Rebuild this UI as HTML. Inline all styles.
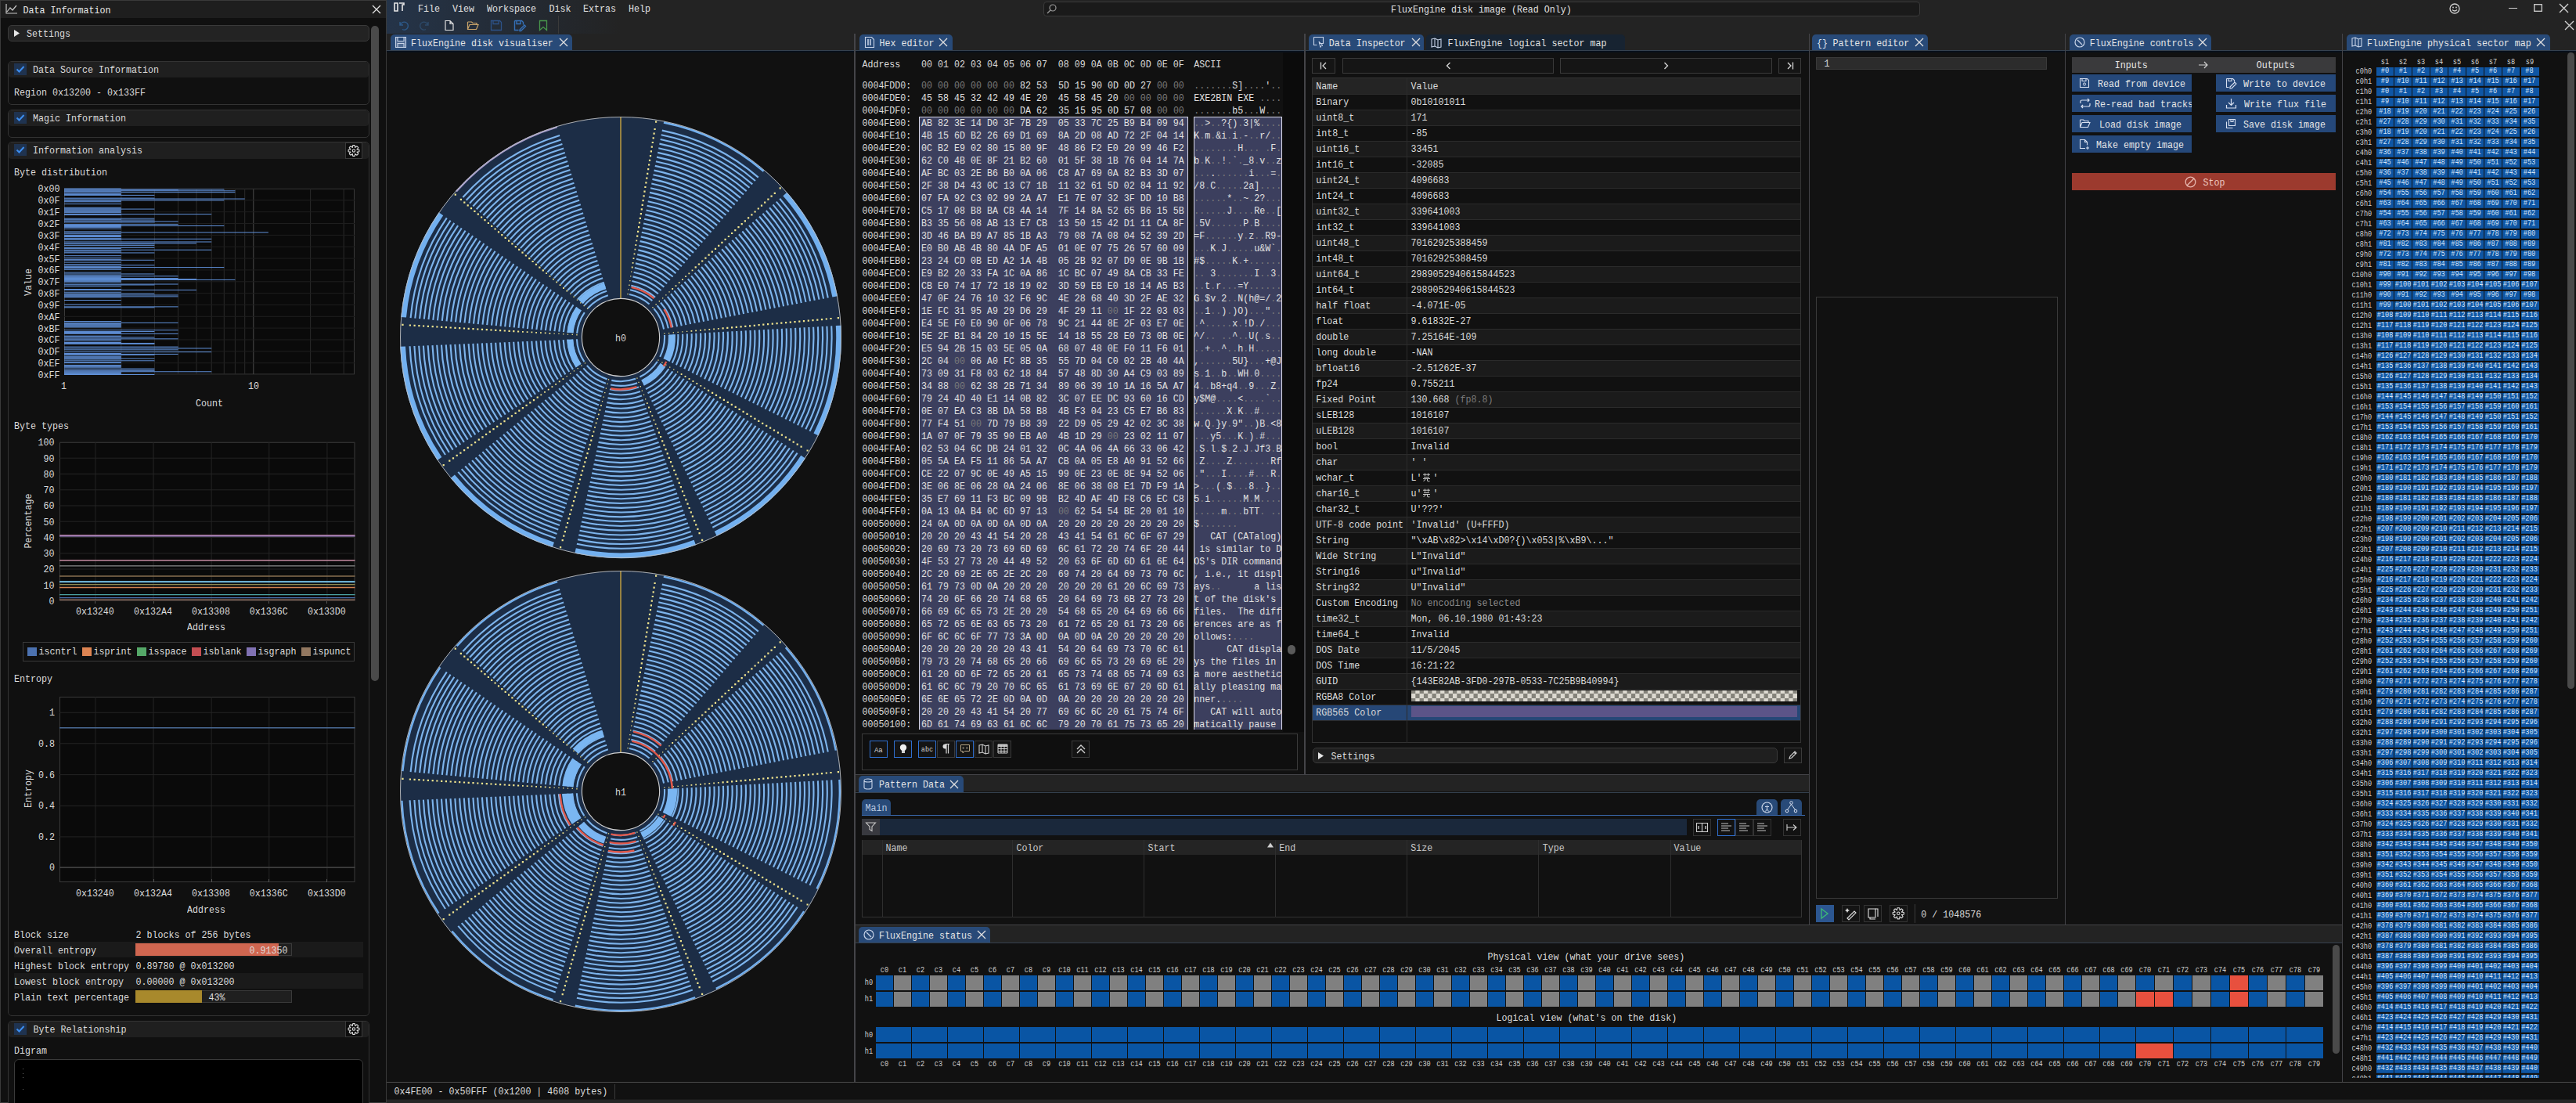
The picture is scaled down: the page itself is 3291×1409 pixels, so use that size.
<!DOCTYPE html><html><head><meta charset="utf-8"><style>
html,body{margin:0;padding:0;}
body{width:3291px;height:1409px;position:relative;overflow:hidden;background:#111111;font-family:"Liberation Mono", monospace;}
.t{position:absolute;white-space:pre;font-family:"Liberation Mono", monospace;font-size:11.67px;line-height:15px;color:#dcdcdc;transform:scaleY(1.08);transform-origin:0 10.6px;}
i{font-style:normal;color:#7a7a7a;}
.pm{position:absolute;white-space:pre;font-family:"Liberation Mono", monospace;font-size:8.6px;line-height:11px;color:#d4e4f8;transform:scaleY(1.22);transform-origin:0 50%;}
.pm b{font-weight:normal;display:inline-block;text-align:center;width:23px;}
.r{position:absolute;box-sizing:border-box;}
svg{position:absolute;overflow:visible;}
</style></head><body>
<div class="r" style="left:494.0px;top:0.0px;width:2797.0px;height:43.0px;background:#232323;"></div>
<div class="r" style="left:494.0px;top:0.0px;width:300.0px;height:43.0px;background:linear-gradient(90deg,rgba(38,66,104,0.55),rgba(35,35,35,0));"></div>
<div class="r" style="left:494.0px;top:43.0px;width:2797.0px;height:21.0px;background:#232323;"></div>
<div class="r" style="left:494.0px;top:64.0px;width:2797.0px;height:1.0px;background:#35414f;"></div>
<div class="r" style="left:494.0px;top:65.0px;width:2797.0px;height:2.0px;background:#08101b;"></div>
<svg style="left:503px;top:3px;" width="14" height="12" viewBox="0 0 14 12"><path d="M1 1h4v10h-4z" stroke="#e8e8e8" stroke-width="1.6" fill="none"/><path d="M7 1h6v2h-2v8" stroke="#e8e8e8" stroke-width="1.6" fill="none"/></svg>
<div class="t" style="left:534.0px;top:5.1px;color:#e0e0e0;">File</div>
<div class="t" style="left:578.0px;top:5.1px;color:#e0e0e0;">View</div>
<div class="t" style="left:622.0px;top:5.1px;color:#e0e0e0;">Workspace</div>
<div class="t" style="left:701.5px;top:5.1px;color:#e0e0e0;">Disk</div>
<div class="t" style="left:745.0px;top:5.1px;color:#e0e0e0;">Extras</div>
<div class="t" style="left:803.0px;top:5.1px;color:#e0e0e0;">Help</div>
<svg style="left:508px;top:26px;" width="15" height="14" viewBox="0 0 15 14"><path d="M3 2v4h4M3.5 6A5 5 0 1 1 6 11.5" stroke="#2d5a8a" stroke-width="1.4" fill="none"/></svg>
<svg style="left:538px;top:26px;" width="15" height="14" viewBox="0 0 15 14"><path d="M9 2v4h-4M8.5 6A5 5 0 1 0 6 11.5" stroke="#2d4a6a" stroke-width="1.4" fill="none"/></svg>
<svg style="left:568px;top:26px;" width="15" height="14" viewBox="0 0 15 14"><path d="M1 0.5h6l4 4v8h-10z M7 0.5v4h4" stroke="#e0e0e0" stroke-width="1.2" fill="none"/></svg>
<svg style="left:597px;top:26px;" width="15" height="14" viewBox="0 0 15 14"><path d="M0.5 2h5l1.5 1.5h5v2M0.5 2v9.5h11l2.5-6h-11l-2.5 6" stroke="#c9a46a" stroke-width="1.2" fill="none"/></svg>
<svg style="left:627px;top:26px;" width="15" height="14" viewBox="0 0 15 14"><path d="M0.5 0.5h11l2 2v10h-13z M3 0.5v4h7v-4" stroke="#2d5288" stroke-width="1.3" fill="none"/></svg>
<svg style="left:657px;top:26px;" width="15" height="14" viewBox="0 0 15 14"><path d="M0.5 0.5h9l2 2v3M0.5 0.5v12h5 M3 0.5v4h5v-4M7 12l6-6 1.5 1.5-6 6h-1.5z" stroke="#3470b8" stroke-width="1.4" fill="none"/></svg>
<svg style="left:689px;top:26px;" width="15" height="14" viewBox="0 0 15 14"><path d="M0.5 0.5h9v12l-4.5-4-4.5 4z" stroke="#48984c" stroke-width="1.3" fill="none"/></svg>
<div class="r" style="left:713.0px;top:20.0px;width:1.0px;height:23.0px;background:#3a3a3a;"></div>
<div class="r" style="left:1333.0px;top:2.0px;width:1120.0px;height:19.0px;background:#1a1a1a;border:1px solid #3a3a3a;border-radius:4px;"></div>
<svg style="left:1337px;top:5px;" width="13" height="13" viewBox="0 0 13 13"><circle cx="8" cy="5" r="4" stroke="#9a9a9a" stroke-width="1.2" fill="none"/><path d="M5 8L1 12" stroke="#9a9a9a" stroke-width="1.2"/></svg>
<div class="t" style="left:1777.0px;top:6.1px;color:#e0e0e0;">FluxEngine disk image (Read Only)</div>
<svg style="left:3129px;top:4px;" width="14" height="14" viewBox="0 0 14 14"><circle cx="7" cy="7" r="6" stroke="#d0d0d0" stroke-width="1.3" fill="none"/><circle cx="5" cy="5.5" r="0.9" fill="#d0d0d0"/><circle cx="9" cy="5.5" r="0.9" fill="#d0d0d0"/><path d="M4 8.5q3 3 6 0" stroke="#d0d0d0" stroke-width="1.2" fill="none"/></svg>
<div class="r" style="left:3204.5px;top:9.5px;width:11.0px;height:1.3px;background:#d0d0d0;"></div>
<svg style="left:3237px;top:5px;" width="11" height="10" viewBox="0 0 11 10"><rect x="0.7" y="0.7" width="9.6" height="8.6" stroke="#d0d0d0" stroke-width="1.3" fill="none"/></svg>
<svg style="left:3269.5px;top:4.5px;" width="11.0" height="11.0" viewBox="0 0 11.0 11.0"><path d="M0 0L11.0 11.0M11.0 0L0 11.0" stroke="#d0d0d0" stroke-width="1.4" fill="none"/></svg>
<svg style="left:3276.5px;top:26.5px;" width="11.0" height="11.0" viewBox="0 0 11.0 11.0"><path d="M0 0L11.0 11.0M11.0 0L0 11.0" stroke="#d0d0d0" stroke-width="1.4" fill="none"/></svg>
<div class="r" style="left:494.0px;top:1382.0px;width:2797.0px;height:1.0px;background:#3a3a3a;"></div>
<div class="r" style="left:494.0px;top:1383.0px;width:2797.0px;height:26.0px;background:#111111;"></div>
<div class="t" style="left:503.5px;top:1388.4px;">0x4FE00 - 0x50FFF (0x1200 | 4608 bytes)</div>
<div class="r" style="left:785.0px;top:1385.0px;width:1.0px;height:20.0px;background:#3a3a3a;"></div>
<div class="r" style="left:1667.5px;top:67.0px;width:643.5px;height:922.0px;background:#111111;"></div>
<div class="r" style="left:1671.7px;top:44.0px;width:147.6px;height:20.0px;background:#284a78;border-radius:5px 5px 0 0;"></div>
<div class="t" style="left:1697.7px;top:48.6px;color:#e6e6e6;">Data Inspector</div>
<svg style="left:1677.7px;top:47px;" width="14" height="14" viewBox="0 0 14 14"><path d="M0.5 0.5h12v8h-5M0.5 0.5v10h4" stroke="#c8d4e8" stroke-width="1.1" fill="none"/><path d="M7 6l5 5-2 0.5-1 2z" stroke="#c8d4e8" stroke-width="1" fill="none"/></svg>
<svg style="left:1803.5px;top:49px;" width="10" height="10" viewBox="0 0 10 10"><path d="M0 0L10 10M10 0L0 10" stroke="#e0e0e0" stroke-width="1.3" fill="none"/></svg>
<div class="r" style="left:1821.6px;top:44.0px;width:254.0px;height:20.0px;background:#172331;border-radius:5px 5px 0 0;"></div>
<svg style="left:1828px;top:48px;" width="14" height="13" viewBox="0 0 14 13"><path d="M1 2l4-1 4 2 4-1v10l-4 1-4-2-4 1z M5 1v10M9 3v10" stroke="#c8d4e8" stroke-width="1.1" fill="none"/></svg>
<div class="t" style="left:1849.6px;top:48.6px;color:#e0e0e0;">FluxEngine logical sector map</div>
<div class="r" style="left:1676.3px;top:73.7px;width:29.4px;height:20.6px;background:#151515;border:1px solid #3a3a3a;"></div>
<svg style="left:1686.0px;top:79px;" width="10" height="10" viewBox="0 0 10 10"><path d="M1.5 0.5v9M8 1L4 5l4 4" stroke="#d8d8d8" stroke-width="1.3" fill="none"/></svg>
<div class="r" style="left:1714.5px;top:73.7px;width:270.1px;height:20.6px;background:#151515;border:1px solid #3a3a3a;"></div>
<svg style="left:1846.55px;top:79px;" width="7" height="10" viewBox="0 0 7 10"><path d="M5.5 1L1.5 5l4 4" stroke="#d8d8d8" stroke-width="1.3" fill="none"/></svg>
<div class="r" style="left:1992.8px;top:73.7px;width:270.8px;height:20.6px;background:#151515;border:1px solid #3a3a3a;"></div>
<svg style="left:2125.2px;top:79px;" width="7" height="10" viewBox="0 0 7 10"><path d="M1.5 1l4 4-4 4" stroke="#d8d8d8" stroke-width="1.3" fill="none"/></svg>
<div class="r" style="left:2272.4px;top:73.7px;width:28.6px;height:20.6px;background:#151515;border:1px solid #3a3a3a;"></div>
<svg style="left:2281.7px;top:79px;" width="10" height="10" viewBox="0 0 10 10"><path d="M8.5 0.5v9M2 1l4 4-4 4" stroke="#d8d8d8" stroke-width="1.3" fill="none"/></svg>
<div class="r" style="left:1676.3px;top:99.0px;width:624.7px;height:850.2px;background:#111111;border:1px solid #333333;"></div>
<div class="r" style="left:1677.3px;top:99.5px;width:622.7px;height:20.2px;background:#242424;"></div>
<div class="t" style="left:1681.2px;top:103.6px;">Name</div>
<div class="t" style="left:1802.6px;top:103.6px;">Value</div>
<div class="r" style="left:1677.3px;top:119.7px;width:622.7px;height:1.0px;background:#2b2b2b;"></div>
<div class="t" style="left:1681.2px;top:123.8px;">Binary</div>
<div class="t" style="left:1802.6px;top:123.8px;">0b10101011</div>
<div class="r" style="left:1677.3px;top:139.7px;width:622.7px;height:20.0px;background:#1b1b1b;"></div>
<div class="r" style="left:1677.3px;top:139.7px;width:622.7px;height:1.0px;background:#2b2b2b;"></div>
<div class="t" style="left:1681.2px;top:143.8px;">uint8_t</div>
<div class="t" style="left:1802.6px;top:143.8px;">171</div>
<div class="r" style="left:1677.3px;top:159.7px;width:622.7px;height:1.0px;background:#2b2b2b;"></div>
<div class="t" style="left:1681.2px;top:163.8px;">int8_t</div>
<div class="t" style="left:1802.6px;top:163.8px;">-85</div>
<div class="r" style="left:1677.3px;top:179.7px;width:622.7px;height:20.0px;background:#1b1b1b;"></div>
<div class="r" style="left:1677.3px;top:179.7px;width:622.7px;height:1.0px;background:#2b2b2b;"></div>
<div class="t" style="left:1681.2px;top:183.8px;">uint16_t</div>
<div class="t" style="left:1802.6px;top:183.8px;">33451</div>
<div class="r" style="left:1677.3px;top:199.7px;width:622.7px;height:1.0px;background:#2b2b2b;"></div>
<div class="t" style="left:1681.2px;top:203.8px;">int16_t</div>
<div class="t" style="left:1802.6px;top:203.8px;">-32085</div>
<div class="r" style="left:1677.3px;top:219.7px;width:622.7px;height:20.0px;background:#1b1b1b;"></div>
<div class="r" style="left:1677.3px;top:219.7px;width:622.7px;height:1.0px;background:#2b2b2b;"></div>
<div class="t" style="left:1681.2px;top:223.8px;">uint24_t</div>
<div class="t" style="left:1802.6px;top:223.8px;">4096683</div>
<div class="r" style="left:1677.3px;top:239.7px;width:622.7px;height:1.0px;background:#2b2b2b;"></div>
<div class="t" style="left:1681.2px;top:243.8px;">int24_t</div>
<div class="t" style="left:1802.6px;top:243.8px;">4096683</div>
<div class="r" style="left:1677.3px;top:259.7px;width:622.7px;height:20.0px;background:#1b1b1b;"></div>
<div class="r" style="left:1677.3px;top:259.7px;width:622.7px;height:1.0px;background:#2b2b2b;"></div>
<div class="t" style="left:1681.2px;top:263.8px;">uint32_t</div>
<div class="t" style="left:1802.6px;top:263.8px;">339641003</div>
<div class="r" style="left:1677.3px;top:279.7px;width:622.7px;height:1.0px;background:#2b2b2b;"></div>
<div class="t" style="left:1681.2px;top:283.8px;">int32_t</div>
<div class="t" style="left:1802.6px;top:283.8px;">339641003</div>
<div class="r" style="left:1677.3px;top:299.7px;width:622.7px;height:20.0px;background:#1b1b1b;"></div>
<div class="r" style="left:1677.3px;top:299.7px;width:622.7px;height:1.0px;background:#2b2b2b;"></div>
<div class="t" style="left:1681.2px;top:303.8px;">uint48_t</div>
<div class="t" style="left:1802.6px;top:303.8px;">70162925388459</div>
<div class="r" style="left:1677.3px;top:319.7px;width:622.7px;height:1.0px;background:#2b2b2b;"></div>
<div class="t" style="left:1681.2px;top:323.8px;">int48_t</div>
<div class="t" style="left:1802.6px;top:323.8px;">70162925388459</div>
<div class="r" style="left:1677.3px;top:339.7px;width:622.7px;height:20.0px;background:#1b1b1b;"></div>
<div class="r" style="left:1677.3px;top:339.7px;width:622.7px;height:1.0px;background:#2b2b2b;"></div>
<div class="t" style="left:1681.2px;top:343.8px;">uint64_t</div>
<div class="t" style="left:1802.6px;top:343.8px;">2989052940615844523</div>
<div class="r" style="left:1677.3px;top:359.7px;width:622.7px;height:1.0px;background:#2b2b2b;"></div>
<div class="t" style="left:1681.2px;top:363.8px;">int64_t</div>
<div class="t" style="left:1802.6px;top:363.8px;">2989052940615844523</div>
<div class="r" style="left:1677.3px;top:379.7px;width:622.7px;height:20.0px;background:#1b1b1b;"></div>
<div class="r" style="left:1677.3px;top:379.7px;width:622.7px;height:1.0px;background:#2b2b2b;"></div>
<div class="t" style="left:1681.2px;top:383.8px;">half float</div>
<div class="t" style="left:1802.6px;top:383.8px;">-4.071E-05</div>
<div class="r" style="left:1677.3px;top:399.7px;width:622.7px;height:1.0px;background:#2b2b2b;"></div>
<div class="t" style="left:1681.2px;top:403.8px;">float</div>
<div class="t" style="left:1802.6px;top:403.8px;">9.61832E-27</div>
<div class="r" style="left:1677.3px;top:419.7px;width:622.7px;height:20.0px;background:#1b1b1b;"></div>
<div class="r" style="left:1677.3px;top:419.7px;width:622.7px;height:1.0px;background:#2b2b2b;"></div>
<div class="t" style="left:1681.2px;top:423.8px;">double</div>
<div class="t" style="left:1802.6px;top:423.8px;">7.25164E-109</div>
<div class="r" style="left:1677.3px;top:439.7px;width:622.7px;height:1.0px;background:#2b2b2b;"></div>
<div class="t" style="left:1681.2px;top:443.8px;">long double</div>
<div class="t" style="left:1802.6px;top:443.8px;">-NAN</div>
<div class="r" style="left:1677.3px;top:459.7px;width:622.7px;height:20.0px;background:#1b1b1b;"></div>
<div class="r" style="left:1677.3px;top:459.7px;width:622.7px;height:1.0px;background:#2b2b2b;"></div>
<div class="t" style="left:1681.2px;top:463.8px;">bfloat16</div>
<div class="t" style="left:1802.6px;top:463.8px;">-2.51262E-37</div>
<div class="r" style="left:1677.3px;top:479.7px;width:622.7px;height:1.0px;background:#2b2b2b;"></div>
<div class="t" style="left:1681.2px;top:483.8px;">fp24</div>
<div class="t" style="left:1802.6px;top:483.8px;">0.755211</div>
<div class="r" style="left:1677.3px;top:499.7px;width:622.7px;height:20.0px;background:#1b1b1b;"></div>
<div class="r" style="left:1677.3px;top:499.7px;width:622.7px;height:1.0px;background:#2b2b2b;"></div>
<div class="t" style="left:1681.2px;top:503.8px;">Fixed Point</div>
<div class="t" style="left:1802.6px;top:503.8px;">130.668</div>
<div class="t" style="left:1858.6px;top:503.8px;color:#7a7a7a;">(fp8.8)</div>
<div class="r" style="left:1677.3px;top:519.7px;width:622.7px;height:1.0px;background:#2b2b2b;"></div>
<div class="t" style="left:1681.2px;top:523.8px;">sLEB128</div>
<div class="t" style="left:1802.6px;top:523.8px;">1016107</div>
<div class="r" style="left:1677.3px;top:539.7px;width:622.7px;height:20.0px;background:#1b1b1b;"></div>
<div class="r" style="left:1677.3px;top:539.7px;width:622.7px;height:1.0px;background:#2b2b2b;"></div>
<div class="t" style="left:1681.2px;top:543.8px;">uLEB128</div>
<div class="t" style="left:1802.6px;top:543.8px;">1016107</div>
<div class="r" style="left:1677.3px;top:559.7px;width:622.7px;height:1.0px;background:#2b2b2b;"></div>
<div class="t" style="left:1681.2px;top:563.8px;">bool</div>
<div class="t" style="left:1802.6px;top:563.8px;">Invalid</div>
<div class="r" style="left:1677.3px;top:579.7px;width:622.7px;height:20.0px;background:#1b1b1b;"></div>
<div class="r" style="left:1677.3px;top:579.7px;width:622.7px;height:1.0px;background:#2b2b2b;"></div>
<div class="t" style="left:1681.2px;top:583.8px;">char</div>
<div class="t" style="left:1802.6px;top:583.8px;">' '</div>
<div class="r" style="left:1677.3px;top:599.7px;width:622.7px;height:1.0px;background:#2b2b2b;"></div>
<div class="t" style="left:1681.2px;top:603.8px;">wchar_t</div>
<div class="t" style="left:1802.6px;top:603.8px;">L'  '</div>
<svg style="left:1816.6px;top:604.2px;" width="11" height="11" viewBox="0 0 11 11"><path d="M1 2.2h9M3.5 0.5v3.5M7.5 0.5v3.5M2 5.5h7M1 7.5h9M4 7.5q0 2.5-2.5 3M6.5 7.5v2.5q0 0.8 1 0.8h2" stroke="#d8d8d8" stroke-width="0.9" fill="none"/></svg>
<div class="r" style="left:1677.3px;top:619.7px;width:622.7px;height:20.0px;background:#1b1b1b;"></div>
<div class="r" style="left:1677.3px;top:619.7px;width:622.7px;height:1.0px;background:#2b2b2b;"></div>
<div class="t" style="left:1681.2px;top:623.8px;">char16_t</div>
<div class="t" style="left:1802.6px;top:623.8px;">u'  '</div>
<svg style="left:1816.6px;top:624.2px;" width="11" height="11" viewBox="0 0 11 11"><path d="M1 2.2h9M3.5 0.5v3.5M7.5 0.5v3.5M2 5.5h7M1 7.5h9M4 7.5q0 2.5-2.5 3M6.5 7.5v2.5q0 0.8 1 0.8h2" stroke="#d8d8d8" stroke-width="0.9" fill="none"/></svg>
<div class="r" style="left:1677.3px;top:639.7px;width:622.7px;height:1.0px;background:#2b2b2b;"></div>
<div class="t" style="left:1681.2px;top:643.8px;">char32_t</div>
<div class="t" style="left:1802.6px;top:643.8px;">U'???'</div>
<div class="r" style="left:1677.3px;top:659.7px;width:622.7px;height:20.0px;background:#1b1b1b;"></div>
<div class="r" style="left:1677.3px;top:659.7px;width:622.7px;height:1.0px;background:#2b2b2b;"></div>
<div class="t" style="left:1681.2px;top:663.8px;">UTF-8 code point</div>
<div class="t" style="left:1802.6px;top:663.8px;">'Invalid' (U+FFFD)</div>
<div class="r" style="left:1677.3px;top:679.7px;width:622.7px;height:1.0px;background:#2b2b2b;"></div>
<div class="t" style="left:1681.2px;top:683.8px;">String</div>
<div class="t" style="left:1802.6px;top:683.8px;">"\xAB\x82&gt;\x14\xD0?{)\x053|%\xB9\..."</div>
<div class="r" style="left:1677.3px;top:699.7px;width:622.7px;height:20.0px;background:#1b1b1b;"></div>
<div class="r" style="left:1677.3px;top:699.7px;width:622.7px;height:1.0px;background:#2b2b2b;"></div>
<div class="t" style="left:1681.2px;top:703.8px;">Wide String</div>
<div class="t" style="left:1802.6px;top:703.8px;">L"Invalid"</div>
<div class="r" style="left:1677.3px;top:719.7px;width:622.7px;height:1.0px;background:#2b2b2b;"></div>
<div class="t" style="left:1681.2px;top:723.8px;">String16</div>
<div class="t" style="left:1802.6px;top:723.8px;">u"Invalid"</div>
<div class="r" style="left:1677.3px;top:739.7px;width:622.7px;height:20.0px;background:#1b1b1b;"></div>
<div class="r" style="left:1677.3px;top:739.7px;width:622.7px;height:1.0px;background:#2b2b2b;"></div>
<div class="t" style="left:1681.2px;top:743.8px;">String32</div>
<div class="t" style="left:1802.6px;top:743.8px;">U"Invalid"</div>
<div class="r" style="left:1677.3px;top:759.7px;width:622.7px;height:1.0px;background:#2b2b2b;"></div>
<div class="t" style="left:1681.2px;top:763.8px;">Custom Encoding</div>
<div class="t" style="left:1802.6px;top:763.8px;color:#8a8a8a;">No encoding selected</div>
<div class="r" style="left:1677.3px;top:779.7px;width:622.7px;height:20.0px;background:#1b1b1b;"></div>
<div class="r" style="left:1677.3px;top:779.7px;width:622.7px;height:1.0px;background:#2b2b2b;"></div>
<div class="t" style="left:1681.2px;top:783.8px;">time32_t</div>
<div class="t" style="left:1802.6px;top:783.8px;">Mon, 06.10.1980 01:43:23</div>
<div class="r" style="left:1677.3px;top:799.7px;width:622.7px;height:1.0px;background:#2b2b2b;"></div>
<div class="t" style="left:1681.2px;top:803.8px;">time64_t</div>
<div class="t" style="left:1802.6px;top:803.8px;">Invalid</div>
<div class="r" style="left:1677.3px;top:819.7px;width:622.7px;height:20.0px;background:#1b1b1b;"></div>
<div class="r" style="left:1677.3px;top:819.7px;width:622.7px;height:1.0px;background:#2b2b2b;"></div>
<div class="t" style="left:1681.2px;top:823.8px;">DOS Date</div>
<div class="t" style="left:1802.6px;top:823.8px;">11/5/2045</div>
<div class="r" style="left:1677.3px;top:839.7px;width:622.7px;height:1.0px;background:#2b2b2b;"></div>
<div class="t" style="left:1681.2px;top:843.8px;">DOS Time</div>
<div class="t" style="left:1802.6px;top:843.8px;">16:21:22</div>
<div class="r" style="left:1677.3px;top:859.7px;width:622.7px;height:20.0px;background:#1b1b1b;"></div>
<div class="r" style="left:1677.3px;top:859.7px;width:622.7px;height:1.0px;background:#2b2b2b;"></div>
<div class="t" style="left:1681.2px;top:863.8px;">GUID</div>
<div class="t" style="left:1802.6px;top:863.8px;">{143E82AB-3FD0-297B-0533-7C25B9B40994}</div>
<div class="r" style="left:1677.3px;top:879.7px;width:622.7px;height:1.0px;background:#2b2b2b;"></div>
<div class="t" style="left:1681.2px;top:883.8px;">RGBA8 Color</div>
<svg style="left:1802.6px;top:881.7px;overflow:hidden;" width="493" height="14" viewBox="0 0 493 14"><rect width="493" height="14" fill="#84827a"/><rect x="0.00" y="4" width="5.31" height="6" fill="#dcd9d0"/><rect x="5.30" y="-2" width="5.31" height="6" fill="#dcd9d0"/><rect x="5.30" y="10" width="5.31" height="6" fill="#dcd9d0"/><rect x="10.60" y="4" width="5.31" height="6" fill="#dcd9d0"/><rect x="15.90" y="-2" width="5.31" height="6" fill="#dcd9d0"/><rect x="15.90" y="10" width="5.31" height="6" fill="#dcd9d0"/><rect x="21.20" y="4" width="5.31" height="6" fill="#dcd9d0"/><rect x="26.50" y="-2" width="5.31" height="6" fill="#dcd9d0"/><rect x="26.50" y="10" width="5.31" height="6" fill="#dcd9d0"/><rect x="31.80" y="4" width="5.31" height="6" fill="#dcd9d0"/><rect x="37.10" y="-2" width="5.31" height="6" fill="#dcd9d0"/><rect x="37.10" y="10" width="5.31" height="6" fill="#dcd9d0"/><rect x="42.40" y="4" width="5.31" height="6" fill="#dcd9d0"/><rect x="47.70" y="-2" width="5.31" height="6" fill="#dcd9d0"/><rect x="47.70" y="10" width="5.31" height="6" fill="#dcd9d0"/><rect x="53.00" y="4" width="5.31" height="6" fill="#dcd9d0"/><rect x="58.30" y="-2" width="5.31" height="6" fill="#dcd9d0"/><rect x="58.30" y="10" width="5.31" height="6" fill="#dcd9d0"/><rect x="63.60" y="4" width="5.31" height="6" fill="#dcd9d0"/><rect x="68.90" y="-2" width="5.31" height="6" fill="#dcd9d0"/><rect x="68.90" y="10" width="5.31" height="6" fill="#dcd9d0"/><rect x="74.20" y="4" width="5.31" height="6" fill="#dcd9d0"/><rect x="79.50" y="-2" width="5.31" height="6" fill="#dcd9d0"/><rect x="79.50" y="10" width="5.31" height="6" fill="#dcd9d0"/><rect x="84.80" y="4" width="5.31" height="6" fill="#dcd9d0"/><rect x="90.10" y="-2" width="5.31" height="6" fill="#dcd9d0"/><rect x="90.10" y="10" width="5.31" height="6" fill="#dcd9d0"/><rect x="95.40" y="4" width="5.31" height="6" fill="#dcd9d0"/><rect x="100.70" y="-2" width="5.31" height="6" fill="#dcd9d0"/><rect x="100.70" y="10" width="5.31" height="6" fill="#dcd9d0"/><rect x="106.00" y="4" width="5.31" height="6" fill="#dcd9d0"/><rect x="111.30" y="-2" width="5.31" height="6" fill="#dcd9d0"/><rect x="111.30" y="10" width="5.31" height="6" fill="#dcd9d0"/><rect x="116.60" y="4" width="5.31" height="6" fill="#dcd9d0"/><rect x="121.90" y="-2" width="5.31" height="6" fill="#dcd9d0"/><rect x="121.90" y="10" width="5.31" height="6" fill="#dcd9d0"/><rect x="127.20" y="4" width="5.31" height="6" fill="#dcd9d0"/><rect x="132.50" y="-2" width="5.31" height="6" fill="#dcd9d0"/><rect x="132.50" y="10" width="5.31" height="6" fill="#dcd9d0"/><rect x="137.80" y="4" width="5.31" height="6" fill="#dcd9d0"/><rect x="143.10" y="-2" width="5.31" height="6" fill="#dcd9d0"/><rect x="143.10" y="10" width="5.31" height="6" fill="#dcd9d0"/><rect x="148.40" y="4" width="5.31" height="6" fill="#dcd9d0"/><rect x="153.70" y="-2" width="5.31" height="6" fill="#dcd9d0"/><rect x="153.70" y="10" width="5.31" height="6" fill="#dcd9d0"/><rect x="159.00" y="4" width="5.31" height="6" fill="#dcd9d0"/><rect x="164.30" y="-2" width="5.31" height="6" fill="#dcd9d0"/><rect x="164.30" y="10" width="5.31" height="6" fill="#dcd9d0"/><rect x="169.60" y="4" width="5.31" height="6" fill="#dcd9d0"/><rect x="174.90" y="-2" width="5.31" height="6" fill="#dcd9d0"/><rect x="174.90" y="10" width="5.31" height="6" fill="#dcd9d0"/><rect x="180.20" y="4" width="5.31" height="6" fill="#dcd9d0"/><rect x="185.50" y="-2" width="5.31" height="6" fill="#dcd9d0"/><rect x="185.50" y="10" width="5.31" height="6" fill="#dcd9d0"/><rect x="190.80" y="4" width="5.31" height="6" fill="#dcd9d0"/><rect x="196.10" y="-2" width="5.31" height="6" fill="#dcd9d0"/><rect x="196.10" y="10" width="5.31" height="6" fill="#dcd9d0"/><rect x="201.40" y="4" width="5.31" height="6" fill="#dcd9d0"/><rect x="206.70" y="-2" width="5.31" height="6" fill="#dcd9d0"/><rect x="206.70" y="10" width="5.31" height="6" fill="#dcd9d0"/><rect x="212.00" y="4" width="5.31" height="6" fill="#dcd9d0"/><rect x="217.30" y="-2" width="5.31" height="6" fill="#dcd9d0"/><rect x="217.30" y="10" width="5.31" height="6" fill="#dcd9d0"/><rect x="222.60" y="4" width="5.31" height="6" fill="#dcd9d0"/><rect x="227.90" y="-2" width="5.31" height="6" fill="#dcd9d0"/><rect x="227.90" y="10" width="5.31" height="6" fill="#dcd9d0"/><rect x="233.20" y="4" width="5.31" height="6" fill="#dcd9d0"/><rect x="238.50" y="-2" width="5.31" height="6" fill="#dcd9d0"/><rect x="238.50" y="10" width="5.31" height="6" fill="#dcd9d0"/><rect x="243.80" y="4" width="5.31" height="6" fill="#dcd9d0"/><rect x="249.10" y="-2" width="5.31" height="6" fill="#dcd9d0"/><rect x="249.10" y="10" width="5.31" height="6" fill="#dcd9d0"/><rect x="254.40" y="4" width="5.31" height="6" fill="#dcd9d0"/><rect x="259.70" y="-2" width="5.31" height="6" fill="#dcd9d0"/><rect x="259.70" y="10" width="5.31" height="6" fill="#dcd9d0"/><rect x="265.00" y="4" width="5.31" height="6" fill="#dcd9d0"/><rect x="270.30" y="-2" width="5.31" height="6" fill="#dcd9d0"/><rect x="270.30" y="10" width="5.31" height="6" fill="#dcd9d0"/><rect x="275.60" y="4" width="5.31" height="6" fill="#dcd9d0"/><rect x="280.90" y="-2" width="5.31" height="6" fill="#dcd9d0"/><rect x="280.90" y="10" width="5.31" height="6" fill="#dcd9d0"/><rect x="286.20" y="4" width="5.31" height="6" fill="#dcd9d0"/><rect x="291.50" y="-2" width="5.31" height="6" fill="#dcd9d0"/><rect x="291.50" y="10" width="5.31" height="6" fill="#dcd9d0"/><rect x="296.80" y="4" width="5.31" height="6" fill="#dcd9d0"/><rect x="302.10" y="-2" width="5.31" height="6" fill="#dcd9d0"/><rect x="302.10" y="10" width="5.31" height="6" fill="#dcd9d0"/><rect x="307.40" y="4" width="5.31" height="6" fill="#dcd9d0"/><rect x="312.70" y="-2" width="5.31" height="6" fill="#dcd9d0"/><rect x="312.70" y="10" width="5.31" height="6" fill="#dcd9d0"/><rect x="318.00" y="4" width="5.31" height="6" fill="#dcd9d0"/><rect x="323.30" y="-2" width="5.31" height="6" fill="#dcd9d0"/><rect x="323.30" y="10" width="5.31" height="6" fill="#dcd9d0"/><rect x="328.60" y="4" width="5.31" height="6" fill="#dcd9d0"/><rect x="333.90" y="-2" width="5.31" height="6" fill="#dcd9d0"/><rect x="333.90" y="10" width="5.31" height="6" fill="#dcd9d0"/><rect x="339.20" y="4" width="5.31" height="6" fill="#dcd9d0"/><rect x="344.50" y="-2" width="5.31" height="6" fill="#dcd9d0"/><rect x="344.50" y="10" width="5.31" height="6" fill="#dcd9d0"/><rect x="349.80" y="4" width="5.31" height="6" fill="#dcd9d0"/><rect x="355.10" y="-2" width="5.31" height="6" fill="#dcd9d0"/><rect x="355.10" y="10" width="5.31" height="6" fill="#dcd9d0"/><rect x="360.40" y="4" width="5.31" height="6" fill="#dcd9d0"/><rect x="365.70" y="-2" width="5.31" height="6" fill="#dcd9d0"/><rect x="365.70" y="10" width="5.31" height="6" fill="#dcd9d0"/><rect x="371.00" y="4" width="5.31" height="6" fill="#dcd9d0"/><rect x="376.30" y="-2" width="5.31" height="6" fill="#dcd9d0"/><rect x="376.30" y="10" width="5.31" height="6" fill="#dcd9d0"/><rect x="381.60" y="4" width="5.31" height="6" fill="#dcd9d0"/><rect x="386.90" y="-2" width="5.31" height="6" fill="#dcd9d0"/><rect x="386.90" y="10" width="5.31" height="6" fill="#dcd9d0"/><rect x="392.20" y="4" width="5.31" height="6" fill="#dcd9d0"/><rect x="397.50" y="-2" width="5.31" height="6" fill="#dcd9d0"/><rect x="397.50" y="10" width="5.31" height="6" fill="#dcd9d0"/><rect x="402.80" y="4" width="5.31" height="6" fill="#dcd9d0"/><rect x="408.10" y="-2" width="5.31" height="6" fill="#dcd9d0"/><rect x="408.10" y="10" width="5.31" height="6" fill="#dcd9d0"/><rect x="413.40" y="4" width="5.31" height="6" fill="#dcd9d0"/><rect x="418.70" y="-2" width="5.31" height="6" fill="#dcd9d0"/><rect x="418.70" y="10" width="5.31" height="6" fill="#dcd9d0"/><rect x="424.00" y="4" width="5.31" height="6" fill="#dcd9d0"/><rect x="429.30" y="-2" width="5.31" height="6" fill="#dcd9d0"/><rect x="429.30" y="10" width="5.31" height="6" fill="#dcd9d0"/><rect x="434.60" y="4" width="5.31" height="6" fill="#dcd9d0"/><rect x="439.90" y="-2" width="5.31" height="6" fill="#dcd9d0"/><rect x="439.90" y="10" width="5.31" height="6" fill="#dcd9d0"/><rect x="445.20" y="4" width="5.31" height="6" fill="#dcd9d0"/><rect x="450.50" y="-2" width="5.31" height="6" fill="#dcd9d0"/><rect x="450.50" y="10" width="5.31" height="6" fill="#dcd9d0"/><rect x="455.80" y="4" width="5.31" height="6" fill="#dcd9d0"/><rect x="461.10" y="-2" width="5.31" height="6" fill="#dcd9d0"/><rect x="461.10" y="10" width="5.31" height="6" fill="#dcd9d0"/><rect x="466.40" y="4" width="5.31" height="6" fill="#dcd9d0"/><rect x="471.70" y="-2" width="5.31" height="6" fill="#dcd9d0"/><rect x="471.70" y="10" width="5.31" height="6" fill="#dcd9d0"/><rect x="477.00" y="4" width="5.31" height="6" fill="#dcd9d0"/><rect x="482.30" y="-2" width="5.31" height="6" fill="#dcd9d0"/><rect x="482.30" y="10" width="5.31" height="6" fill="#dcd9d0"/><rect x="487.60" y="4" width="5.31" height="6" fill="#dcd9d0"/><rect x="492.90" y="-2" width="5.31" height="6" fill="#dcd9d0"/><rect x="492.90" y="10" width="5.31" height="6" fill="#dcd9d0"/></svg>
<div class="r" style="left:1677.3px;top:899.7px;width:622.7px;height:20.0px;background:#264776;"></div>
<div class="r" style="left:1677.3px;top:899.7px;width:622.7px;height:1.0px;background:#2b2b2b;"></div>
<div class="t" style="left:1681.2px;top:903.8px;">RGB565 Color</div>
<div class="r" style="left:1802.6px;top:902.2px;width:493.0px;height:14.0px;background:#5c5488;"></div>
<div class="r" style="left:1797.0px;top:99.5px;width:1.0px;height:849.5px;background:#2b2b2b;"></div>
<div class="r" style="left:1677.3px;top:919.7px;width:622.7px;height:1.0px;background:#2b2b2b;"></div>
<div class="r" style="left:1676.5px;top:954.8px;width:594.0px;height:20.5px;background:#1f1f1f;border:1px solid #3a3a3a;border-radius:5px;"></div>
<svg style="left:1684px;top:961px;" width="8" height="9" viewBox="0 0 8 9"><path d="M0 0L7 4.5L0 9z" fill="#e6e6e6"/></svg>
<div class="t" style="left:1700.6px;top:959.6px;">Settings</div>
<div class="r" style="left:2279.0px;top:954.8px;width:22.6px;height:20.5px;background:#151515;border:1px solid #3a3a3a;"></div>
<svg style="left:2284px;top:958px;" width="13" height="13" viewBox="0 0 13 13"><path d="M2 11l1-3 6-6 2 2-6 6z M8 3l2 2" stroke="#d8d8d8" stroke-width="1.1" fill="none"/></svg>
<div class="r" style="left:2310.5px;top:43.0px;width:1.5px;height:1140.0px;background:#444448;"></div>
<div class="r" style="left:2312.0px;top:67.0px;width:326.0px;height:1114.0px;background:#121212;"></div>
<div class="r" style="left:2315.4px;top:44.0px;width:148.0px;height:20.0px;background:#284a78;border-radius:5px 5px 0 0;"></div>
<div class="t" style="left:2341.4px;top:48.6px;color:#e6e6e6;">Pattern editor</div>
<div class="t" style="left:2321.0px;top:48.6px;color:#d8e0f0;">{}</div>
<svg style="left:2447px;top:49px;" width="10" height="10" viewBox="0 0 10 10"><path d="M0 0L10 10M10 0L0 10" stroke="#e0e0e0" stroke-width="1.3" fill="none"/></svg>
<div class="r" style="left:2320.0px;top:72.8px;width:295.2px;height:16.2px;background:#2c2c2c;border:1px solid #3a3a3a;"></div>
<div class="t" style="left:2330.5px;top:75.1px;color:#d8d8d8;">1</div>
<div class="r" style="left:2320.0px;top:379.0px;width:308.8px;height:769.2px;background:#111111;border:1px solid #3a3a3a;"></div>
<div class="r" style="left:2320.0px;top:1156.0px;width:22.8px;height:21.7px;background:#2c5690;"></div>
<svg style="left:2325px;top:1159px;" width="12" height="16" viewBox="0 0 12 16"><path d="M2 2l8 6-8 6z" stroke="#3cb878" stroke-width="1.4" fill="none"/></svg>
<div class="r" style="left:2353.0px;top:1156.0px;width:22.7px;height:21.7px;background:#141414;border:1px solid #333333;"></div>
<svg style="left:2356px;top:1158px;" width="17" height="17" viewBox="0 0 17 17"><path d="M4 15l9-9 2 2-9 9z" stroke="#e0e0e0" stroke-width="1.1" fill="none"/><path d="M4 2l1 2 2 1-2 1-1 2-1-2-2-1 2-1z" fill="#e0e0e0"/></svg>
<div class="r" style="left:2381.0px;top:1156.0px;width:22.7px;height:21.7px;background:#141414;border:1px solid #333333;"></div>
<svg style="left:2386px;top:1158px;" width="14" height="17" viewBox="0 0 14 17"><path d="M1 3h9v11h-9z M3 14v2h7" stroke="#e0e0e0" stroke-width="1.1" fill="none"/><path d="M10 3h3v10" stroke="#e0e0e0" stroke-width="1.1" fill="none"/></svg>
<div class="r" style="left:2413.9px;top:1156.0px;width:22.7px;height:21.7px;background:#141414;border:1px solid #333333;"></div>
<svg style="left:2413.9px;top:1156px;" width="23" height="22" viewBox="0 0 23 22"><polygon points="9.37,6.62 10.06,3.71 12.54,3.71 13.23,6.62 12.89,6.48 15.44,4.91 17.19,6.66 15.62,9.21 15.48,8.87 18.39,9.56 18.39,12.04 15.48,12.73 15.62,12.39 17.19,14.94 15.44,16.69 12.89,15.12 13.23,14.98 12.54,17.89 10.06,17.89 9.37,14.98 9.71,15.12 7.16,16.69 5.41,14.94 6.98,12.39 7.12,12.73 4.21,12.04 4.21,9.56 7.12,8.87 6.98,9.21 5.41,6.66 7.16,4.91 9.71,6.48" stroke="#e0e0e0" stroke-width="1.1" fill="none" stroke-linejoin="round"/><circle cx="11.3" cy="10.8" r="1.73" stroke="#e0e0e0" stroke-width="1.1" fill="none"/></svg>
<div class="r" style="left:2445.5px;top:1155.0px;width:1.0px;height:24.0px;background:#3a3a3a;"></div>
<div class="t" style="left:2454.2px;top:1161.6px;">0 / 1048576</div>
<div class="r" style="left:2637.5px;top:43.0px;width:1.5px;height:1140.0px;background:#444448;"></div>
<div class="r" style="left:1092.5px;top:989.0px;width:1218.0px;height:192.0px;background:#111111;"></div>
<div class="r" style="left:1092.5px;top:988.5px;width:1218.0px;height:1.5px;background:#444448;"></div>
<div class="r" style="left:1092.5px;top:990.0px;width:1218.0px;height:21.0px;background:#232323;"></div>
<div class="r" style="left:1092.5px;top:1011.5px;width:1218.0px;height:1.0px;background:#35414f;"></div>
<div class="r" style="left:1097.0px;top:991.0px;width:134.0px;height:20.5px;background:#284a78;border-radius:5px 5px 0 0;"></div>
<svg style="left:1103px;top:994px;" width="12" height="15" viewBox="0 0 12 15"><path d="M1 3q0-2 5-2t5 2v9q0 2-5 2t-5-2z M1 3q0 2 5 2t5-2" stroke="#c8d4e8" stroke-width="1.1" fill="none"/></svg>
<div class="t" style="left:1123.0px;top:996.1px;color:#e6e6e6;">Pattern Data</div>
<svg style="left:1214px;top:996.5px;" width="10" height="10" viewBox="0 0 10 10"><path d="M0 0L10 10M10 0L0 10" stroke="#e0e0e0" stroke-width="1.3" fill="none"/></svg>
<div class="r" style="left:1101.0px;top:1021.0px;width:36.8px;height:20.0px;background:#284a78;border-radius:5px 5px 0 0;"></div>
<div class="t" style="left:1105.4px;top:1025.6px;color:#b8c8e0;">Main</div>
<div class="r" style="left:2244.0px;top:1021.0px;width:27.0px;height:20.0px;background:#284a78;border-radius:5px 5px 0 0;"></div>
<svg style="left:2250px;top:1024px;" width="15" height="15" viewBox="0 0 15 15"><circle cx="7.5" cy="7.5" r="6.5" stroke="#d8e0f0" stroke-width="1.1" fill="none"/><path d="M7.5 4v1M5 6.5h5M7.5 6.5v3l-2 3M7.5 9.5l2 3" stroke="#d8e0f0" stroke-width="1" fill="none"/></svg>
<div class="r" style="left:2275.0px;top:1021.0px;width:26.7px;height:20.0px;background:#284a78;border-radius:5px 5px 0 0;"></div>
<svg style="left:2280px;top:1023px;" width="17" height="16" viewBox="0 0 17 16"><circle cx="8.5" cy="2.5" r="1.8" stroke="#d8e0f0" fill="none"/><circle cx="3" cy="13" r="1.8" stroke="#d8e0f0" fill="none"/><circle cx="14" cy="13" r="1.8" stroke="#d8e0f0" fill="none"/><path d="M8.5 4.5l-5 7M8.5 4.5l5 7" stroke="#d8e0f0" fill="none"/></svg>
<div class="r" style="left:1101.0px;top:1041.0px;width:1205.0px;height:1.2px;background:#3a6ab0;"></div>
<div class="r" style="left:1101.0px;top:1046.0px;width:1053.6px;height:21.3px;background:#1a283b;"></div>
<div class="r" style="left:1101.0px;top:1046.0px;width:23.0px;height:21.3px;background:#38393f;"></div>
<svg style="left:1106px;top:1050px;" width="13" height="13" viewBox="0 0 13 13"><path d="M0.5 1h12l-4.5 5v5.5l-3-2v-3.5z" stroke="#c8c8c8" stroke-width="1.1" fill="none"/></svg>
<div class="r" style="left:2163.0px;top:1046.0px;width:22.6px;height:21.6px;background:#121212;border:1px solid #333333;"></div>
<svg style="left:2167px;top:1050px;" width="15" height="14" viewBox="0 0 15 14"><path d="M0.5 1.5h14v11h-14z M7.5 1.5v11" stroke="#d0d0d0" stroke-width="1.1" fill="none"/><path d="M3 5v4M12 5v4" stroke="#d0d0d0" stroke-width="1.3"/></svg>
<div class="r" style="left:2194.0px;top:1046.0px;width:22.6px;height:21.6px;background:#121212;border:1px solid #2f6fd0;"></div>
<svg style="left:2198px;top:1050px;" width="15" height="14" viewBox="0 0 15 14"><path d="M1 2h9M1 5h13M1 8h9M1 11h11" stroke="#c0c0c0" stroke-width="1.2" fill="none"/></svg>
<div class="r" style="left:2217.0px;top:1046.0px;width:22.6px;height:21.6px;background:#121212;border:1px solid #333333;"></div>
<svg style="left:2221px;top:1050px;" width="15" height="14" viewBox="0 0 15 14"><path d="M1 2h9M1 5h13M1 8h9M1 11h11" stroke="#c0c0c0" stroke-width="1.2" fill="none"/></svg>
<div class="r" style="left:2240.0px;top:1046.0px;width:22.6px;height:21.6px;background:#121212;border:1px solid #333333;"></div>
<svg style="left:2244px;top:1050px;" width="15" height="14" viewBox="0 0 15 14"><path d="M1 2h9M1 5h13M1 8h9M1 11h11" stroke="#c0c0c0" stroke-width="1.2" fill="none"/></svg>
<div class="r" style="left:2278.0px;top:1046.0px;width:22.6px;height:21.6px;background:#121212;border:1px solid #333333;"></div>
<svg style="left:2282px;top:1050px;" width="15" height="14" viewBox="0 0 15 14"><path d="M1 3v8M1 7h12M9 3.5l4 3.5-4 3.5" stroke="#d0d0d0" stroke-width="1.1" fill="none"/></svg>
<div class="r" style="left:1101.0px;top:1072.7px;width:1200.7px;height:99.5px;background:#111111;border:1px solid #333333;"></div>
<div class="r" style="left:1102.0px;top:1073.2px;width:1198.7px;height:19.2px;background:#242424;"></div>
<div class="r" style="left:1126.7px;top:1073.0px;width:1.0px;height:99.0px;background:#2e2e2e;"></div>
<div class="r" style="left:1293.0px;top:1073.0px;width:1.0px;height:99.0px;background:#2e2e2e;"></div>
<div class="r" style="left:1461.3px;top:1073.0px;width:1.0px;height:99.0px;background:#2e2e2e;"></div>
<div class="r" style="left:1629.4px;top:1073.0px;width:1.0px;height:99.0px;background:#2e2e2e;"></div>
<div class="r" style="left:1797.3px;top:1073.0px;width:1.0px;height:99.0px;background:#2e2e2e;"></div>
<div class="r" style="left:1965.3px;top:1073.0px;width:1.0px;height:99.0px;background:#2e2e2e;"></div>
<div class="r" style="left:2133.5px;top:1073.0px;width:1.0px;height:99.0px;background:#2e2e2e;"></div>
<div class="t" style="left:1131.4px;top:1077.1px;color:#c8c8c8;">Name</div>
<div class="t" style="left:1298.4px;top:1077.1px;color:#c8c8c8;">Color</div>
<div class="t" style="left:1466.5px;top:1077.1px;color:#c8c8c8;">Start</div>
<div class="t" style="left:1634.2px;top:1077.1px;color:#c8c8c8;">End</div>
<div class="t" style="left:1802.3px;top:1077.1px;color:#c8c8c8;">Size</div>
<div class="t" style="left:1970.7px;top:1077.1px;color:#c8c8c8;">Type</div>
<div class="t" style="left:2138.4px;top:1077.1px;color:#c8c8c8;">Value</div>
<svg style="left:1619px;top:1076px;" width="8" height="7" viewBox="0 0 8 7"><path d="M0 6.5L4 0.5L8 6.5z" fill="#d0d0d0"/></svg>
<div class="r" style="left:2639.0px;top:67.0px;width:353.0px;height:1114.0px;background:#111111;"></div>
<div class="r" style="left:2643.7px;top:44.0px;width:181.8px;height:20.0px;background:#284a78;border-radius:5px 5px 0 0;"></div>
<div class="t" style="left:2669.7px;top:48.6px;color:#e6e6e6;">FluxEngine controls</div>
<svg style="left:2649.7px;top:47px;" width="14" height="14" viewBox="0 0 14 14"><circle cx="7" cy="7" r="6" stroke="#c8d4e8" stroke-width="1.2" fill="none"/><path d="M4 4l6 6" stroke="#c8d4e8" stroke-width="1.2"/></svg>
<svg style="left:2809px;top:49px;" width="10" height="10" viewBox="0 0 10 10"><path d="M0 0L10 10M10 0L0 10" stroke="#e0e0e0" stroke-width="1.3" fill="none"/></svg>
<div class="r" style="left:2647.0px;top:72.9px;width:337.0px;height:20.0px;background:#3a3a3c;"></div>
<div class="t" style="left:2701.7px;top:77.1px;color:#e6e6e6;">Inputs</div>
<svg style="left:2809px;top:78px;" width="13" height="10" viewBox="0 0 13 10"><path d="M0 5h11M7 1l4 4-4 4" stroke="#d0d0d0" stroke-width="1.2" fill="none"/></svg>
<div class="t" style="left:2882.7px;top:77.1px;color:#e6e6e6;">Outputs</div>
<div class="r" style="left:2647.0px;top:95.4px;width:153.0px;height:21.4px;background:#25487a;"></div>
<svg style="left:2657px;top:99.9px;" width="14" height="13" viewBox="0 0 14 13"><path d="M0.5 0.5h9l2 2v9h-11z M3 0.5v3h5v-3" stroke="#d8e0f0" stroke-width="1.1" fill="none"/><circle cx="6" cy="7.5" r="1.6" stroke="#d8e0f0" fill="none"/></svg>
<div style="position:absolute;left:2647px;top:95.4px;width:153px;height:22px;overflow:hidden;">
<div class="t" style="left:33.0px;top:5.6px;color:#e6e6e6;">Read from device</div>
</div>
<div class="r" style="left:2647.0px;top:121.4px;width:153.0px;height:21.4px;background:#25487a;"></div>
<svg style="left:2657px;top:125.9px;" width="14" height="13" viewBox="0 0 14 13"><path d="M1 6v-2q0-2 2-2h9M10 0l2 2-2 2M13 6v2q0 2-2 2h-9M4 12l-2-2 2-2" stroke="#d8e0f0" stroke-width="1.2" fill="none"/></svg>
<div style="position:absolute;left:2647px;top:121.4px;width:153px;height:22px;overflow:hidden;">
<div class="t" style="left:29.0px;top:5.6px;color:#e6e6e6;">Re-read bad tracks</div>
</div>
<div class="r" style="left:2647.0px;top:147.3px;width:153.0px;height:21.4px;background:#25487a;"></div>
<svg style="left:2657px;top:151.8px;" width="14" height="13" viewBox="0 0 14 13"><path d="M0.5 1h4l1.5 1.5h5v2M0.5 1v9.5h10l2.5-6h-10l-2.5 6" stroke="#d8e0f0" stroke-width="1.1" fill="none"/></svg>
<div style="position:absolute;left:2647px;top:147.3px;width:153px;height:22px;overflow:hidden;">
<div class="t" style="left:35.0px;top:5.6px;color:#e6e6e6;">Load disk image</div>
</div>
<div class="r" style="left:2647.0px;top:173.2px;width:153.0px;height:21.4px;background:#25487a;"></div>
<svg style="left:2657px;top:177.7px;" width="14" height="13" viewBox="0 0 14 13"><path d="M7 11.5h-6.5v-11h6l3 3v4 M6.5 0.5v3h3 M10 9v4M8 11h4" stroke="#d8e0f0" stroke-width="1.1" fill="none"/></svg>
<div style="position:absolute;left:2647px;top:173.2px;width:153px;height:22px;overflow:hidden;">
<div class="t" style="left:31.0px;top:5.6px;color:#e6e6e6;">Make empty image</div>
</div>
<div class="r" style="left:2831.0px;top:95.4px;width:153.0px;height:21.4px;background:#25487a;"></div>
<svg style="left:2844px;top:99.9px;" width="14" height="13" viewBox="0 0 14 13"><path d="M0.5 0.5h8l2 2v2M0.5 0.5v11h3 M3 0.5v3h4v-3M5 11l6-6 2 2-6 6h-2z" stroke="#d8e0f0" stroke-width="1.1" fill="none"/></svg>
<div class="t" style="left:2866.0px;top:101.0px;color:#e6e6e6;">Write to device</div>
<div class="r" style="left:2831.0px;top:121.4px;width:153.0px;height:21.4px;background:#25487a;"></div>
<svg style="left:2844px;top:125.9px;" width="14" height="13" viewBox="0 0 14 13"><path d="M6.5 0v8M3 5l3.5 3.5 3.5-3.5M0.5 8v4h12v-4" stroke="#d8e0f0" stroke-width="1.2" fill="none"/></svg>
<div class="t" style="left:2867.0px;top:127.0px;color:#e6e6e6;">Write flux file</div>
<div class="r" style="left:2831.0px;top:147.3px;width:153.0px;height:21.4px;background:#25487a;"></div>
<svg style="left:2844px;top:151.8px;" width="14" height="13" viewBox="0 0 14 13"><path d="M3.5 0.5h8v8h-8z M0.5 3.5v8h8 M6 0.5v3h3v-3" stroke="#d8e0f0" stroke-width="1.1" fill="none"/></svg>
<div class="t" style="left:2866.0px;top:152.9px;color:#e6e6e6;">Save disk image</div>
<div class="r" style="left:2647.0px;top:221.0px;width:337.0px;height:22.0px;background:#9c3a2e;"></div>
<svg style="left:2791px;top:224.5px;" width="15" height="15" viewBox="0 0 15 15"><circle cx="7.5" cy="7.5" r="6.3" stroke="#e8b8b0" stroke-width="1.3" fill="none"/><path d="M3 12L12 3" stroke="#e8b8b0" stroke-width="1.3"/></svg>
<div class="t" style="left:2814.5px;top:227.1px;color:#ecc8c0;">Stop</div>
<div class="r" style="left:2991.5px;top:43.0px;width:1.5px;height:1340.0px;background:#444448;"></div>
<div class="r" style="left:2993.0px;top:67.0px;width:298.0px;height:1316.0px;background:#111111;"></div>
<div class="r" style="left:2998.0px;top:44.0px;width:259.5px;height:20.0px;background:#284a78;border-radius:5px 5px 0 0;"></div>
<div class="t" style="left:3024.0px;top:48.6px;color:#e6e6e6;">FluxEngine physical sector map</div>
<svg style="left:3004px;top:47px;" width="14" height="14" viewBox="0 0 14 14"><path d="M1 2l4-1 4 2 4-1v10l-4 1-4-2-4 1z M5 1v10M9 3v10" stroke="#c8d4e8" stroke-width="1.1" fill="none"/></svg>
<svg style="left:3241px;top:49px;" width="10" height="10" viewBox="0 0 10 10"><path d="M0 0L10 10M10 0L0 10" stroke="#e0e0e0" stroke-width="1.3" fill="none"/></svg>
<div class="r" style="left:3279.5px;top:67.0px;width:9.0px;height:813.0px;background:#4a4a4a;border-radius:4.5px;"></div>
<div style="position:absolute;left:2993px;top:67px;width:286px;height:1309.5px;overflow:hidden;">
<div class="t" style="left:48.8px;top:9.2px;font-size:8.6px;line-height:11px;color:#d0d0d0;transform:scaleY(1.25);">s1</div>
<div class="t" style="left:71.8px;top:9.2px;font-size:8.6px;line-height:11px;color:#d0d0d0;transform:scaleY(1.25);">s2</div>
<div class="t" style="left:94.8px;top:9.2px;font-size:8.6px;line-height:11px;color:#d0d0d0;transform:scaleY(1.25);">s3</div>
<div class="t" style="left:117.8px;top:9.2px;font-size:8.6px;line-height:11px;color:#d0d0d0;transform:scaleY(1.25);">s4</div>
<div class="t" style="left:140.8px;top:9.2px;font-size:8.6px;line-height:11px;color:#d0d0d0;transform:scaleY(1.25);">s5</div>
<div class="t" style="left:163.8px;top:9.2px;font-size:8.6px;line-height:11px;color:#d0d0d0;transform:scaleY(1.25);">s6</div>
<div class="t" style="left:186.8px;top:9.2px;font-size:8.6px;line-height:11px;color:#d0d0d0;transform:scaleY(1.25);">s7</div>
<div class="t" style="left:209.8px;top:9.2px;font-size:8.6px;line-height:11px;color:#d0d0d0;transform:scaleY(1.25);">s8</div>
<div class="t" style="left:233.8px;top:9.2px;font-size:8.6px;line-height:11px;color:#d0d0d0;transform:scaleY(1.25);">s9</div>
<div class="t" style="left:16.6px;top:20.8px;font-size:8.6px;line-height:11px;color:#d0d0d0;transform:scaleY(1.25);">c0h0</div>
<div class="t" style="left:16.6px;top:33.8px;font-size:8.6px;line-height:11px;color:#d0d0d0;transform:scaleY(1.25);">c0h1</div>
<div class="t" style="left:16.6px;top:46.8px;font-size:8.6px;line-height:11px;color:#d0d0d0;transform:scaleY(1.25);">c1h0</div>
<div class="t" style="left:16.6px;top:59.8px;font-size:8.6px;line-height:11px;color:#d0d0d0;transform:scaleY(1.25);">c1h1</div>
<div class="t" style="left:16.6px;top:72.8px;font-size:8.6px;line-height:11px;color:#d0d0d0;transform:scaleY(1.25);">c2h0</div>
<div class="t" style="left:16.6px;top:85.8px;font-size:8.6px;line-height:11px;color:#d0d0d0;transform:scaleY(1.25);">c2h1</div>
<div class="t" style="left:16.6px;top:98.8px;font-size:8.6px;line-height:11px;color:#d0d0d0;transform:scaleY(1.25);">c3h0</div>
<div class="t" style="left:16.6px;top:111.8px;font-size:8.6px;line-height:11px;color:#d0d0d0;transform:scaleY(1.25);">c3h1</div>
<div class="t" style="left:16.6px;top:124.8px;font-size:8.6px;line-height:11px;color:#d0d0d0;transform:scaleY(1.25);">c4h0</div>
<div class="t" style="left:16.6px;top:137.8px;font-size:8.6px;line-height:11px;color:#d0d0d0;transform:scaleY(1.25);">c4h1</div>
<div class="t" style="left:16.6px;top:150.8px;font-size:8.6px;line-height:11px;color:#d0d0d0;transform:scaleY(1.25);">c5h0</div>
<div class="t" style="left:16.6px;top:163.8px;font-size:8.6px;line-height:11px;color:#d0d0d0;transform:scaleY(1.25);">c5h1</div>
<div class="t" style="left:16.6px;top:176.8px;font-size:8.6px;line-height:11px;color:#d0d0d0;transform:scaleY(1.25);">c6h0</div>
<div class="t" style="left:16.6px;top:189.8px;font-size:8.6px;line-height:11px;color:#d0d0d0;transform:scaleY(1.25);">c6h1</div>
<div class="t" style="left:16.6px;top:202.8px;font-size:8.6px;line-height:11px;color:#d0d0d0;transform:scaleY(1.25);">c7h0</div>
<div class="t" style="left:16.6px;top:215.8px;font-size:8.6px;line-height:11px;color:#d0d0d0;transform:scaleY(1.25);">c7h1</div>
<div class="t" style="left:16.6px;top:228.8px;font-size:8.6px;line-height:11px;color:#d0d0d0;transform:scaleY(1.25);">c8h0</div>
<div class="t" style="left:16.6px;top:241.8px;font-size:8.6px;line-height:11px;color:#d0d0d0;transform:scaleY(1.25);">c8h1</div>
<div class="t" style="left:16.6px;top:254.8px;font-size:8.6px;line-height:11px;color:#d0d0d0;transform:scaleY(1.25);">c9h0</div>
<div class="t" style="left:16.6px;top:267.8px;font-size:8.6px;line-height:11px;color:#d0d0d0;transform:scaleY(1.25);">c9h1</div>
<div class="t" style="left:11.4px;top:280.8px;font-size:8.6px;line-height:11px;color:#d0d0d0;transform:scaleY(1.25);">c10h0</div>
<div class="t" style="left:11.4px;top:293.8px;font-size:8.6px;line-height:11px;color:#d0d0d0;transform:scaleY(1.25);">c10h1</div>
<div class="t" style="left:11.4px;top:306.8px;font-size:8.6px;line-height:11px;color:#d0d0d0;transform:scaleY(1.25);">c11h0</div>
<div class="t" style="left:11.4px;top:319.8px;font-size:8.6px;line-height:11px;color:#d0d0d0;transform:scaleY(1.25);">c11h1</div>
<div class="t" style="left:11.4px;top:332.8px;font-size:8.6px;line-height:11px;color:#d0d0d0;transform:scaleY(1.25);">c12h0</div>
<div class="t" style="left:11.4px;top:345.8px;font-size:8.6px;line-height:11px;color:#d0d0d0;transform:scaleY(1.25);">c12h1</div>
<div class="t" style="left:11.4px;top:358.8px;font-size:8.6px;line-height:11px;color:#d0d0d0;transform:scaleY(1.25);">c13h0</div>
<div class="t" style="left:11.4px;top:371.8px;font-size:8.6px;line-height:11px;color:#d0d0d0;transform:scaleY(1.25);">c13h1</div>
<div class="t" style="left:11.4px;top:384.8px;font-size:8.6px;line-height:11px;color:#d0d0d0;transform:scaleY(1.25);">c14h0</div>
<div class="t" style="left:11.4px;top:397.8px;font-size:8.6px;line-height:11px;color:#d0d0d0;transform:scaleY(1.25);">c14h1</div>
<div class="t" style="left:11.4px;top:410.8px;font-size:8.6px;line-height:11px;color:#d0d0d0;transform:scaleY(1.25);">c15h0</div>
<div class="t" style="left:11.4px;top:423.8px;font-size:8.6px;line-height:11px;color:#d0d0d0;transform:scaleY(1.25);">c15h1</div>
<div class="t" style="left:11.4px;top:436.8px;font-size:8.6px;line-height:11px;color:#d0d0d0;transform:scaleY(1.25);">c16h0</div>
<div class="t" style="left:11.4px;top:449.8px;font-size:8.6px;line-height:11px;color:#d0d0d0;transform:scaleY(1.25);">c16h1</div>
<div class="t" style="left:11.4px;top:462.8px;font-size:8.6px;line-height:11px;color:#d0d0d0;transform:scaleY(1.25);">c17h0</div>
<div class="t" style="left:11.4px;top:475.8px;font-size:8.6px;line-height:11px;color:#d0d0d0;transform:scaleY(1.25);">c17h1</div>
<div class="t" style="left:11.4px;top:488.8px;font-size:8.6px;line-height:11px;color:#d0d0d0;transform:scaleY(1.25);">c18h0</div>
<div class="t" style="left:11.4px;top:501.8px;font-size:8.6px;line-height:11px;color:#d0d0d0;transform:scaleY(1.25);">c18h1</div>
<div class="t" style="left:11.4px;top:514.8px;font-size:8.6px;line-height:11px;color:#d0d0d0;transform:scaleY(1.25);">c19h0</div>
<div class="t" style="left:11.4px;top:527.8px;font-size:8.6px;line-height:11px;color:#d0d0d0;transform:scaleY(1.25);">c19h1</div>
<div class="t" style="left:11.4px;top:540.8px;font-size:8.6px;line-height:11px;color:#d0d0d0;transform:scaleY(1.25);">c20h0</div>
<div class="t" style="left:11.4px;top:553.8px;font-size:8.6px;line-height:11px;color:#d0d0d0;transform:scaleY(1.25);">c20h1</div>
<div class="t" style="left:11.4px;top:566.8px;font-size:8.6px;line-height:11px;color:#d0d0d0;transform:scaleY(1.25);">c21h0</div>
<div class="t" style="left:11.4px;top:579.8px;font-size:8.6px;line-height:11px;color:#d0d0d0;transform:scaleY(1.25);">c21h1</div>
<div class="t" style="left:11.4px;top:592.8px;font-size:8.6px;line-height:11px;color:#d0d0d0;transform:scaleY(1.25);">c22h0</div>
<div class="t" style="left:11.4px;top:605.8px;font-size:8.6px;line-height:11px;color:#d0d0d0;transform:scaleY(1.25);">c22h1</div>
<div class="t" style="left:11.4px;top:618.8px;font-size:8.6px;line-height:11px;color:#d0d0d0;transform:scaleY(1.25);">c23h0</div>
<div class="t" style="left:11.4px;top:631.8px;font-size:8.6px;line-height:11px;color:#d0d0d0;transform:scaleY(1.25);">c23h1</div>
<div class="t" style="left:11.4px;top:644.8px;font-size:8.6px;line-height:11px;color:#d0d0d0;transform:scaleY(1.25);">c24h0</div>
<div class="t" style="left:11.4px;top:657.8px;font-size:8.6px;line-height:11px;color:#d0d0d0;transform:scaleY(1.25);">c24h1</div>
<div class="t" style="left:11.4px;top:670.8px;font-size:8.6px;line-height:11px;color:#d0d0d0;transform:scaleY(1.25);">c25h0</div>
<div class="t" style="left:11.4px;top:683.8px;font-size:8.6px;line-height:11px;color:#d0d0d0;transform:scaleY(1.25);">c25h1</div>
<div class="t" style="left:11.4px;top:696.8px;font-size:8.6px;line-height:11px;color:#d0d0d0;transform:scaleY(1.25);">c26h0</div>
<div class="t" style="left:11.4px;top:709.8px;font-size:8.6px;line-height:11px;color:#d0d0d0;transform:scaleY(1.25);">c26h1</div>
<div class="t" style="left:11.4px;top:722.8px;font-size:8.6px;line-height:11px;color:#d0d0d0;transform:scaleY(1.25);">c27h0</div>
<div class="t" style="left:11.4px;top:735.8px;font-size:8.6px;line-height:11px;color:#d0d0d0;transform:scaleY(1.25);">c27h1</div>
<div class="t" style="left:11.4px;top:748.8px;font-size:8.6px;line-height:11px;color:#d0d0d0;transform:scaleY(1.25);">c28h0</div>
<div class="t" style="left:11.4px;top:761.8px;font-size:8.6px;line-height:11px;color:#d0d0d0;transform:scaleY(1.25);">c28h1</div>
<div class="t" style="left:11.4px;top:774.8px;font-size:8.6px;line-height:11px;color:#d0d0d0;transform:scaleY(1.25);">c29h0</div>
<div class="t" style="left:11.4px;top:787.8px;font-size:8.6px;line-height:11px;color:#d0d0d0;transform:scaleY(1.25);">c29h1</div>
<div class="t" style="left:11.4px;top:800.8px;font-size:8.6px;line-height:11px;color:#d0d0d0;transform:scaleY(1.25);">c30h0</div>
<div class="t" style="left:11.4px;top:813.8px;font-size:8.6px;line-height:11px;color:#d0d0d0;transform:scaleY(1.25);">c30h1</div>
<div class="t" style="left:11.4px;top:826.8px;font-size:8.6px;line-height:11px;color:#d0d0d0;transform:scaleY(1.25);">c31h0</div>
<div class="t" style="left:11.4px;top:839.8px;font-size:8.6px;line-height:11px;color:#d0d0d0;transform:scaleY(1.25);">c31h1</div>
<div class="t" style="left:11.4px;top:852.8px;font-size:8.6px;line-height:11px;color:#d0d0d0;transform:scaleY(1.25);">c32h0</div>
<div class="t" style="left:11.4px;top:865.8px;font-size:8.6px;line-height:11px;color:#d0d0d0;transform:scaleY(1.25);">c32h1</div>
<div class="t" style="left:11.4px;top:878.8px;font-size:8.6px;line-height:11px;color:#d0d0d0;transform:scaleY(1.25);">c33h0</div>
<div class="t" style="left:11.4px;top:891.8px;font-size:8.6px;line-height:11px;color:#d0d0d0;transform:scaleY(1.25);">c33h1</div>
<div class="t" style="left:11.4px;top:904.8px;font-size:8.6px;line-height:11px;color:#d0d0d0;transform:scaleY(1.25);">c34h0</div>
<div class="t" style="left:11.4px;top:917.8px;font-size:8.6px;line-height:11px;color:#d0d0d0;transform:scaleY(1.25);">c34h1</div>
<div class="t" style="left:11.4px;top:930.8px;font-size:8.6px;line-height:11px;color:#d0d0d0;transform:scaleY(1.25);">c35h0</div>
<div class="t" style="left:11.4px;top:943.8px;font-size:8.6px;line-height:11px;color:#d0d0d0;transform:scaleY(1.25);">c35h1</div>
<div class="t" style="left:11.4px;top:956.8px;font-size:8.6px;line-height:11px;color:#d0d0d0;transform:scaleY(1.25);">c36h0</div>
<div class="t" style="left:11.4px;top:969.8px;font-size:8.6px;line-height:11px;color:#d0d0d0;transform:scaleY(1.25);">c36h1</div>
<div class="t" style="left:11.4px;top:982.8px;font-size:8.6px;line-height:11px;color:#d0d0d0;transform:scaleY(1.25);">c37h0</div>
<div class="t" style="left:11.4px;top:995.8px;font-size:8.6px;line-height:11px;color:#d0d0d0;transform:scaleY(1.25);">c37h1</div>
<div class="t" style="left:11.4px;top:1008.8px;font-size:8.6px;line-height:11px;color:#d0d0d0;transform:scaleY(1.25);">c38h0</div>
<div class="t" style="left:11.4px;top:1021.8px;font-size:8.6px;line-height:11px;color:#d0d0d0;transform:scaleY(1.25);">c38h1</div>
<div class="t" style="left:11.4px;top:1034.8px;font-size:8.6px;line-height:11px;color:#d0d0d0;transform:scaleY(1.25);">c39h0</div>
<div class="t" style="left:11.4px;top:1047.8px;font-size:8.6px;line-height:11px;color:#d0d0d0;transform:scaleY(1.25);">c39h1</div>
<div class="t" style="left:11.4px;top:1060.8px;font-size:8.6px;line-height:11px;color:#d0d0d0;transform:scaleY(1.25);">c40h0</div>
<div class="t" style="left:11.4px;top:1073.8px;font-size:8.6px;line-height:11px;color:#d0d0d0;transform:scaleY(1.25);">c40h1</div>
<div class="t" style="left:11.4px;top:1086.8px;font-size:8.6px;line-height:11px;color:#d0d0d0;transform:scaleY(1.25);">c41h0</div>
<div class="t" style="left:11.4px;top:1099.8px;font-size:8.6px;line-height:11px;color:#d0d0d0;transform:scaleY(1.25);">c41h1</div>
<div class="t" style="left:11.4px;top:1112.8px;font-size:8.6px;line-height:11px;color:#d0d0d0;transform:scaleY(1.25);">c42h0</div>
<div class="t" style="left:11.4px;top:1125.8px;font-size:8.6px;line-height:11px;color:#d0d0d0;transform:scaleY(1.25);">c42h1</div>
<div class="t" style="left:11.4px;top:1138.8px;font-size:8.6px;line-height:11px;color:#d0d0d0;transform:scaleY(1.25);">c43h0</div>
<div class="t" style="left:11.4px;top:1151.8px;font-size:8.6px;line-height:11px;color:#d0d0d0;transform:scaleY(1.25);">c43h1</div>
<div class="t" style="left:11.4px;top:1164.8px;font-size:8.6px;line-height:11px;color:#d0d0d0;transform:scaleY(1.25);">c44h0</div>
<div class="t" style="left:11.4px;top:1177.8px;font-size:8.6px;line-height:11px;color:#d0d0d0;transform:scaleY(1.25);">c44h1</div>
<div class="t" style="left:11.4px;top:1190.8px;font-size:8.6px;line-height:11px;color:#d0d0d0;transform:scaleY(1.25);">c45h0</div>
<div class="t" style="left:11.4px;top:1203.8px;font-size:8.6px;line-height:11px;color:#d0d0d0;transform:scaleY(1.25);">c45h1</div>
<div class="t" style="left:11.4px;top:1216.8px;font-size:8.6px;line-height:11px;color:#d0d0d0;transform:scaleY(1.25);">c46h0</div>
<div class="t" style="left:11.4px;top:1229.8px;font-size:8.6px;line-height:11px;color:#d0d0d0;transform:scaleY(1.25);">c46h1</div>
<div class="t" style="left:11.4px;top:1242.8px;font-size:8.6px;line-height:11px;color:#d0d0d0;transform:scaleY(1.25);">c47h0</div>
<div class="t" style="left:11.4px;top:1255.8px;font-size:8.6px;line-height:11px;color:#d0d0d0;transform:scaleY(1.25);">c47h1</div>
<div class="t" style="left:11.4px;top:1268.8px;font-size:8.6px;line-height:11px;color:#d0d0d0;transform:scaleY(1.25);">c48h0</div>
<div class="t" style="left:11.4px;top:1281.8px;font-size:8.6px;line-height:11px;color:#d0d0d0;transform:scaleY(1.25);">c48h1</div>
<div class="t" style="left:11.4px;top:1294.8px;font-size:8.6px;line-height:11px;color:#d0d0d0;transform:scaleY(1.25);">c49h0</div>
<div class="t" style="left:11.4px;top:1307.8px;font-size:8.6px;line-height:11px;color:#d0d0d0;transform:scaleY(1.25);">c49h1</div>
<svg style="left:0;top:0" width="286" height="1310"><rect x="43.0" y="19.0" width="22" height="10.8" fill="#0f56a4"/><rect x="66.0" y="19.0" width="22" height="10.8" fill="#0f56a4"/><rect x="89.0" y="19.0" width="22" height="10.8" fill="#0f56a4"/><rect x="112.0" y="19.0" width="22" height="10.8" fill="#0f56a4"/><rect x="135.0" y="19.0" width="22" height="10.8" fill="#0f56a4"/><rect x="158.0" y="19.0" width="22" height="10.8" fill="#0f56a4"/><rect x="181.0" y="19.0" width="22" height="10.8" fill="#0f56a4"/><rect x="204.0" y="19.0" width="22" height="10.8" fill="#0f56a4"/><rect x="228.0" y="19.0" width="23" height="10.8" fill="#0f56a4"/><rect x="43.0" y="32.0" width="22" height="10.8" fill="#0f56a4"/><rect x="66.0" y="32.0" width="22" height="10.8" fill="#0f56a4"/><rect x="89.0" y="32.0" width="22" height="10.8" fill="#0f56a4"/><rect x="112.0" y="32.0" width="22" height="10.8" fill="#0f56a4"/><rect x="135.0" y="32.0" width="22" height="10.8" fill="#0f56a4"/><rect x="158.0" y="32.0" width="22" height="10.8" fill="#0f56a4"/><rect x="181.0" y="32.0" width="22" height="10.8" fill="#0f56a4"/><rect x="204.0" y="32.0" width="22" height="10.8" fill="#0f56a4"/><rect x="228.0" y="32.0" width="23" height="10.8" fill="#0f56a4"/><rect x="43.0" y="45.0" width="22" height="10.8" fill="#0f56a4"/><rect x="66.0" y="45.0" width="22" height="10.8" fill="#0f56a4"/><rect x="89.0" y="45.0" width="22" height="10.8" fill="#0f56a4"/><rect x="112.0" y="45.0" width="22" height="10.8" fill="#0f56a4"/><rect x="135.0" y="45.0" width="22" height="10.8" fill="#0f56a4"/><rect x="158.0" y="45.0" width="22" height="10.8" fill="#0f56a4"/><rect x="181.0" y="45.0" width="22" height="10.8" fill="#0f56a4"/><rect x="204.0" y="45.0" width="22" height="10.8" fill="#0f56a4"/><rect x="228.0" y="45.0" width="23" height="10.8" fill="#0f56a4"/><rect x="43.0" y="58.0" width="22" height="10.8" fill="#0f56a4"/><rect x="66.0" y="58.0" width="22" height="10.8" fill="#0f56a4"/><rect x="89.0" y="58.0" width="22" height="10.8" fill="#0f56a4"/><rect x="112.0" y="58.0" width="22" height="10.8" fill="#0f56a4"/><rect x="135.0" y="58.0" width="22" height="10.8" fill="#0f56a4"/><rect x="158.0" y="58.0" width="22" height="10.8" fill="#0f56a4"/><rect x="181.0" y="58.0" width="22" height="10.8" fill="#0f56a4"/><rect x="204.0" y="58.0" width="22" height="10.8" fill="#0f56a4"/><rect x="228.0" y="58.0" width="23" height="10.8" fill="#0f56a4"/><rect x="43.0" y="71.0" width="22" height="10.8" fill="#0f56a4"/><rect x="66.0" y="71.0" width="22" height="10.8" fill="#0f56a4"/><rect x="89.0" y="71.0" width="22" height="10.8" fill="#0f56a4"/><rect x="112.0" y="71.0" width="22" height="10.8" fill="#0f56a4"/><rect x="135.0" y="71.0" width="22" height="10.8" fill="#0f56a4"/><rect x="158.0" y="71.0" width="22" height="10.8" fill="#0f56a4"/><rect x="181.0" y="71.0" width="22" height="10.8" fill="#0f56a4"/><rect x="204.0" y="71.0" width="22" height="10.8" fill="#0f56a4"/><rect x="228.0" y="71.0" width="23" height="10.8" fill="#0f56a4"/><rect x="43.0" y="84.0" width="22" height="10.8" fill="#0f56a4"/><rect x="66.0" y="84.0" width="22" height="10.8" fill="#0f56a4"/><rect x="89.0" y="84.0" width="22" height="10.8" fill="#0f56a4"/><rect x="112.0" y="84.0" width="22" height="10.8" fill="#0f56a4"/><rect x="135.0" y="84.0" width="22" height="10.8" fill="#0f56a4"/><rect x="158.0" y="84.0" width="22" height="10.8" fill="#0f56a4"/><rect x="181.0" y="84.0" width="22" height="10.8" fill="#0f56a4"/><rect x="204.0" y="84.0" width="22" height="10.8" fill="#0f56a4"/><rect x="228.0" y="84.0" width="23" height="10.8" fill="#0f56a4"/><rect x="43.0" y="97.0" width="22" height="10.8" fill="#0f56a4"/><rect x="66.0" y="97.0" width="22" height="10.8" fill="#0f56a4"/><rect x="89.0" y="97.0" width="22" height="10.8" fill="#0f56a4"/><rect x="112.0" y="97.0" width="22" height="10.8" fill="#0f56a4"/><rect x="135.0" y="97.0" width="22" height="10.8" fill="#0f56a4"/><rect x="158.0" y="97.0" width="22" height="10.8" fill="#0f56a4"/><rect x="181.0" y="97.0" width="22" height="10.8" fill="#0f56a4"/><rect x="204.0" y="97.0" width="22" height="10.8" fill="#0f56a4"/><rect x="228.0" y="97.0" width="23" height="10.8" fill="#0f56a4"/><rect x="43.0" y="110.0" width="22" height="10.8" fill="#0f56a4"/><rect x="66.0" y="110.0" width="22" height="10.8" fill="#0f56a4"/><rect x="89.0" y="110.0" width="22" height="10.8" fill="#0f56a4"/><rect x="112.0" y="110.0" width="22" height="10.8" fill="#0f56a4"/><rect x="135.0" y="110.0" width="22" height="10.8" fill="#0f56a4"/><rect x="158.0" y="110.0" width="22" height="10.8" fill="#0f56a4"/><rect x="181.0" y="110.0" width="22" height="10.8" fill="#0f56a4"/><rect x="204.0" y="110.0" width="22" height="10.8" fill="#0f56a4"/><rect x="228.0" y="110.0" width="23" height="10.8" fill="#0f56a4"/><rect x="43.0" y="123.0" width="22" height="10.8" fill="#0f56a4"/><rect x="66.0" y="123.0" width="22" height="10.8" fill="#0f56a4"/><rect x="89.0" y="123.0" width="22" height="10.8" fill="#0f56a4"/><rect x="112.0" y="123.0" width="22" height="10.8" fill="#0f56a4"/><rect x="135.0" y="123.0" width="22" height="10.8" fill="#0f56a4"/><rect x="158.0" y="123.0" width="22" height="10.8" fill="#0f56a4"/><rect x="181.0" y="123.0" width="22" height="10.8" fill="#0f56a4"/><rect x="204.0" y="123.0" width="22" height="10.8" fill="#0f56a4"/><rect x="228.0" y="123.0" width="23" height="10.8" fill="#0f56a4"/><rect x="43.0" y="136.0" width="22" height="10.8" fill="#0f56a4"/><rect x="66.0" y="136.0" width="22" height="10.8" fill="#0f56a4"/><rect x="89.0" y="136.0" width="22" height="10.8" fill="#0f56a4"/><rect x="112.0" y="136.0" width="22" height="10.8" fill="#0f56a4"/><rect x="135.0" y="136.0" width="22" height="10.8" fill="#0f56a4"/><rect x="158.0" y="136.0" width="22" height="10.8" fill="#0f56a4"/><rect x="181.0" y="136.0" width="22" height="10.8" fill="#0f56a4"/><rect x="204.0" y="136.0" width="22" height="10.8" fill="#0f56a4"/><rect x="228.0" y="136.0" width="23" height="10.8" fill="#0f56a4"/><rect x="43.0" y="149.0" width="22" height="10.8" fill="#0f56a4"/><rect x="66.0" y="149.0" width="22" height="10.8" fill="#0f56a4"/><rect x="89.0" y="149.0" width="22" height="10.8" fill="#0f56a4"/><rect x="112.0" y="149.0" width="22" height="10.8" fill="#0f56a4"/><rect x="135.0" y="149.0" width="22" height="10.8" fill="#0f56a4"/><rect x="158.0" y="149.0" width="22" height="10.8" fill="#0f56a4"/><rect x="181.0" y="149.0" width="22" height="10.8" fill="#0f56a4"/><rect x="204.0" y="149.0" width="22" height="10.8" fill="#0f56a4"/><rect x="228.0" y="149.0" width="23" height="10.8" fill="#0f56a4"/><rect x="43.0" y="162.0" width="22" height="10.8" fill="#0f56a4"/><rect x="66.0" y="162.0" width="22" height="10.8" fill="#0f56a4"/><rect x="89.0" y="162.0" width="22" height="10.8" fill="#0f56a4"/><rect x="112.0" y="162.0" width="22" height="10.8" fill="#0f56a4"/><rect x="135.0" y="162.0" width="22" height="10.8" fill="#0f56a4"/><rect x="158.0" y="162.0" width="22" height="10.8" fill="#0f56a4"/><rect x="181.0" y="162.0" width="22" height="10.8" fill="#0f56a4"/><rect x="204.0" y="162.0" width="22" height="10.8" fill="#0f56a4"/><rect x="228.0" y="162.0" width="23" height="10.8" fill="#0f56a4"/><rect x="43.0" y="175.0" width="22" height="10.8" fill="#0f56a4"/><rect x="66.0" y="175.0" width="22" height="10.8" fill="#0f56a4"/><rect x="89.0" y="175.0" width="22" height="10.8" fill="#0f56a4"/><rect x="112.0" y="175.0" width="22" height="10.8" fill="#0f56a4"/><rect x="135.0" y="175.0" width="22" height="10.8" fill="#0f56a4"/><rect x="158.0" y="175.0" width="22" height="10.8" fill="#0f56a4"/><rect x="181.0" y="175.0" width="22" height="10.8" fill="#0f56a4"/><rect x="204.0" y="175.0" width="22" height="10.8" fill="#0f56a4"/><rect x="228.0" y="175.0" width="23" height="10.8" fill="#0f56a4"/><rect x="43.0" y="188.0" width="22" height="10.8" fill="#0f56a4"/><rect x="66.0" y="188.0" width="22" height="10.8" fill="#0f56a4"/><rect x="89.0" y="188.0" width="22" height="10.8" fill="#0f56a4"/><rect x="112.0" y="188.0" width="22" height="10.8" fill="#0f56a4"/><rect x="135.0" y="188.0" width="22" height="10.8" fill="#0f56a4"/><rect x="158.0" y="188.0" width="22" height="10.8" fill="#0f56a4"/><rect x="181.0" y="188.0" width="22" height="10.8" fill="#0f56a4"/><rect x="204.0" y="188.0" width="22" height="10.8" fill="#0f56a4"/><rect x="228.0" y="188.0" width="23" height="10.8" fill="#0f56a4"/><rect x="43.0" y="201.0" width="22" height="10.8" fill="#0f56a4"/><rect x="66.0" y="201.0" width="22" height="10.8" fill="#0f56a4"/><rect x="89.0" y="201.0" width="22" height="10.8" fill="#0f56a4"/><rect x="112.0" y="201.0" width="22" height="10.8" fill="#0f56a4"/><rect x="135.0" y="201.0" width="22" height="10.8" fill="#0f56a4"/><rect x="158.0" y="201.0" width="22" height="10.8" fill="#0f56a4"/><rect x="181.0" y="201.0" width="22" height="10.8" fill="#0f56a4"/><rect x="204.0" y="201.0" width="22" height="10.8" fill="#0f56a4"/><rect x="228.0" y="201.0" width="23" height="10.8" fill="#0f56a4"/><rect x="43.0" y="214.0" width="22" height="10.8" fill="#0f56a4"/><rect x="66.0" y="214.0" width="22" height="10.8" fill="#0f56a4"/><rect x="89.0" y="214.0" width="22" height="10.8" fill="#0f56a4"/><rect x="112.0" y="214.0" width="22" height="10.8" fill="#0f56a4"/><rect x="135.0" y="214.0" width="22" height="10.8" fill="#0f56a4"/><rect x="158.0" y="214.0" width="22" height="10.8" fill="#0f56a4"/><rect x="181.0" y="214.0" width="22" height="10.8" fill="#0f56a4"/><rect x="204.0" y="214.0" width="22" height="10.8" fill="#0f56a4"/><rect x="228.0" y="214.0" width="23" height="10.8" fill="#0f56a4"/><rect x="43.0" y="227.0" width="22" height="10.8" fill="#0f56a4"/><rect x="66.0" y="227.0" width="22" height="10.8" fill="#0f56a4"/><rect x="89.0" y="227.0" width="22" height="10.8" fill="#0f56a4"/><rect x="112.0" y="227.0" width="22" height="10.8" fill="#0f56a4"/><rect x="135.0" y="227.0" width="22" height="10.8" fill="#0f56a4"/><rect x="158.0" y="227.0" width="22" height="10.8" fill="#0f56a4"/><rect x="181.0" y="227.0" width="22" height="10.8" fill="#0f56a4"/><rect x="204.0" y="227.0" width="22" height="10.8" fill="#0f56a4"/><rect x="228.0" y="227.0" width="23" height="10.8" fill="#0f56a4"/><rect x="43.0" y="240.0" width="22" height="10.8" fill="#0f56a4"/><rect x="66.0" y="240.0" width="22" height="10.8" fill="#0f56a4"/><rect x="89.0" y="240.0" width="22" height="10.8" fill="#0f56a4"/><rect x="112.0" y="240.0" width="22" height="10.8" fill="#0f56a4"/><rect x="135.0" y="240.0" width="22" height="10.8" fill="#0f56a4"/><rect x="158.0" y="240.0" width="22" height="10.8" fill="#0f56a4"/><rect x="181.0" y="240.0" width="22" height="10.8" fill="#0f56a4"/><rect x="204.0" y="240.0" width="22" height="10.8" fill="#0f56a4"/><rect x="228.0" y="240.0" width="23" height="10.8" fill="#0f56a4"/><rect x="43.0" y="253.0" width="22" height="10.8" fill="#0f56a4"/><rect x="66.0" y="253.0" width="22" height="10.8" fill="#0f56a4"/><rect x="89.0" y="253.0" width="22" height="10.8" fill="#0f56a4"/><rect x="112.0" y="253.0" width="22" height="10.8" fill="#0f56a4"/><rect x="135.0" y="253.0" width="22" height="10.8" fill="#0f56a4"/><rect x="158.0" y="253.0" width="22" height="10.8" fill="#0f56a4"/><rect x="181.0" y="253.0" width="22" height="10.8" fill="#0f56a4"/><rect x="204.0" y="253.0" width="22" height="10.8" fill="#0f56a4"/><rect x="228.0" y="253.0" width="23" height="10.8" fill="#0f56a4"/><rect x="43.0" y="266.0" width="22" height="10.8" fill="#0f56a4"/><rect x="66.0" y="266.0" width="22" height="10.8" fill="#0f56a4"/><rect x="89.0" y="266.0" width="22" height="10.8" fill="#0f56a4"/><rect x="112.0" y="266.0" width="22" height="10.8" fill="#0f56a4"/><rect x="135.0" y="266.0" width="22" height="10.8" fill="#0f56a4"/><rect x="158.0" y="266.0" width="22" height="10.8" fill="#0f56a4"/><rect x="181.0" y="266.0" width="22" height="10.8" fill="#0f56a4"/><rect x="204.0" y="266.0" width="22" height="10.8" fill="#0f56a4"/><rect x="228.0" y="266.0" width="23" height="10.8" fill="#0f56a4"/><rect x="43.0" y="279.0" width="22" height="10.8" fill="#0f56a4"/><rect x="66.0" y="279.0" width="22" height="10.8" fill="#0f56a4"/><rect x="89.0" y="279.0" width="22" height="10.8" fill="#0f56a4"/><rect x="112.0" y="279.0" width="22" height="10.8" fill="#0f56a4"/><rect x="135.0" y="279.0" width="22" height="10.8" fill="#0f56a4"/><rect x="158.0" y="279.0" width="22" height="10.8" fill="#0f56a4"/><rect x="181.0" y="279.0" width="22" height="10.8" fill="#0f56a4"/><rect x="204.0" y="279.0" width="22" height="10.8" fill="#0f56a4"/><rect x="228.0" y="279.0" width="23" height="10.8" fill="#0f56a4"/><rect x="43.0" y="292.0" width="22" height="10.8" fill="#0f56a4"/><rect x="66.0" y="292.0" width="22" height="10.8" fill="#0f56a4"/><rect x="89.0" y="292.0" width="22" height="10.8" fill="#0f56a4"/><rect x="112.0" y="292.0" width="22" height="10.8" fill="#0f56a4"/><rect x="135.0" y="292.0" width="22" height="10.8" fill="#0f56a4"/><rect x="158.0" y="292.0" width="22" height="10.8" fill="#0f56a4"/><rect x="181.0" y="292.0" width="22" height="10.8" fill="#0f56a4"/><rect x="204.0" y="292.0" width="22" height="10.8" fill="#0f56a4"/><rect x="228.0" y="292.0" width="23" height="10.8" fill="#0f56a4"/><rect x="43.0" y="305.0" width="22" height="10.8" fill="#0f56a4"/><rect x="66.0" y="305.0" width="22" height="10.8" fill="#0f56a4"/><rect x="89.0" y="305.0" width="22" height="10.8" fill="#0f56a4"/><rect x="112.0" y="305.0" width="22" height="10.8" fill="#0f56a4"/><rect x="135.0" y="305.0" width="22" height="10.8" fill="#0f56a4"/><rect x="158.0" y="305.0" width="22" height="10.8" fill="#0f56a4"/><rect x="181.0" y="305.0" width="22" height="10.8" fill="#0f56a4"/><rect x="204.0" y="305.0" width="22" height="10.8" fill="#0f56a4"/><rect x="228.0" y="305.0" width="23" height="10.8" fill="#0f56a4"/><rect x="43.0" y="318.0" width="22" height="10.8" fill="#0f56a4"/><rect x="66.0" y="318.0" width="22" height="10.8" fill="#0f56a4"/><rect x="89.0" y="318.0" width="22" height="10.8" fill="#0f56a4"/><rect x="112.0" y="318.0" width="22" height="10.8" fill="#0f56a4"/><rect x="135.0" y="318.0" width="22" height="10.8" fill="#0f56a4"/><rect x="158.0" y="318.0" width="22" height="10.8" fill="#0f56a4"/><rect x="181.0" y="318.0" width="22" height="10.8" fill="#0f56a4"/><rect x="204.0" y="318.0" width="22" height="10.8" fill="#0f56a4"/><rect x="228.0" y="318.0" width="23" height="10.8" fill="#0f56a4"/><rect x="43.0" y="331.0" width="22" height="10.8" fill="#0f56a4"/><rect x="66.0" y="331.0" width="22" height="10.8" fill="#0f56a4"/><rect x="89.0" y="331.0" width="22" height="10.8" fill="#0f56a4"/><rect x="112.0" y="331.0" width="22" height="10.8" fill="#0f56a4"/><rect x="135.0" y="331.0" width="22" height="10.8" fill="#0f56a4"/><rect x="158.0" y="331.0" width="22" height="10.8" fill="#0f56a4"/><rect x="181.0" y="331.0" width="22" height="10.8" fill="#0f56a4"/><rect x="204.0" y="331.0" width="22" height="10.8" fill="#0f56a4"/><rect x="228.0" y="331.0" width="23" height="10.8" fill="#0f56a4"/><rect x="43.0" y="344.0" width="22" height="10.8" fill="#0f56a4"/><rect x="66.0" y="344.0" width="22" height="10.8" fill="#0f56a4"/><rect x="89.0" y="344.0" width="22" height="10.8" fill="#0f56a4"/><rect x="112.0" y="344.0" width="22" height="10.8" fill="#0f56a4"/><rect x="135.0" y="344.0" width="22" height="10.8" fill="#0f56a4"/><rect x="158.0" y="344.0" width="22" height="10.8" fill="#0f56a4"/><rect x="181.0" y="344.0" width="22" height="10.8" fill="#0f56a4"/><rect x="204.0" y="344.0" width="22" height="10.8" fill="#0f56a4"/><rect x="228.0" y="344.0" width="23" height="10.8" fill="#0f56a4"/><rect x="43.0" y="357.0" width="22" height="10.8" fill="#0f56a4"/><rect x="66.0" y="357.0" width="22" height="10.8" fill="#0f56a4"/><rect x="89.0" y="357.0" width="22" height="10.8" fill="#0f56a4"/><rect x="112.0" y="357.0" width="22" height="10.8" fill="#0f56a4"/><rect x="135.0" y="357.0" width="22" height="10.8" fill="#0f56a4"/><rect x="158.0" y="357.0" width="22" height="10.8" fill="#0f56a4"/><rect x="181.0" y="357.0" width="22" height="10.8" fill="#0f56a4"/><rect x="204.0" y="357.0" width="22" height="10.8" fill="#0f56a4"/><rect x="228.0" y="357.0" width="23" height="10.8" fill="#0f56a4"/><rect x="43.0" y="370.0" width="22" height="10.8" fill="#0f56a4"/><rect x="66.0" y="370.0" width="22" height="10.8" fill="#0f56a4"/><rect x="89.0" y="370.0" width="22" height="10.8" fill="#0f56a4"/><rect x="112.0" y="370.0" width="22" height="10.8" fill="#0f56a4"/><rect x="135.0" y="370.0" width="22" height="10.8" fill="#0f56a4"/><rect x="158.0" y="370.0" width="22" height="10.8" fill="#0f56a4"/><rect x="181.0" y="370.0" width="22" height="10.8" fill="#0f56a4"/><rect x="204.0" y="370.0" width="22" height="10.8" fill="#0f56a4"/><rect x="228.0" y="370.0" width="23" height="10.8" fill="#0f56a4"/><rect x="43.0" y="383.0" width="22" height="10.8" fill="#0f56a4"/><rect x="66.0" y="383.0" width="22" height="10.8" fill="#0f56a4"/><rect x="89.0" y="383.0" width="22" height="10.8" fill="#0f56a4"/><rect x="112.0" y="383.0" width="22" height="10.8" fill="#0f56a4"/><rect x="135.0" y="383.0" width="22" height="10.8" fill="#0f56a4"/><rect x="158.0" y="383.0" width="22" height="10.8" fill="#0f56a4"/><rect x="181.0" y="383.0" width="22" height="10.8" fill="#0f56a4"/><rect x="204.0" y="383.0" width="22" height="10.8" fill="#0f56a4"/><rect x="228.0" y="383.0" width="23" height="10.8" fill="#0f56a4"/><rect x="43.0" y="396.0" width="22" height="10.8" fill="#0f56a4"/><rect x="66.0" y="396.0" width="22" height="10.8" fill="#0f56a4"/><rect x="89.0" y="396.0" width="22" height="10.8" fill="#0f56a4"/><rect x="112.0" y="396.0" width="22" height="10.8" fill="#0f56a4"/><rect x="135.0" y="396.0" width="22" height="10.8" fill="#0f56a4"/><rect x="158.0" y="396.0" width="22" height="10.8" fill="#0f56a4"/><rect x="181.0" y="396.0" width="22" height="10.8" fill="#0f56a4"/><rect x="204.0" y="396.0" width="22" height="10.8" fill="#0f56a4"/><rect x="228.0" y="396.0" width="23" height="10.8" fill="#0f56a4"/><rect x="43.0" y="409.0" width="22" height="10.8" fill="#0f56a4"/><rect x="66.0" y="409.0" width="22" height="10.8" fill="#0f56a4"/><rect x="89.0" y="409.0" width="22" height="10.8" fill="#0f56a4"/><rect x="112.0" y="409.0" width="22" height="10.8" fill="#0f56a4"/><rect x="135.0" y="409.0" width="22" height="10.8" fill="#0f56a4"/><rect x="158.0" y="409.0" width="22" height="10.8" fill="#0f56a4"/><rect x="181.0" y="409.0" width="22" height="10.8" fill="#0f56a4"/><rect x="204.0" y="409.0" width="22" height="10.8" fill="#0f56a4"/><rect x="228.0" y="409.0" width="23" height="10.8" fill="#0f56a4"/><rect x="43.0" y="422.0" width="22" height="10.8" fill="#0f56a4"/><rect x="66.0" y="422.0" width="22" height="10.8" fill="#0f56a4"/><rect x="89.0" y="422.0" width="22" height="10.8" fill="#0f56a4"/><rect x="112.0" y="422.0" width="22" height="10.8" fill="#0f56a4"/><rect x="135.0" y="422.0" width="22" height="10.8" fill="#0f56a4"/><rect x="158.0" y="422.0" width="22" height="10.8" fill="#0f56a4"/><rect x="181.0" y="422.0" width="22" height="10.8" fill="#0f56a4"/><rect x="204.0" y="422.0" width="22" height="10.8" fill="#0f56a4"/><rect x="228.0" y="422.0" width="23" height="10.8" fill="#0f56a4"/><rect x="43.0" y="435.0" width="22" height="10.8" fill="#0f56a4"/><rect x="66.0" y="435.0" width="22" height="10.8" fill="#0f56a4"/><rect x="89.0" y="435.0" width="22" height="10.8" fill="#0f56a4"/><rect x="112.0" y="435.0" width="22" height="10.8" fill="#0f56a4"/><rect x="135.0" y="435.0" width="22" height="10.8" fill="#0f56a4"/><rect x="158.0" y="435.0" width="22" height="10.8" fill="#0f56a4"/><rect x="181.0" y="435.0" width="22" height="10.8" fill="#0f56a4"/><rect x="204.0" y="435.0" width="22" height="10.8" fill="#0f56a4"/><rect x="228.0" y="435.0" width="23" height="10.8" fill="#0f56a4"/><rect x="43.0" y="448.0" width="22" height="10.8" fill="#0f56a4"/><rect x="66.0" y="448.0" width="22" height="10.8" fill="#0f56a4"/><rect x="89.0" y="448.0" width="22" height="10.8" fill="#0f56a4"/><rect x="112.0" y="448.0" width="22" height="10.8" fill="#0f56a4"/><rect x="135.0" y="448.0" width="22" height="10.8" fill="#0f56a4"/><rect x="158.0" y="448.0" width="22" height="10.8" fill="#0f56a4"/><rect x="181.0" y="448.0" width="22" height="10.8" fill="#0f56a4"/><rect x="204.0" y="448.0" width="22" height="10.8" fill="#0f56a4"/><rect x="228.0" y="448.0" width="23" height="10.8" fill="#0f56a4"/><rect x="43.0" y="461.0" width="22" height="10.8" fill="#0f56a4"/><rect x="66.0" y="461.0" width="22" height="10.8" fill="#0f56a4"/><rect x="89.0" y="461.0" width="22" height="10.8" fill="#0f56a4"/><rect x="112.0" y="461.0" width="22" height="10.8" fill="#0f56a4"/><rect x="135.0" y="461.0" width="22" height="10.8" fill="#0f56a4"/><rect x="158.0" y="461.0" width="22" height="10.8" fill="#0f56a4"/><rect x="181.0" y="461.0" width="22" height="10.8" fill="#0f56a4"/><rect x="204.0" y="461.0" width="22" height="10.8" fill="#0f56a4"/><rect x="228.0" y="461.0" width="23" height="10.8" fill="#0f56a4"/><rect x="43.0" y="474.0" width="22" height="10.8" fill="#0f56a4"/><rect x="66.0" y="474.0" width="22" height="10.8" fill="#0f56a4"/><rect x="89.0" y="474.0" width="22" height="10.8" fill="#0f56a4"/><rect x="112.0" y="474.0" width="22" height="10.8" fill="#0f56a4"/><rect x="135.0" y="474.0" width="22" height="10.8" fill="#0f56a4"/><rect x="158.0" y="474.0" width="22" height="10.8" fill="#0f56a4"/><rect x="181.0" y="474.0" width="22" height="10.8" fill="#0f56a4"/><rect x="204.0" y="474.0" width="22" height="10.8" fill="#0f56a4"/><rect x="228.0" y="474.0" width="23" height="10.8" fill="#0f56a4"/><rect x="43.0" y="487.0" width="22" height="10.8" fill="#0f56a4"/><rect x="66.0" y="487.0" width="22" height="10.8" fill="#0f56a4"/><rect x="89.0" y="487.0" width="22" height="10.8" fill="#0f56a4"/><rect x="112.0" y="487.0" width="22" height="10.8" fill="#0f56a4"/><rect x="135.0" y="487.0" width="22" height="10.8" fill="#0f56a4"/><rect x="158.0" y="487.0" width="22" height="10.8" fill="#0f56a4"/><rect x="181.0" y="487.0" width="22" height="10.8" fill="#0f56a4"/><rect x="204.0" y="487.0" width="22" height="10.8" fill="#0f56a4"/><rect x="228.0" y="487.0" width="23" height="10.8" fill="#0f56a4"/><rect x="43.0" y="500.0" width="22" height="10.8" fill="#0f56a4"/><rect x="66.0" y="500.0" width="22" height="10.8" fill="#0f56a4"/><rect x="89.0" y="500.0" width="22" height="10.8" fill="#0f56a4"/><rect x="112.0" y="500.0" width="22" height="10.8" fill="#0f56a4"/><rect x="135.0" y="500.0" width="22" height="10.8" fill="#0f56a4"/><rect x="158.0" y="500.0" width="22" height="10.8" fill="#0f56a4"/><rect x="181.0" y="500.0" width="22" height="10.8" fill="#0f56a4"/><rect x="204.0" y="500.0" width="22" height="10.8" fill="#0f56a4"/><rect x="228.0" y="500.0" width="23" height="10.8" fill="#0f56a4"/><rect x="43.0" y="513.0" width="22" height="10.8" fill="#0f56a4"/><rect x="66.0" y="513.0" width="22" height="10.8" fill="#0f56a4"/><rect x="89.0" y="513.0" width="22" height="10.8" fill="#0f56a4"/><rect x="112.0" y="513.0" width="22" height="10.8" fill="#0f56a4"/><rect x="135.0" y="513.0" width="22" height="10.8" fill="#0f56a4"/><rect x="158.0" y="513.0" width="22" height="10.8" fill="#0f56a4"/><rect x="181.0" y="513.0" width="22" height="10.8" fill="#0f56a4"/><rect x="204.0" y="513.0" width="22" height="10.8" fill="#0f56a4"/><rect x="228.0" y="513.0" width="23" height="10.8" fill="#0f56a4"/><rect x="43.0" y="526.0" width="22" height="10.8" fill="#0f56a4"/><rect x="66.0" y="526.0" width="22" height="10.8" fill="#0f56a4"/><rect x="89.0" y="526.0" width="22" height="10.8" fill="#0f56a4"/><rect x="112.0" y="526.0" width="22" height="10.8" fill="#0f56a4"/><rect x="135.0" y="526.0" width="22" height="10.8" fill="#0f56a4"/><rect x="158.0" y="526.0" width="22" height="10.8" fill="#0f56a4"/><rect x="181.0" y="526.0" width="22" height="10.8" fill="#0f56a4"/><rect x="204.0" y="526.0" width="22" height="10.8" fill="#0f56a4"/><rect x="228.0" y="526.0" width="23" height="10.8" fill="#0f56a4"/><rect x="43.0" y="539.0" width="22" height="10.8" fill="#0f56a4"/><rect x="66.0" y="539.0" width="22" height="10.8" fill="#0f56a4"/><rect x="89.0" y="539.0" width="22" height="10.8" fill="#0f56a4"/><rect x="112.0" y="539.0" width="22" height="10.8" fill="#0f56a4"/><rect x="135.0" y="539.0" width="22" height="10.8" fill="#0f56a4"/><rect x="158.0" y="539.0" width="22" height="10.8" fill="#0f56a4"/><rect x="181.0" y="539.0" width="22" height="10.8" fill="#0f56a4"/><rect x="204.0" y="539.0" width="22" height="10.8" fill="#0f56a4"/><rect x="228.0" y="539.0" width="23" height="10.8" fill="#0f56a4"/><rect x="43.0" y="552.0" width="22" height="10.8" fill="#0f56a4"/><rect x="66.0" y="552.0" width="22" height="10.8" fill="#0f56a4"/><rect x="89.0" y="552.0" width="22" height="10.8" fill="#0f56a4"/><rect x="112.0" y="552.0" width="22" height="10.8" fill="#0f56a4"/><rect x="135.0" y="552.0" width="22" height="10.8" fill="#0f56a4"/><rect x="158.0" y="552.0" width="22" height="10.8" fill="#0f56a4"/><rect x="181.0" y="552.0" width="22" height="10.8" fill="#0f56a4"/><rect x="204.0" y="552.0" width="22" height="10.8" fill="#0f56a4"/><rect x="228.0" y="552.0" width="23" height="10.8" fill="#0f56a4"/><rect x="43.0" y="565.0" width="22" height="10.8" fill="#0f56a4"/><rect x="66.0" y="565.0" width="22" height="10.8" fill="#0f56a4"/><rect x="89.0" y="565.0" width="22" height="10.8" fill="#0f56a4"/><rect x="112.0" y="565.0" width="22" height="10.8" fill="#0f56a4"/><rect x="135.0" y="565.0" width="22" height="10.8" fill="#0f56a4"/><rect x="158.0" y="565.0" width="22" height="10.8" fill="#0f56a4"/><rect x="181.0" y="565.0" width="22" height="10.8" fill="#0f56a4"/><rect x="204.0" y="565.0" width="22" height="10.8" fill="#0f56a4"/><rect x="228.0" y="565.0" width="23" height="10.8" fill="#0f56a4"/><rect x="43.0" y="578.0" width="22" height="10.8" fill="#0f56a4"/><rect x="66.0" y="578.0" width="22" height="10.8" fill="#0f56a4"/><rect x="89.0" y="578.0" width="22" height="10.8" fill="#0f56a4"/><rect x="112.0" y="578.0" width="22" height="10.8" fill="#0f56a4"/><rect x="135.0" y="578.0" width="22" height="10.8" fill="#0f56a4"/><rect x="158.0" y="578.0" width="22" height="10.8" fill="#0f56a4"/><rect x="181.0" y="578.0" width="22" height="10.8" fill="#0f56a4"/><rect x="204.0" y="578.0" width="22" height="10.8" fill="#0f56a4"/><rect x="228.0" y="578.0" width="23" height="10.8" fill="#0f56a4"/><rect x="43.0" y="591.0" width="22" height="10.8" fill="#0f56a4"/><rect x="66.0" y="591.0" width="22" height="10.8" fill="#0f56a4"/><rect x="89.0" y="591.0" width="22" height="10.8" fill="#0f56a4"/><rect x="112.0" y="591.0" width="22" height="10.8" fill="#0f56a4"/><rect x="135.0" y="591.0" width="22" height="10.8" fill="#0f56a4"/><rect x="158.0" y="591.0" width="22" height="10.8" fill="#0f56a4"/><rect x="181.0" y="591.0" width="22" height="10.8" fill="#0f56a4"/><rect x="204.0" y="591.0" width="22" height="10.8" fill="#0f56a4"/><rect x="228.0" y="591.0" width="23" height="10.8" fill="#0f56a4"/><rect x="43.0" y="604.0" width="22" height="10.8" fill="#0f56a4"/><rect x="66.0" y="604.0" width="22" height="10.8" fill="#0f56a4"/><rect x="89.0" y="604.0" width="22" height="10.8" fill="#0f56a4"/><rect x="112.0" y="604.0" width="22" height="10.8" fill="#0f56a4"/><rect x="135.0" y="604.0" width="22" height="10.8" fill="#0f56a4"/><rect x="158.0" y="604.0" width="22" height="10.8" fill="#0f56a4"/><rect x="181.0" y="604.0" width="22" height="10.8" fill="#0f56a4"/><rect x="204.0" y="604.0" width="22" height="10.8" fill="#0f56a4"/><rect x="228.0" y="604.0" width="23" height="10.8" fill="#0f56a4"/><rect x="43.0" y="617.0" width="22" height="10.8" fill="#0f56a4"/><rect x="66.0" y="617.0" width="22" height="10.8" fill="#0f56a4"/><rect x="89.0" y="617.0" width="22" height="10.8" fill="#0f56a4"/><rect x="112.0" y="617.0" width="22" height="10.8" fill="#0f56a4"/><rect x="135.0" y="617.0" width="22" height="10.8" fill="#0f56a4"/><rect x="158.0" y="617.0" width="22" height="10.8" fill="#0f56a4"/><rect x="181.0" y="617.0" width="22" height="10.8" fill="#0f56a4"/><rect x="204.0" y="617.0" width="22" height="10.8" fill="#0f56a4"/><rect x="228.0" y="617.0" width="23" height="10.8" fill="#0f56a4"/><rect x="43.0" y="630.0" width="22" height="10.8" fill="#0f56a4"/><rect x="66.0" y="630.0" width="22" height="10.8" fill="#0f56a4"/><rect x="89.0" y="630.0" width="22" height="10.8" fill="#0f56a4"/><rect x="112.0" y="630.0" width="22" height="10.8" fill="#0f56a4"/><rect x="135.0" y="630.0" width="22" height="10.8" fill="#0f56a4"/><rect x="158.0" y="630.0" width="22" height="10.8" fill="#0f56a4"/><rect x="181.0" y="630.0" width="22" height="10.8" fill="#0f56a4"/><rect x="204.0" y="630.0" width="22" height="10.8" fill="#0f56a4"/><rect x="228.0" y="630.0" width="23" height="10.8" fill="#0f56a4"/><rect x="43.0" y="643.0" width="22" height="10.8" fill="#0f56a4"/><rect x="66.0" y="643.0" width="22" height="10.8" fill="#0f56a4"/><rect x="89.0" y="643.0" width="22" height="10.8" fill="#0f56a4"/><rect x="112.0" y="643.0" width="22" height="10.8" fill="#0f56a4"/><rect x="135.0" y="643.0" width="22" height="10.8" fill="#0f56a4"/><rect x="158.0" y="643.0" width="22" height="10.8" fill="#0f56a4"/><rect x="181.0" y="643.0" width="22" height="10.8" fill="#0f56a4"/><rect x="204.0" y="643.0" width="22" height="10.8" fill="#0f56a4"/><rect x="228.0" y="643.0" width="23" height="10.8" fill="#0f56a4"/><rect x="43.0" y="656.0" width="22" height="10.8" fill="#0f56a4"/><rect x="66.0" y="656.0" width="22" height="10.8" fill="#0f56a4"/><rect x="89.0" y="656.0" width="22" height="10.8" fill="#0f56a4"/><rect x="112.0" y="656.0" width="22" height="10.8" fill="#0f56a4"/><rect x="135.0" y="656.0" width="22" height="10.8" fill="#0f56a4"/><rect x="158.0" y="656.0" width="22" height="10.8" fill="#0f56a4"/><rect x="181.0" y="656.0" width="22" height="10.8" fill="#0f56a4"/><rect x="204.0" y="656.0" width="22" height="10.8" fill="#0f56a4"/><rect x="228.0" y="656.0" width="23" height="10.8" fill="#0f56a4"/><rect x="43.0" y="669.0" width="22" height="10.8" fill="#0f56a4"/><rect x="66.0" y="669.0" width="22" height="10.8" fill="#0f56a4"/><rect x="89.0" y="669.0" width="22" height="10.8" fill="#0f56a4"/><rect x="112.0" y="669.0" width="22" height="10.8" fill="#0f56a4"/><rect x="135.0" y="669.0" width="22" height="10.8" fill="#0f56a4"/><rect x="158.0" y="669.0" width="22" height="10.8" fill="#0f56a4"/><rect x="181.0" y="669.0" width="22" height="10.8" fill="#0f56a4"/><rect x="204.0" y="669.0" width="22" height="10.8" fill="#0f56a4"/><rect x="228.0" y="669.0" width="23" height="10.8" fill="#0f56a4"/><rect x="43.0" y="682.0" width="22" height="10.8" fill="#0f56a4"/><rect x="66.0" y="682.0" width="22" height="10.8" fill="#0f56a4"/><rect x="89.0" y="682.0" width="22" height="10.8" fill="#0f56a4"/><rect x="112.0" y="682.0" width="22" height="10.8" fill="#0f56a4"/><rect x="135.0" y="682.0" width="22" height="10.8" fill="#0f56a4"/><rect x="158.0" y="682.0" width="22" height="10.8" fill="#0f56a4"/><rect x="181.0" y="682.0" width="22" height="10.8" fill="#0f56a4"/><rect x="204.0" y="682.0" width="22" height="10.8" fill="#0f56a4"/><rect x="228.0" y="682.0" width="23" height="10.8" fill="#0f56a4"/><rect x="43.0" y="695.0" width="22" height="10.8" fill="#0f56a4"/><rect x="66.0" y="695.0" width="22" height="10.8" fill="#0f56a4"/><rect x="89.0" y="695.0" width="22" height="10.8" fill="#0f56a4"/><rect x="112.0" y="695.0" width="22" height="10.8" fill="#0f56a4"/><rect x="135.0" y="695.0" width="22" height="10.8" fill="#0f56a4"/><rect x="158.0" y="695.0" width="22" height="10.8" fill="#0f56a4"/><rect x="181.0" y="695.0" width="22" height="10.8" fill="#0f56a4"/><rect x="204.0" y="695.0" width="22" height="10.8" fill="#0f56a4"/><rect x="228.0" y="695.0" width="23" height="10.8" fill="#0f56a4"/><rect x="43.0" y="708.0" width="22" height="10.8" fill="#0f56a4"/><rect x="66.0" y="708.0" width="22" height="10.8" fill="#0f56a4"/><rect x="89.0" y="708.0" width="22" height="10.8" fill="#0f56a4"/><rect x="112.0" y="708.0" width="22" height="10.8" fill="#0f56a4"/><rect x="135.0" y="708.0" width="22" height="10.8" fill="#0f56a4"/><rect x="158.0" y="708.0" width="22" height="10.8" fill="#0f56a4"/><rect x="181.0" y="708.0" width="22" height="10.8" fill="#0f56a4"/><rect x="204.0" y="708.0" width="22" height="10.8" fill="#0f56a4"/><rect x="228.0" y="708.0" width="23" height="10.8" fill="#0f56a4"/><rect x="43.0" y="721.0" width="22" height="10.8" fill="#0f56a4"/><rect x="66.0" y="721.0" width="22" height="10.8" fill="#0f56a4"/><rect x="89.0" y="721.0" width="22" height="10.8" fill="#0f56a4"/><rect x="112.0" y="721.0" width="22" height="10.8" fill="#0f56a4"/><rect x="135.0" y="721.0" width="22" height="10.8" fill="#0f56a4"/><rect x="158.0" y="721.0" width="22" height="10.8" fill="#0f56a4"/><rect x="181.0" y="721.0" width="22" height="10.8" fill="#0f56a4"/><rect x="204.0" y="721.0" width="22" height="10.8" fill="#0f56a4"/><rect x="228.0" y="721.0" width="23" height="10.8" fill="#0f56a4"/><rect x="43.0" y="734.0" width="22" height="10.8" fill="#0f56a4"/><rect x="66.0" y="734.0" width="22" height="10.8" fill="#0f56a4"/><rect x="89.0" y="734.0" width="22" height="10.8" fill="#0f56a4"/><rect x="112.0" y="734.0" width="22" height="10.8" fill="#0f56a4"/><rect x="135.0" y="734.0" width="22" height="10.8" fill="#0f56a4"/><rect x="158.0" y="734.0" width="22" height="10.8" fill="#0f56a4"/><rect x="181.0" y="734.0" width="22" height="10.8" fill="#0f56a4"/><rect x="204.0" y="734.0" width="22" height="10.8" fill="#0f56a4"/><rect x="228.0" y="734.0" width="23" height="10.8" fill="#0f56a4"/><rect x="43.0" y="747.0" width="22" height="10.8" fill="#0f56a4"/><rect x="66.0" y="747.0" width="22" height="10.8" fill="#0f56a4"/><rect x="89.0" y="747.0" width="22" height="10.8" fill="#0f56a4"/><rect x="112.0" y="747.0" width="22" height="10.8" fill="#0f56a4"/><rect x="135.0" y="747.0" width="22" height="10.8" fill="#0f56a4"/><rect x="158.0" y="747.0" width="22" height="10.8" fill="#0f56a4"/><rect x="181.0" y="747.0" width="22" height="10.8" fill="#0f56a4"/><rect x="204.0" y="747.0" width="22" height="10.8" fill="#0f56a4"/><rect x="228.0" y="747.0" width="23" height="10.8" fill="#0f56a4"/><rect x="43.0" y="760.0" width="22" height="10.8" fill="#0f56a4"/><rect x="66.0" y="760.0" width="22" height="10.8" fill="#0f56a4"/><rect x="89.0" y="760.0" width="22" height="10.8" fill="#0f56a4"/><rect x="112.0" y="760.0" width="22" height="10.8" fill="#0f56a4"/><rect x="135.0" y="760.0" width="22" height="10.8" fill="#0f56a4"/><rect x="158.0" y="760.0" width="22" height="10.8" fill="#0f56a4"/><rect x="181.0" y="760.0" width="22" height="10.8" fill="#0f56a4"/><rect x="204.0" y="760.0" width="22" height="10.8" fill="#0f56a4"/><rect x="228.0" y="760.0" width="23" height="10.8" fill="#0f56a4"/><rect x="43.0" y="773.0" width="22" height="10.8" fill="#0f56a4"/><rect x="66.0" y="773.0" width="22" height="10.8" fill="#0f56a4"/><rect x="89.0" y="773.0" width="22" height="10.8" fill="#0f56a4"/><rect x="112.0" y="773.0" width="22" height="10.8" fill="#0f56a4"/><rect x="135.0" y="773.0" width="22" height="10.8" fill="#0f56a4"/><rect x="158.0" y="773.0" width="22" height="10.8" fill="#0f56a4"/><rect x="181.0" y="773.0" width="22" height="10.8" fill="#0f56a4"/><rect x="204.0" y="773.0" width="22" height="10.8" fill="#0f56a4"/><rect x="228.0" y="773.0" width="23" height="10.8" fill="#0f56a4"/><rect x="43.0" y="786.0" width="22" height="10.8" fill="#0f56a4"/><rect x="66.0" y="786.0" width="22" height="10.8" fill="#0f56a4"/><rect x="89.0" y="786.0" width="22" height="10.8" fill="#0f56a4"/><rect x="112.0" y="786.0" width="22" height="10.8" fill="#0f56a4"/><rect x="135.0" y="786.0" width="22" height="10.8" fill="#0f56a4"/><rect x="158.0" y="786.0" width="22" height="10.8" fill="#0f56a4"/><rect x="181.0" y="786.0" width="22" height="10.8" fill="#0f56a4"/><rect x="204.0" y="786.0" width="22" height="10.8" fill="#0f56a4"/><rect x="228.0" y="786.0" width="23" height="10.8" fill="#0f56a4"/><rect x="43.0" y="799.0" width="22" height="10.8" fill="#0f56a4"/><rect x="66.0" y="799.0" width="22" height="10.8" fill="#0f56a4"/><rect x="89.0" y="799.0" width="22" height="10.8" fill="#0f56a4"/><rect x="112.0" y="799.0" width="22" height="10.8" fill="#0f56a4"/><rect x="135.0" y="799.0" width="22" height="10.8" fill="#0f56a4"/><rect x="158.0" y="799.0" width="22" height="10.8" fill="#0f56a4"/><rect x="181.0" y="799.0" width="22" height="10.8" fill="#0f56a4"/><rect x="204.0" y="799.0" width="22" height="10.8" fill="#0f56a4"/><rect x="228.0" y="799.0" width="23" height="10.8" fill="#0f56a4"/><rect x="43.0" y="812.0" width="22" height="10.8" fill="#0f56a4"/><rect x="66.0" y="812.0" width="22" height="10.8" fill="#0f56a4"/><rect x="89.0" y="812.0" width="22" height="10.8" fill="#0f56a4"/><rect x="112.0" y="812.0" width="22" height="10.8" fill="#0f56a4"/><rect x="135.0" y="812.0" width="22" height="10.8" fill="#0f56a4"/><rect x="158.0" y="812.0" width="22" height="10.8" fill="#0f56a4"/><rect x="181.0" y="812.0" width="22" height="10.8" fill="#0f56a4"/><rect x="204.0" y="812.0" width="22" height="10.8" fill="#0f56a4"/><rect x="228.0" y="812.0" width="23" height="10.8" fill="#0f56a4"/><rect x="43.0" y="825.0" width="22" height="10.8" fill="#0f56a4"/><rect x="66.0" y="825.0" width="22" height="10.8" fill="#0f56a4"/><rect x="89.0" y="825.0" width="22" height="10.8" fill="#0f56a4"/><rect x="112.0" y="825.0" width="22" height="10.8" fill="#0f56a4"/><rect x="135.0" y="825.0" width="22" height="10.8" fill="#0f56a4"/><rect x="158.0" y="825.0" width="22" height="10.8" fill="#0f56a4"/><rect x="181.0" y="825.0" width="22" height="10.8" fill="#0f56a4"/><rect x="204.0" y="825.0" width="22" height="10.8" fill="#0f56a4"/><rect x="228.0" y="825.0" width="23" height="10.8" fill="#0f56a4"/><rect x="43.0" y="838.0" width="22" height="10.8" fill="#0f56a4"/><rect x="66.0" y="838.0" width="22" height="10.8" fill="#0f56a4"/><rect x="89.0" y="838.0" width="22" height="10.8" fill="#0f56a4"/><rect x="112.0" y="838.0" width="22" height="10.8" fill="#0f56a4"/><rect x="135.0" y="838.0" width="22" height="10.8" fill="#0f56a4"/><rect x="158.0" y="838.0" width="22" height="10.8" fill="#0f56a4"/><rect x="181.0" y="838.0" width="22" height="10.8" fill="#0f56a4"/><rect x="204.0" y="838.0" width="22" height="10.8" fill="#0f56a4"/><rect x="228.0" y="838.0" width="23" height="10.8" fill="#0f56a4"/><rect x="43.0" y="851.0" width="22" height="10.8" fill="#0f56a4"/><rect x="66.0" y="851.0" width="22" height="10.8" fill="#0f56a4"/><rect x="89.0" y="851.0" width="22" height="10.8" fill="#0f56a4"/><rect x="112.0" y="851.0" width="22" height="10.8" fill="#0f56a4"/><rect x="135.0" y="851.0" width="22" height="10.8" fill="#0f56a4"/><rect x="158.0" y="851.0" width="22" height="10.8" fill="#0f56a4"/><rect x="181.0" y="851.0" width="22" height="10.8" fill="#0f56a4"/><rect x="204.0" y="851.0" width="22" height="10.8" fill="#0f56a4"/><rect x="228.0" y="851.0" width="23" height="10.8" fill="#0f56a4"/><rect x="43.0" y="864.0" width="22" height="10.8" fill="#0f56a4"/><rect x="66.0" y="864.0" width="22" height="10.8" fill="#0f56a4"/><rect x="89.0" y="864.0" width="22" height="10.8" fill="#0f56a4"/><rect x="112.0" y="864.0" width="22" height="10.8" fill="#0f56a4"/><rect x="135.0" y="864.0" width="22" height="10.8" fill="#0f56a4"/><rect x="158.0" y="864.0" width="22" height="10.8" fill="#0f56a4"/><rect x="181.0" y="864.0" width="22" height="10.8" fill="#0f56a4"/><rect x="204.0" y="864.0" width="22" height="10.8" fill="#0f56a4"/><rect x="228.0" y="864.0" width="23" height="10.8" fill="#0f56a4"/><rect x="43.0" y="877.0" width="22" height="10.8" fill="#0f56a4"/><rect x="66.0" y="877.0" width="22" height="10.8" fill="#0f56a4"/><rect x="89.0" y="877.0" width="22" height="10.8" fill="#0f56a4"/><rect x="112.0" y="877.0" width="22" height="10.8" fill="#0f56a4"/><rect x="135.0" y="877.0" width="22" height="10.8" fill="#0f56a4"/><rect x="158.0" y="877.0" width="22" height="10.8" fill="#0f56a4"/><rect x="181.0" y="877.0" width="22" height="10.8" fill="#0f56a4"/><rect x="204.0" y="877.0" width="22" height="10.8" fill="#0f56a4"/><rect x="228.0" y="877.0" width="23" height="10.8" fill="#0f56a4"/><rect x="43.0" y="890.0" width="22" height="10.8" fill="#0f56a4"/><rect x="66.0" y="890.0" width="22" height="10.8" fill="#0f56a4"/><rect x="89.0" y="890.0" width="22" height="10.8" fill="#0f56a4"/><rect x="112.0" y="890.0" width="22" height="10.8" fill="#0f56a4"/><rect x="135.0" y="890.0" width="22" height="10.8" fill="#0f56a4"/><rect x="158.0" y="890.0" width="22" height="10.8" fill="#0f56a4"/><rect x="181.0" y="890.0" width="22" height="10.8" fill="#0f56a4"/><rect x="204.0" y="890.0" width="22" height="10.8" fill="#0f56a4"/><rect x="228.0" y="890.0" width="23" height="10.8" fill="#0f56a4"/><rect x="43.0" y="903.0" width="22" height="10.8" fill="#0f56a4"/><rect x="66.0" y="903.0" width="22" height="10.8" fill="#0f56a4"/><rect x="89.0" y="903.0" width="22" height="10.8" fill="#0f56a4"/><rect x="112.0" y="903.0" width="22" height="10.8" fill="#0f56a4"/><rect x="135.0" y="903.0" width="22" height="10.8" fill="#0f56a4"/><rect x="158.0" y="903.0" width="22" height="10.8" fill="#0f56a4"/><rect x="181.0" y="903.0" width="22" height="10.8" fill="#0f56a4"/><rect x="204.0" y="903.0" width="22" height="10.8" fill="#0f56a4"/><rect x="228.0" y="903.0" width="23" height="10.8" fill="#0f56a4"/><rect x="43.0" y="916.0" width="22" height="10.8" fill="#0f56a4"/><rect x="66.0" y="916.0" width="22" height="10.8" fill="#0f56a4"/><rect x="89.0" y="916.0" width="22" height="10.8" fill="#0f56a4"/><rect x="112.0" y="916.0" width="22" height="10.8" fill="#0f56a4"/><rect x="135.0" y="916.0" width="22" height="10.8" fill="#0f56a4"/><rect x="158.0" y="916.0" width="22" height="10.8" fill="#0f56a4"/><rect x="181.0" y="916.0" width="22" height="10.8" fill="#0f56a4"/><rect x="204.0" y="916.0" width="22" height="10.8" fill="#0f56a4"/><rect x="228.0" y="916.0" width="23" height="10.8" fill="#0f56a4"/><rect x="43.0" y="929.0" width="22" height="10.8" fill="#0f56a4"/><rect x="66.0" y="929.0" width="22" height="10.8" fill="#0f56a4"/><rect x="89.0" y="929.0" width="22" height="10.8" fill="#0f56a4"/><rect x="112.0" y="929.0" width="22" height="10.8" fill="#0f56a4"/><rect x="135.0" y="929.0" width="22" height="10.8" fill="#0f56a4"/><rect x="158.0" y="929.0" width="22" height="10.8" fill="#0f56a4"/><rect x="181.0" y="929.0" width="22" height="10.8" fill="#0f56a4"/><rect x="204.0" y="929.0" width="22" height="10.8" fill="#0f56a4"/><rect x="228.0" y="929.0" width="23" height="10.8" fill="#0f56a4"/><rect x="43.0" y="942.0" width="22" height="10.8" fill="#0f56a4"/><rect x="66.0" y="942.0" width="22" height="10.8" fill="#0f56a4"/><rect x="89.0" y="942.0" width="22" height="10.8" fill="#0f56a4"/><rect x="112.0" y="942.0" width="22" height="10.8" fill="#0f56a4"/><rect x="135.0" y="942.0" width="22" height="10.8" fill="#0f56a4"/><rect x="158.0" y="942.0" width="22" height="10.8" fill="#0f56a4"/><rect x="181.0" y="942.0" width="22" height="10.8" fill="#0f56a4"/><rect x="204.0" y="942.0" width="22" height="10.8" fill="#0f56a4"/><rect x="228.0" y="942.0" width="23" height="10.8" fill="#0f56a4"/><rect x="43.0" y="955.0" width="22" height="10.8" fill="#0f56a4"/><rect x="66.0" y="955.0" width="22" height="10.8" fill="#0f56a4"/><rect x="89.0" y="955.0" width="22" height="10.8" fill="#0f56a4"/><rect x="112.0" y="955.0" width="22" height="10.8" fill="#0f56a4"/><rect x="135.0" y="955.0" width="22" height="10.8" fill="#0f56a4"/><rect x="158.0" y="955.0" width="22" height="10.8" fill="#0f56a4"/><rect x="181.0" y="955.0" width="22" height="10.8" fill="#0f56a4"/><rect x="204.0" y="955.0" width="22" height="10.8" fill="#0f56a4"/><rect x="228.0" y="955.0" width="23" height="10.8" fill="#0f56a4"/><rect x="43.0" y="968.0" width="22" height="10.8" fill="#0f56a4"/><rect x="66.0" y="968.0" width="22" height="10.8" fill="#0f56a4"/><rect x="89.0" y="968.0" width="22" height="10.8" fill="#0f56a4"/><rect x="112.0" y="968.0" width="22" height="10.8" fill="#0f56a4"/><rect x="135.0" y="968.0" width="22" height="10.8" fill="#0f56a4"/><rect x="158.0" y="968.0" width="22" height="10.8" fill="#0f56a4"/><rect x="181.0" y="968.0" width="22" height="10.8" fill="#0f56a4"/><rect x="204.0" y="968.0" width="22" height="10.8" fill="#0f56a4"/><rect x="228.0" y="968.0" width="23" height="10.8" fill="#0f56a4"/><rect x="43.0" y="981.0" width="22" height="10.8" fill="#0f56a4"/><rect x="66.0" y="981.0" width="22" height="10.8" fill="#0f56a4"/><rect x="89.0" y="981.0" width="22" height="10.8" fill="#0f56a4"/><rect x="112.0" y="981.0" width="22" height="10.8" fill="#0f56a4"/><rect x="135.0" y="981.0" width="22" height="10.8" fill="#0f56a4"/><rect x="158.0" y="981.0" width="22" height="10.8" fill="#0f56a4"/><rect x="181.0" y="981.0" width="22" height="10.8" fill="#0f56a4"/><rect x="204.0" y="981.0" width="22" height="10.8" fill="#0f56a4"/><rect x="228.0" y="981.0" width="23" height="10.8" fill="#0f56a4"/><rect x="43.0" y="994.0" width="22" height="10.8" fill="#0f56a4"/><rect x="66.0" y="994.0" width="22" height="10.8" fill="#0f56a4"/><rect x="89.0" y="994.0" width="22" height="10.8" fill="#0f56a4"/><rect x="112.0" y="994.0" width="22" height="10.8" fill="#0f56a4"/><rect x="135.0" y="994.0" width="22" height="10.8" fill="#0f56a4"/><rect x="158.0" y="994.0" width="22" height="10.8" fill="#0f56a4"/><rect x="181.0" y="994.0" width="22" height="10.8" fill="#0f56a4"/><rect x="204.0" y="994.0" width="22" height="10.8" fill="#0f56a4"/><rect x="228.0" y="994.0" width="23" height="10.8" fill="#0f56a4"/><rect x="43.0" y="1007.0" width="22" height="10.8" fill="#0f56a4"/><rect x="66.0" y="1007.0" width="22" height="10.8" fill="#0f56a4"/><rect x="89.0" y="1007.0" width="22" height="10.8" fill="#0f56a4"/><rect x="112.0" y="1007.0" width="22" height="10.8" fill="#0f56a4"/><rect x="135.0" y="1007.0" width="22" height="10.8" fill="#0f56a4"/><rect x="158.0" y="1007.0" width="22" height="10.8" fill="#0f56a4"/><rect x="181.0" y="1007.0" width="22" height="10.8" fill="#0f56a4"/><rect x="204.0" y="1007.0" width="22" height="10.8" fill="#0f56a4"/><rect x="228.0" y="1007.0" width="23" height="10.8" fill="#0f56a4"/><rect x="43.0" y="1020.0" width="22" height="10.8" fill="#0f56a4"/><rect x="66.0" y="1020.0" width="22" height="10.8" fill="#0f56a4"/><rect x="89.0" y="1020.0" width="22" height="10.8" fill="#0f56a4"/><rect x="112.0" y="1020.0" width="22" height="10.8" fill="#0f56a4"/><rect x="135.0" y="1020.0" width="22" height="10.8" fill="#0f56a4"/><rect x="158.0" y="1020.0" width="22" height="10.8" fill="#0f56a4"/><rect x="181.0" y="1020.0" width="22" height="10.8" fill="#0f56a4"/><rect x="204.0" y="1020.0" width="22" height="10.8" fill="#0f56a4"/><rect x="228.0" y="1020.0" width="23" height="10.8" fill="#0f56a4"/><rect x="43.0" y="1033.0" width="22" height="10.8" fill="#0f56a4"/><rect x="66.0" y="1033.0" width="22" height="10.8" fill="#0f56a4"/><rect x="89.0" y="1033.0" width="22" height="10.8" fill="#0f56a4"/><rect x="112.0" y="1033.0" width="22" height="10.8" fill="#0f56a4"/><rect x="135.0" y="1033.0" width="22" height="10.8" fill="#0f56a4"/><rect x="158.0" y="1033.0" width="22" height="10.8" fill="#0f56a4"/><rect x="181.0" y="1033.0" width="22" height="10.8" fill="#0f56a4"/><rect x="204.0" y="1033.0" width="22" height="10.8" fill="#0f56a4"/><rect x="228.0" y="1033.0" width="23" height="10.8" fill="#0f56a4"/><rect x="43.0" y="1046.0" width="22" height="10.8" fill="#0f56a4"/><rect x="66.0" y="1046.0" width="22" height="10.8" fill="#0f56a4"/><rect x="89.0" y="1046.0" width="22" height="10.8" fill="#0f56a4"/><rect x="112.0" y="1046.0" width="22" height="10.8" fill="#0f56a4"/><rect x="135.0" y="1046.0" width="22" height="10.8" fill="#0f56a4"/><rect x="158.0" y="1046.0" width="22" height="10.8" fill="#0f56a4"/><rect x="181.0" y="1046.0" width="22" height="10.8" fill="#0f56a4"/><rect x="204.0" y="1046.0" width="22" height="10.8" fill="#0f56a4"/><rect x="228.0" y="1046.0" width="23" height="10.8" fill="#0f56a4"/><rect x="43.0" y="1059.0" width="22" height="10.8" fill="#0f56a4"/><rect x="66.0" y="1059.0" width="22" height="10.8" fill="#0f56a4"/><rect x="89.0" y="1059.0" width="22" height="10.8" fill="#0f56a4"/><rect x="112.0" y="1059.0" width="22" height="10.8" fill="#0f56a4"/><rect x="135.0" y="1059.0" width="22" height="10.8" fill="#0f56a4"/><rect x="158.0" y="1059.0" width="22" height="10.8" fill="#0f56a4"/><rect x="181.0" y="1059.0" width="22" height="10.8" fill="#0f56a4"/><rect x="204.0" y="1059.0" width="22" height="10.8" fill="#0f56a4"/><rect x="228.0" y="1059.0" width="23" height="10.8" fill="#0f56a4"/><rect x="43.0" y="1072.0" width="22" height="10.8" fill="#0f56a4"/><rect x="66.0" y="1072.0" width="22" height="10.8" fill="#0f56a4"/><rect x="89.0" y="1072.0" width="22" height="10.8" fill="#0f56a4"/><rect x="112.0" y="1072.0" width="22" height="10.8" fill="#0f56a4"/><rect x="135.0" y="1072.0" width="22" height="10.8" fill="#0f56a4"/><rect x="158.0" y="1072.0" width="22" height="10.8" fill="#0f56a4"/><rect x="181.0" y="1072.0" width="22" height="10.8" fill="#0f56a4"/><rect x="204.0" y="1072.0" width="22" height="10.8" fill="#0f56a4"/><rect x="228.0" y="1072.0" width="23" height="10.8" fill="#0f56a4"/><rect x="43.0" y="1085.0" width="22" height="10.8" fill="#0f56a4"/><rect x="66.0" y="1085.0" width="22" height="10.8" fill="#0f56a4"/><rect x="89.0" y="1085.0" width="22" height="10.8" fill="#0f56a4"/><rect x="112.0" y="1085.0" width="22" height="10.8" fill="#0f56a4"/><rect x="135.0" y="1085.0" width="22" height="10.8" fill="#0f56a4"/><rect x="158.0" y="1085.0" width="22" height="10.8" fill="#0f56a4"/><rect x="181.0" y="1085.0" width="22" height="10.8" fill="#0f56a4"/><rect x="204.0" y="1085.0" width="22" height="10.8" fill="#0f56a4"/><rect x="228.0" y="1085.0" width="23" height="10.8" fill="#0f56a4"/><rect x="43.0" y="1098.0" width="22" height="10.8" fill="#0f56a4"/><rect x="66.0" y="1098.0" width="22" height="10.8" fill="#0f56a4"/><rect x="89.0" y="1098.0" width="22" height="10.8" fill="#0f56a4"/><rect x="112.0" y="1098.0" width="22" height="10.8" fill="#0f56a4"/><rect x="135.0" y="1098.0" width="22" height="10.8" fill="#0f56a4"/><rect x="158.0" y="1098.0" width="22" height="10.8" fill="#0f56a4"/><rect x="181.0" y="1098.0" width="22" height="10.8" fill="#0f56a4"/><rect x="204.0" y="1098.0" width="22" height="10.8" fill="#0f56a4"/><rect x="228.0" y="1098.0" width="23" height="10.8" fill="#0f56a4"/><rect x="43.0" y="1111.0" width="22" height="10.8" fill="#0f56a4"/><rect x="66.0" y="1111.0" width="22" height="10.8" fill="#0f56a4"/><rect x="89.0" y="1111.0" width="22" height="10.8" fill="#0f56a4"/><rect x="112.0" y="1111.0" width="22" height="10.8" fill="#0f56a4"/><rect x="135.0" y="1111.0" width="22" height="10.8" fill="#0f56a4"/><rect x="158.0" y="1111.0" width="22" height="10.8" fill="#0f56a4"/><rect x="181.0" y="1111.0" width="22" height="10.8" fill="#0f56a4"/><rect x="204.0" y="1111.0" width="22" height="10.8" fill="#0f56a4"/><rect x="228.0" y="1111.0" width="23" height="10.8" fill="#0f56a4"/><rect x="43.0" y="1124.0" width="22" height="10.8" fill="#0f56a4"/><rect x="66.0" y="1124.0" width="22" height="10.8" fill="#0f56a4"/><rect x="89.0" y="1124.0" width="22" height="10.8" fill="#0f56a4"/><rect x="112.0" y="1124.0" width="22" height="10.8" fill="#0f56a4"/><rect x="135.0" y="1124.0" width="22" height="10.8" fill="#0f56a4"/><rect x="158.0" y="1124.0" width="22" height="10.8" fill="#0f56a4"/><rect x="181.0" y="1124.0" width="22" height="10.8" fill="#0f56a4"/><rect x="204.0" y="1124.0" width="22" height="10.8" fill="#0f56a4"/><rect x="228.0" y="1124.0" width="23" height="10.8" fill="#0f56a4"/><rect x="43.0" y="1137.0" width="22" height="10.8" fill="#0f56a4"/><rect x="66.0" y="1137.0" width="22" height="10.8" fill="#0f56a4"/><rect x="89.0" y="1137.0" width="22" height="10.8" fill="#0f56a4"/><rect x="112.0" y="1137.0" width="22" height="10.8" fill="#0f56a4"/><rect x="135.0" y="1137.0" width="22" height="10.8" fill="#0f56a4"/><rect x="158.0" y="1137.0" width="22" height="10.8" fill="#0f56a4"/><rect x="181.0" y="1137.0" width="22" height="10.8" fill="#0f56a4"/><rect x="204.0" y="1137.0" width="22" height="10.8" fill="#0f56a4"/><rect x="228.0" y="1137.0" width="23" height="10.8" fill="#0f56a4"/><rect x="43.0" y="1150.0" width="22" height="10.8" fill="#0f56a4"/><rect x="66.0" y="1150.0" width="22" height="10.8" fill="#0f56a4"/><rect x="89.0" y="1150.0" width="22" height="10.8" fill="#0f56a4"/><rect x="112.0" y="1150.0" width="22" height="10.8" fill="#0f56a4"/><rect x="135.0" y="1150.0" width="22" height="10.8" fill="#0f56a4"/><rect x="158.0" y="1150.0" width="22" height="10.8" fill="#0f56a4"/><rect x="181.0" y="1150.0" width="22" height="10.8" fill="#0f56a4"/><rect x="204.0" y="1150.0" width="22" height="10.8" fill="#0f56a4"/><rect x="228.0" y="1150.0" width="23" height="10.8" fill="#0f56a4"/><rect x="43.0" y="1163.0" width="22" height="10.8" fill="#0f56a4"/><rect x="66.0" y="1163.0" width="22" height="10.8" fill="#0f56a4"/><rect x="89.0" y="1163.0" width="22" height="10.8" fill="#0f56a4"/><rect x="112.0" y="1163.0" width="22" height="10.8" fill="#0f56a4"/><rect x="135.0" y="1163.0" width="22" height="10.8" fill="#0f56a4"/><rect x="158.0" y="1163.0" width="22" height="10.8" fill="#0f56a4"/><rect x="181.0" y="1163.0" width="22" height="10.8" fill="#0f56a4"/><rect x="204.0" y="1163.0" width="22" height="10.8" fill="#0f56a4"/><rect x="228.0" y="1163.0" width="23" height="10.8" fill="#0f56a4"/><rect x="43.0" y="1176.0" width="22" height="10.8" fill="#0f56a4"/><rect x="66.0" y="1176.0" width="22" height="10.8" fill="#0f56a4"/><rect x="89.0" y="1176.0" width="22" height="10.8" fill="#0f56a4"/><rect x="112.0" y="1176.0" width="22" height="10.8" fill="#0f56a4"/><rect x="135.0" y="1176.0" width="22" height="10.8" fill="#0f56a4"/><rect x="158.0" y="1176.0" width="22" height="10.8" fill="#0f56a4"/><rect x="181.0" y="1176.0" width="22" height="10.8" fill="#0f56a4"/><rect x="204.0" y="1176.0" width="22" height="10.8" fill="#0f56a4"/><rect x="228.0" y="1176.0" width="23" height="10.8" fill="#0f56a4"/><rect x="43.0" y="1189.0" width="22" height="10.8" fill="#0f56a4"/><rect x="66.0" y="1189.0" width="22" height="10.8" fill="#0f56a4"/><rect x="89.0" y="1189.0" width="22" height="10.8" fill="#0f56a4"/><rect x="112.0" y="1189.0" width="22" height="10.8" fill="#0f56a4"/><rect x="135.0" y="1189.0" width="22" height="10.8" fill="#0f56a4"/><rect x="158.0" y="1189.0" width="22" height="10.8" fill="#0f56a4"/><rect x="181.0" y="1189.0" width="22" height="10.8" fill="#0f56a4"/><rect x="204.0" y="1189.0" width="22" height="10.8" fill="#0f56a4"/><rect x="228.0" y="1189.0" width="23" height="10.8" fill="#0f56a4"/><rect x="43.0" y="1202.0" width="22" height="10.8" fill="#0f56a4"/><rect x="66.0" y="1202.0" width="22" height="10.8" fill="#0f56a4"/><rect x="89.0" y="1202.0" width="22" height="10.8" fill="#0f56a4"/><rect x="112.0" y="1202.0" width="22" height="10.8" fill="#0f56a4"/><rect x="135.0" y="1202.0" width="22" height="10.8" fill="#0f56a4"/><rect x="158.0" y="1202.0" width="22" height="10.8" fill="#0f56a4"/><rect x="181.0" y="1202.0" width="22" height="10.8" fill="#0f56a4"/><rect x="204.0" y="1202.0" width="22" height="10.8" fill="#0f56a4"/><rect x="228.0" y="1202.0" width="23" height="10.8" fill="#0f56a4"/><rect x="43.0" y="1215.0" width="22" height="10.8" fill="#0f56a4"/><rect x="66.0" y="1215.0" width="22" height="10.8" fill="#0f56a4"/><rect x="89.0" y="1215.0" width="22" height="10.8" fill="#0f56a4"/><rect x="112.0" y="1215.0" width="22" height="10.8" fill="#0f56a4"/><rect x="135.0" y="1215.0" width="22" height="10.8" fill="#0f56a4"/><rect x="158.0" y="1215.0" width="22" height="10.8" fill="#0f56a4"/><rect x="181.0" y="1215.0" width="22" height="10.8" fill="#0f56a4"/><rect x="204.0" y="1215.0" width="22" height="10.8" fill="#0f56a4"/><rect x="228.0" y="1215.0" width="23" height="10.8" fill="#0f56a4"/><rect x="43.0" y="1228.0" width="22" height="10.8" fill="#0f56a4"/><rect x="66.0" y="1228.0" width="22" height="10.8" fill="#0f56a4"/><rect x="89.0" y="1228.0" width="22" height="10.8" fill="#0f56a4"/><rect x="112.0" y="1228.0" width="22" height="10.8" fill="#0f56a4"/><rect x="135.0" y="1228.0" width="22" height="10.8" fill="#0f56a4"/><rect x="158.0" y="1228.0" width="22" height="10.8" fill="#0f56a4"/><rect x="181.0" y="1228.0" width="22" height="10.8" fill="#0f56a4"/><rect x="204.0" y="1228.0" width="22" height="10.8" fill="#0f56a4"/><rect x="228.0" y="1228.0" width="23" height="10.8" fill="#0f56a4"/><rect x="43.0" y="1241.0" width="22" height="10.8" fill="#0f56a4"/><rect x="66.0" y="1241.0" width="22" height="10.8" fill="#0f56a4"/><rect x="89.0" y="1241.0" width="22" height="10.8" fill="#0f56a4"/><rect x="112.0" y="1241.0" width="22" height="10.8" fill="#0f56a4"/><rect x="135.0" y="1241.0" width="22" height="10.8" fill="#0f56a4"/><rect x="158.0" y="1241.0" width="22" height="10.8" fill="#0f56a4"/><rect x="181.0" y="1241.0" width="22" height="10.8" fill="#0f56a4"/><rect x="204.0" y="1241.0" width="22" height="10.8" fill="#0f56a4"/><rect x="228.0" y="1241.0" width="23" height="10.8" fill="#0f56a4"/><rect x="43.0" y="1254.0" width="22" height="10.8" fill="#0f56a4"/><rect x="66.0" y="1254.0" width="22" height="10.8" fill="#0f56a4"/><rect x="89.0" y="1254.0" width="22" height="10.8" fill="#0f56a4"/><rect x="112.0" y="1254.0" width="22" height="10.8" fill="#0f56a4"/><rect x="135.0" y="1254.0" width="22" height="10.8" fill="#0f56a4"/><rect x="158.0" y="1254.0" width="22" height="10.8" fill="#0f56a4"/><rect x="181.0" y="1254.0" width="22" height="10.8" fill="#0f56a4"/><rect x="204.0" y="1254.0" width="22" height="10.8" fill="#0f56a4"/><rect x="228.0" y="1254.0" width="23" height="10.8" fill="#0f56a4"/><rect x="43.0" y="1267.0" width="22" height="10.8" fill="#0f56a4"/><rect x="66.0" y="1267.0" width="22" height="10.8" fill="#0f56a4"/><rect x="89.0" y="1267.0" width="22" height="10.8" fill="#0f56a4"/><rect x="112.0" y="1267.0" width="22" height="10.8" fill="#0f56a4"/><rect x="135.0" y="1267.0" width="22" height="10.8" fill="#0f56a4"/><rect x="158.0" y="1267.0" width="22" height="10.8" fill="#0f56a4"/><rect x="181.0" y="1267.0" width="22" height="10.8" fill="#0f56a4"/><rect x="204.0" y="1267.0" width="22" height="10.8" fill="#0f56a4"/><rect x="228.0" y="1267.0" width="23" height="10.8" fill="#0f56a4"/><rect x="43.0" y="1280.0" width="22" height="10.8" fill="#0f56a4"/><rect x="66.0" y="1280.0" width="22" height="10.8" fill="#0f56a4"/><rect x="89.0" y="1280.0" width="22" height="10.8" fill="#0f56a4"/><rect x="112.0" y="1280.0" width="22" height="10.8" fill="#0f56a4"/><rect x="135.0" y="1280.0" width="22" height="10.8" fill="#0f56a4"/><rect x="158.0" y="1280.0" width="22" height="10.8" fill="#0f56a4"/><rect x="181.0" y="1280.0" width="22" height="10.8" fill="#0f56a4"/><rect x="204.0" y="1280.0" width="22" height="10.8" fill="#0f56a4"/><rect x="228.0" y="1280.0" width="23" height="10.8" fill="#0f56a4"/><rect x="43.0" y="1293.0" width="22" height="10.8" fill="#0f56a4"/><rect x="66.0" y="1293.0" width="22" height="10.8" fill="#0f56a4"/><rect x="89.0" y="1293.0" width="22" height="10.8" fill="#0f56a4"/><rect x="112.0" y="1293.0" width="22" height="10.8" fill="#0f56a4"/><rect x="135.0" y="1293.0" width="22" height="10.8" fill="#0f56a4"/><rect x="158.0" y="1293.0" width="22" height="10.8" fill="#0f56a4"/><rect x="181.0" y="1293.0" width="22" height="10.8" fill="#0f56a4"/><rect x="204.0" y="1293.0" width="22" height="10.8" fill="#0f56a4"/><rect x="228.0" y="1293.0" width="23" height="10.8" fill="#0f56a4"/><rect x="43.0" y="1306.0" width="22" height="10.8" fill="#0f56a4"/><rect x="66.0" y="1306.0" width="22" height="10.8" fill="#0f56a4"/><rect x="89.0" y="1306.0" width="22" height="10.8" fill="#0f56a4"/><rect x="112.0" y="1306.0" width="22" height="10.8" fill="#0f56a4"/><rect x="135.0" y="1306.0" width="22" height="10.8" fill="#0f56a4"/><rect x="158.0" y="1306.0" width="22" height="10.8" fill="#0f56a4"/><rect x="181.0" y="1306.0" width="22" height="10.8" fill="#0f56a4"/><rect x="204.0" y="1306.0" width="22" height="10.8" fill="#0f56a4"/><rect x="228.0" y="1306.0" width="23" height="10.8" fill="#0f56a4"/></svg>
<div class="pm" style="left:42.5px;top:18.8px"><b>#0</b><b>#1</b><b>#2</b><b>#3</b><b>#4</b><b>#5</b><b>#6</b><b>#7</b><b style="width:24px">#8</b></div>
<div class="pm" style="left:42.5px;top:31.8px"><b>#9</b><b>#10</b><b>#11</b><b>#12</b><b>#13</b><b>#14</b><b>#15</b><b>#16</b><b style="width:24px">#17</b></div>
<div class="pm" style="left:42.5px;top:44.8px"><b>#0</b><b>#1</b><b>#2</b><b>#3</b><b>#4</b><b>#5</b><b>#6</b><b>#7</b><b style="width:24px">#8</b></div>
<div class="pm" style="left:42.5px;top:57.8px"><b>#9</b><b>#10</b><b>#11</b><b>#12</b><b>#13</b><b>#14</b><b>#15</b><b>#16</b><b style="width:24px">#17</b></div>
<div class="pm" style="left:42.5px;top:70.8px"><b>#18</b><b>#19</b><b>#20</b><b>#21</b><b>#22</b><b>#23</b><b>#24</b><b>#25</b><b style="width:24px">#26</b></div>
<div class="pm" style="left:42.5px;top:83.8px"><b>#27</b><b>#28</b><b>#29</b><b>#30</b><b>#31</b><b>#32</b><b>#33</b><b>#34</b><b style="width:24px">#35</b></div>
<div class="pm" style="left:42.5px;top:96.8px"><b>#18</b><b>#19</b><b>#20</b><b>#21</b><b>#22</b><b>#23</b><b>#24</b><b>#25</b><b style="width:24px">#26</b></div>
<div class="pm" style="left:42.5px;top:109.8px"><b>#27</b><b>#28</b><b>#29</b><b>#30</b><b>#31</b><b>#32</b><b>#33</b><b>#34</b><b style="width:24px">#35</b></div>
<div class="pm" style="left:42.5px;top:122.8px"><b>#36</b><b>#37</b><b>#38</b><b>#39</b><b>#40</b><b>#41</b><b>#42</b><b>#43</b><b style="width:24px">#44</b></div>
<div class="pm" style="left:42.5px;top:135.8px"><b>#45</b><b>#46</b><b>#47</b><b>#48</b><b>#49</b><b>#50</b><b>#51</b><b>#52</b><b style="width:24px">#53</b></div>
<div class="pm" style="left:42.5px;top:148.8px"><b>#36</b><b>#37</b><b>#38</b><b>#39</b><b>#40</b><b>#41</b><b>#42</b><b>#43</b><b style="width:24px">#44</b></div>
<div class="pm" style="left:42.5px;top:161.8px"><b>#45</b><b>#46</b><b>#47</b><b>#48</b><b>#49</b><b>#50</b><b>#51</b><b>#52</b><b style="width:24px">#53</b></div>
<div class="pm" style="left:42.5px;top:174.8px"><b>#54</b><b>#55</b><b>#56</b><b>#57</b><b>#58</b><b>#59</b><b>#60</b><b>#61</b><b style="width:24px">#62</b></div>
<div class="pm" style="left:42.5px;top:187.8px"><b>#63</b><b>#64</b><b>#65</b><b>#66</b><b>#67</b><b>#68</b><b>#69</b><b>#70</b><b style="width:24px">#71</b></div>
<div class="pm" style="left:42.5px;top:200.8px"><b>#54</b><b>#55</b><b>#56</b><b>#57</b><b>#58</b><b>#59</b><b>#60</b><b>#61</b><b style="width:24px">#62</b></div>
<div class="pm" style="left:42.5px;top:213.8px"><b>#63</b><b>#64</b><b>#65</b><b>#66</b><b>#67</b><b>#68</b><b>#69</b><b>#70</b><b style="width:24px">#71</b></div>
<div class="pm" style="left:42.5px;top:226.8px"><b>#72</b><b>#73</b><b>#74</b><b>#75</b><b>#76</b><b>#77</b><b>#78</b><b>#79</b><b style="width:24px">#80</b></div>
<div class="pm" style="left:42.5px;top:239.8px"><b>#81</b><b>#82</b><b>#83</b><b>#84</b><b>#85</b><b>#86</b><b>#87</b><b>#88</b><b style="width:24px">#89</b></div>
<div class="pm" style="left:42.5px;top:252.8px"><b>#72</b><b>#73</b><b>#74</b><b>#75</b><b>#76</b><b>#77</b><b>#78</b><b>#79</b><b style="width:24px">#80</b></div>
<div class="pm" style="left:42.5px;top:265.8px"><b>#81</b><b>#82</b><b>#83</b><b>#84</b><b>#85</b><b>#86</b><b>#87</b><b>#88</b><b style="width:24px">#89</b></div>
<div class="pm" style="left:42.5px;top:278.8px"><b>#90</b><b>#91</b><b>#92</b><b>#93</b><b>#94</b><b>#95</b><b>#96</b><b>#97</b><b style="width:24px">#98</b></div>
<div class="pm" style="left:42.5px;top:291.8px"><b>#99</b><b>#100</b><b>#101</b><b>#102</b><b>#103</b><b>#104</b><b>#105</b><b>#106</b><b style="width:24px">#107</b></div>
<div class="pm" style="left:42.5px;top:304.8px"><b>#90</b><b>#91</b><b>#92</b><b>#93</b><b>#94</b><b>#95</b><b>#96</b><b>#97</b><b style="width:24px">#98</b></div>
<div class="pm" style="left:42.5px;top:317.8px"><b>#99</b><b>#100</b><b>#101</b><b>#102</b><b>#103</b><b>#104</b><b>#105</b><b>#106</b><b style="width:24px">#107</b></div>
<div class="pm" style="left:42.5px;top:330.8px"><b>#108</b><b>#109</b><b>#110</b><b>#111</b><b>#112</b><b>#113</b><b>#114</b><b>#115</b><b style="width:24px">#116</b></div>
<div class="pm" style="left:42.5px;top:343.8px"><b>#117</b><b>#118</b><b>#119</b><b>#120</b><b>#121</b><b>#122</b><b>#123</b><b>#124</b><b style="width:24px">#125</b></div>
<div class="pm" style="left:42.5px;top:356.8px"><b>#108</b><b>#109</b><b>#110</b><b>#111</b><b>#112</b><b>#113</b><b>#114</b><b>#115</b><b style="width:24px">#116</b></div>
<div class="pm" style="left:42.5px;top:369.8px"><b>#117</b><b>#118</b><b>#119</b><b>#120</b><b>#121</b><b>#122</b><b>#123</b><b>#124</b><b style="width:24px">#125</b></div>
<div class="pm" style="left:42.5px;top:382.8px"><b>#126</b><b>#127</b><b>#128</b><b>#129</b><b>#130</b><b>#131</b><b>#132</b><b>#133</b><b style="width:24px">#134</b></div>
<div class="pm" style="left:42.5px;top:395.8px"><b>#135</b><b>#136</b><b>#137</b><b>#138</b><b>#139</b><b>#140</b><b>#141</b><b>#142</b><b style="width:24px">#143</b></div>
<div class="pm" style="left:42.5px;top:408.8px"><b>#126</b><b>#127</b><b>#128</b><b>#129</b><b>#130</b><b>#131</b><b>#132</b><b>#133</b><b style="width:24px">#134</b></div>
<div class="pm" style="left:42.5px;top:421.8px"><b>#135</b><b>#136</b><b>#137</b><b>#138</b><b>#139</b><b>#140</b><b>#141</b><b>#142</b><b style="width:24px">#143</b></div>
<div class="pm" style="left:42.5px;top:434.8px"><b>#144</b><b>#145</b><b>#146</b><b>#147</b><b>#148</b><b>#149</b><b>#150</b><b>#151</b><b style="width:24px">#152</b></div>
<div class="pm" style="left:42.5px;top:447.8px"><b>#153</b><b>#154</b><b>#155</b><b>#156</b><b>#157</b><b>#158</b><b>#159</b><b>#160</b><b style="width:24px">#161</b></div>
<div class="pm" style="left:42.5px;top:460.8px"><b>#144</b><b>#145</b><b>#146</b><b>#147</b><b>#148</b><b>#149</b><b>#150</b><b>#151</b><b style="width:24px">#152</b></div>
<div class="pm" style="left:42.5px;top:473.8px"><b>#153</b><b>#154</b><b>#155</b><b>#156</b><b>#157</b><b>#158</b><b>#159</b><b>#160</b><b style="width:24px">#161</b></div>
<div class="pm" style="left:42.5px;top:486.8px"><b>#162</b><b>#163</b><b>#164</b><b>#165</b><b>#166</b><b>#167</b><b>#168</b><b>#169</b><b style="width:24px">#170</b></div>
<div class="pm" style="left:42.5px;top:499.8px"><b>#171</b><b>#172</b><b>#173</b><b>#174</b><b>#175</b><b>#176</b><b>#177</b><b>#178</b><b style="width:24px">#179</b></div>
<div class="pm" style="left:42.5px;top:512.8px"><b>#162</b><b>#163</b><b>#164</b><b>#165</b><b>#166</b><b>#167</b><b>#168</b><b>#169</b><b style="width:24px">#170</b></div>
<div class="pm" style="left:42.5px;top:525.8px"><b>#171</b><b>#172</b><b>#173</b><b>#174</b><b>#175</b><b>#176</b><b>#177</b><b>#178</b><b style="width:24px">#179</b></div>
<div class="pm" style="left:42.5px;top:538.8px"><b>#180</b><b>#181</b><b>#182</b><b>#183</b><b>#184</b><b>#185</b><b>#186</b><b>#187</b><b style="width:24px">#188</b></div>
<div class="pm" style="left:42.5px;top:551.8px"><b>#189</b><b>#190</b><b>#191</b><b>#192</b><b>#193</b><b>#194</b><b>#195</b><b>#196</b><b style="width:24px">#197</b></div>
<div class="pm" style="left:42.5px;top:564.8px"><b>#180</b><b>#181</b><b>#182</b><b>#183</b><b>#184</b><b>#185</b><b>#186</b><b>#187</b><b style="width:24px">#188</b></div>
<div class="pm" style="left:42.5px;top:577.8px"><b>#189</b><b>#190</b><b>#191</b><b>#192</b><b>#193</b><b>#194</b><b>#195</b><b>#196</b><b style="width:24px">#197</b></div>
<div class="pm" style="left:42.5px;top:590.8px"><b>#198</b><b>#199</b><b>#200</b><b>#201</b><b>#202</b><b>#203</b><b>#204</b><b>#205</b><b style="width:24px">#206</b></div>
<div class="pm" style="left:42.5px;top:603.8px"><b>#207</b><b>#208</b><b>#209</b><b>#210</b><b>#211</b><b>#212</b><b>#213</b><b>#214</b><b style="width:24px">#215</b></div>
<div class="pm" style="left:42.5px;top:616.8px"><b>#198</b><b>#199</b><b>#200</b><b>#201</b><b>#202</b><b>#203</b><b>#204</b><b>#205</b><b style="width:24px">#206</b></div>
<div class="pm" style="left:42.5px;top:629.8px"><b>#207</b><b>#208</b><b>#209</b><b>#210</b><b>#211</b><b>#212</b><b>#213</b><b>#214</b><b style="width:24px">#215</b></div>
<div class="pm" style="left:42.5px;top:642.8px"><b>#216</b><b>#217</b><b>#218</b><b>#219</b><b>#220</b><b>#221</b><b>#222</b><b>#223</b><b style="width:24px">#224</b></div>
<div class="pm" style="left:42.5px;top:655.8px"><b>#225</b><b>#226</b><b>#227</b><b>#228</b><b>#229</b><b>#230</b><b>#231</b><b>#232</b><b style="width:24px">#233</b></div>
<div class="pm" style="left:42.5px;top:668.8px"><b>#216</b><b>#217</b><b>#218</b><b>#219</b><b>#220</b><b>#221</b><b>#222</b><b>#223</b><b style="width:24px">#224</b></div>
<div class="pm" style="left:42.5px;top:681.8px"><b>#225</b><b>#226</b><b>#227</b><b>#228</b><b>#229</b><b>#230</b><b>#231</b><b>#232</b><b style="width:24px">#233</b></div>
<div class="pm" style="left:42.5px;top:694.8px"><b>#234</b><b>#235</b><b>#236</b><b>#237</b><b>#238</b><b>#239</b><b>#240</b><b>#241</b><b style="width:24px">#242</b></div>
<div class="pm" style="left:42.5px;top:707.8px"><b>#243</b><b>#244</b><b>#245</b><b>#246</b><b>#247</b><b>#248</b><b>#249</b><b>#250</b><b style="width:24px">#251</b></div>
<div class="pm" style="left:42.5px;top:720.8px"><b>#234</b><b>#235</b><b>#236</b><b>#237</b><b>#238</b><b>#239</b><b>#240</b><b>#241</b><b style="width:24px">#242</b></div>
<div class="pm" style="left:42.5px;top:733.8px"><b>#243</b><b>#244</b><b>#245</b><b>#246</b><b>#247</b><b>#248</b><b>#249</b><b>#250</b><b style="width:24px">#251</b></div>
<div class="pm" style="left:42.5px;top:746.8px"><b>#252</b><b>#253</b><b>#254</b><b>#255</b><b>#256</b><b>#257</b><b>#258</b><b>#259</b><b style="width:24px">#260</b></div>
<div class="pm" style="left:42.5px;top:759.8px"><b>#261</b><b>#262</b><b>#263</b><b>#264</b><b>#265</b><b>#266</b><b>#267</b><b>#268</b><b style="width:24px">#269</b></div>
<div class="pm" style="left:42.5px;top:772.8px"><b>#252</b><b>#253</b><b>#254</b><b>#255</b><b>#256</b><b>#257</b><b>#258</b><b>#259</b><b style="width:24px">#260</b></div>
<div class="pm" style="left:42.5px;top:785.8px"><b>#261</b><b>#262</b><b>#263</b><b>#264</b><b>#265</b><b>#266</b><b>#267</b><b>#268</b><b style="width:24px">#269</b></div>
<div class="pm" style="left:42.5px;top:798.8px"><b>#270</b><b>#271</b><b>#272</b><b>#273</b><b>#274</b><b>#275</b><b>#276</b><b>#277</b><b style="width:24px">#278</b></div>
<div class="pm" style="left:42.5px;top:811.8px"><b>#279</b><b>#280</b><b>#281</b><b>#282</b><b>#283</b><b>#284</b><b>#285</b><b>#286</b><b style="width:24px">#287</b></div>
<div class="pm" style="left:42.5px;top:824.8px"><b>#270</b><b>#271</b><b>#272</b><b>#273</b><b>#274</b><b>#275</b><b>#276</b><b>#277</b><b style="width:24px">#278</b></div>
<div class="pm" style="left:42.5px;top:837.8px"><b>#279</b><b>#280</b><b>#281</b><b>#282</b><b>#283</b><b>#284</b><b>#285</b><b>#286</b><b style="width:24px">#287</b></div>
<div class="pm" style="left:42.5px;top:850.8px"><b>#288</b><b>#289</b><b>#290</b><b>#291</b><b>#292</b><b>#293</b><b>#294</b><b>#295</b><b style="width:24px">#296</b></div>
<div class="pm" style="left:42.5px;top:863.8px"><b>#297</b><b>#298</b><b>#299</b><b>#300</b><b>#301</b><b>#302</b><b>#303</b><b>#304</b><b style="width:24px">#305</b></div>
<div class="pm" style="left:42.5px;top:876.8px"><b>#288</b><b>#289</b><b>#290</b><b>#291</b><b>#292</b><b>#293</b><b>#294</b><b>#295</b><b style="width:24px">#296</b></div>
<div class="pm" style="left:42.5px;top:889.8px"><b>#297</b><b>#298</b><b>#299</b><b>#300</b><b>#301</b><b>#302</b><b>#303</b><b>#304</b><b style="width:24px">#305</b></div>
<div class="pm" style="left:42.5px;top:902.8px"><b>#306</b><b>#307</b><b>#308</b><b>#309</b><b>#310</b><b>#311</b><b>#312</b><b>#313</b><b style="width:24px">#314</b></div>
<div class="pm" style="left:42.5px;top:915.8px"><b>#315</b><b>#316</b><b>#317</b><b>#318</b><b>#319</b><b>#320</b><b>#321</b><b>#322</b><b style="width:24px">#323</b></div>
<div class="pm" style="left:42.5px;top:928.8px"><b>#306</b><b>#307</b><b>#308</b><b>#309</b><b>#310</b><b>#311</b><b>#312</b><b>#313</b><b style="width:24px">#314</b></div>
<div class="pm" style="left:42.5px;top:941.8px"><b>#315</b><b>#316</b><b>#317</b><b>#318</b><b>#319</b><b>#320</b><b>#321</b><b>#322</b><b style="width:24px">#323</b></div>
<div class="pm" style="left:42.5px;top:954.8px"><b>#324</b><b>#325</b><b>#326</b><b>#327</b><b>#328</b><b>#329</b><b>#330</b><b>#331</b><b style="width:24px">#332</b></div>
<div class="pm" style="left:42.5px;top:967.8px"><b>#333</b><b>#334</b><b>#335</b><b>#336</b><b>#337</b><b>#338</b><b>#339</b><b>#340</b><b style="width:24px">#341</b></div>
<div class="pm" style="left:42.5px;top:980.8px"><b>#324</b><b>#325</b><b>#326</b><b>#327</b><b>#328</b><b>#329</b><b>#330</b><b>#331</b><b style="width:24px">#332</b></div>
<div class="pm" style="left:42.5px;top:993.8px"><b>#333</b><b>#334</b><b>#335</b><b>#336</b><b>#337</b><b>#338</b><b>#339</b><b>#340</b><b style="width:24px">#341</b></div>
<div class="pm" style="left:42.5px;top:1006.8px"><b>#342</b><b>#343</b><b>#344</b><b>#345</b><b>#346</b><b>#347</b><b>#348</b><b>#349</b><b style="width:24px">#350</b></div>
<div class="pm" style="left:42.5px;top:1019.8px"><b>#351</b><b>#352</b><b>#353</b><b>#354</b><b>#355</b><b>#356</b><b>#357</b><b>#358</b><b style="width:24px">#359</b></div>
<div class="pm" style="left:42.5px;top:1032.8px"><b>#342</b><b>#343</b><b>#344</b><b>#345</b><b>#346</b><b>#347</b><b>#348</b><b>#349</b><b style="width:24px">#350</b></div>
<div class="pm" style="left:42.5px;top:1045.8px"><b>#351</b><b>#352</b><b>#353</b><b>#354</b><b>#355</b><b>#356</b><b>#357</b><b>#358</b><b style="width:24px">#359</b></div>
<div class="pm" style="left:42.5px;top:1058.8px"><b>#360</b><b>#361</b><b>#362</b><b>#363</b><b>#364</b><b>#365</b><b>#366</b><b>#367</b><b style="width:24px">#368</b></div>
<div class="pm" style="left:42.5px;top:1071.8px"><b>#369</b><b>#370</b><b>#371</b><b>#372</b><b>#373</b><b>#374</b><b>#375</b><b>#376</b><b style="width:24px">#377</b></div>
<div class="pm" style="left:42.5px;top:1084.8px"><b>#360</b><b>#361</b><b>#362</b><b>#363</b><b>#364</b><b>#365</b><b>#366</b><b>#367</b><b style="width:24px">#368</b></div>
<div class="pm" style="left:42.5px;top:1097.8px"><b>#369</b><b>#370</b><b>#371</b><b>#372</b><b>#373</b><b>#374</b><b>#375</b><b>#376</b><b style="width:24px">#377</b></div>
<div class="pm" style="left:42.5px;top:1110.8px"><b>#378</b><b>#379</b><b>#380</b><b>#381</b><b>#382</b><b>#383</b><b>#384</b><b>#385</b><b style="width:24px">#386</b></div>
<div class="pm" style="left:42.5px;top:1123.8px"><b>#387</b><b>#388</b><b>#389</b><b>#390</b><b>#391</b><b>#392</b><b>#393</b><b>#394</b><b style="width:24px">#395</b></div>
<div class="pm" style="left:42.5px;top:1136.8px"><b>#378</b><b>#379</b><b>#380</b><b>#381</b><b>#382</b><b>#383</b><b>#384</b><b>#385</b><b style="width:24px">#386</b></div>
<div class="pm" style="left:42.5px;top:1149.8px"><b>#387</b><b>#388</b><b>#389</b><b>#390</b><b>#391</b><b>#392</b><b>#393</b><b>#394</b><b style="width:24px">#395</b></div>
<div class="pm" style="left:42.5px;top:1162.8px"><b>#396</b><b>#397</b><b>#398</b><b>#399</b><b>#400</b><b>#401</b><b>#402</b><b>#403</b><b style="width:24px">#404</b></div>
<div class="pm" style="left:42.5px;top:1175.8px"><b>#405</b><b>#406</b><b>#407</b><b>#408</b><b>#409</b><b>#410</b><b>#411</b><b>#412</b><b style="width:24px">#413</b></div>
<div class="pm" style="left:42.5px;top:1188.8px"><b>#396</b><b>#397</b><b>#398</b><b>#399</b><b>#400</b><b>#401</b><b>#402</b><b>#403</b><b style="width:24px">#404</b></div>
<div class="pm" style="left:42.5px;top:1201.8px"><b>#405</b><b>#406</b><b>#407</b><b>#408</b><b>#409</b><b>#410</b><b>#411</b><b>#412</b><b style="width:24px">#413</b></div>
<div class="pm" style="left:42.5px;top:1214.8px"><b>#414</b><b>#415</b><b>#416</b><b>#417</b><b>#418</b><b>#419</b><b>#420</b><b>#421</b><b style="width:24px">#422</b></div>
<div class="pm" style="left:42.5px;top:1227.8px"><b>#423</b><b>#424</b><b>#425</b><b>#426</b><b>#427</b><b>#428</b><b>#429</b><b>#430</b><b style="width:24px">#431</b></div>
<div class="pm" style="left:42.5px;top:1240.8px"><b>#414</b><b>#415</b><b>#416</b><b>#417</b><b>#418</b><b>#419</b><b>#420</b><b>#421</b><b style="width:24px">#422</b></div>
<div class="pm" style="left:42.5px;top:1253.8px"><b>#423</b><b>#424</b><b>#425</b><b>#426</b><b>#427</b><b>#428</b><b>#429</b><b>#430</b><b style="width:24px">#431</b></div>
<div class="pm" style="left:42.5px;top:1266.8px"><b>#432</b><b>#433</b><b>#434</b><b>#435</b><b>#436</b><b>#437</b><b>#438</b><b>#439</b><b style="width:24px">#440</b></div>
<div class="pm" style="left:42.5px;top:1279.8px"><b>#441</b><b>#442</b><b>#443</b><b>#444</b><b>#445</b><b>#446</b><b>#447</b><b>#448</b><b style="width:24px">#449</b></div>
<div class="pm" style="left:42.5px;top:1292.8px"><b>#432</b><b>#433</b><b>#434</b><b>#435</b><b>#436</b><b>#437</b><b>#438</b><b>#439</b><b style="width:24px">#440</b></div>
<div class="pm" style="left:42.5px;top:1305.8px"><b>#441</b><b>#442</b><b>#443</b><b>#444</b><b>#445</b><b>#446</b><b>#447</b><b>#448</b><b style="width:24px">#449</b></div>
</div>
<div class="r" style="left:1092.5px;top:1181.0px;width:1899.0px;height:202.0px;background:#111111;"></div>
<div class="r" style="left:1092.5px;top:1180.5px;width:1899.0px;height:1.5px;background:#444448;"></div>
<div class="r" style="left:1092.5px;top:1182.0px;width:1899.0px;height:22.0px;background:#232323;"></div>
<div class="r" style="left:1092.5px;top:1204.3px;width:1899.0px;height:1.0px;background:#35414f;"></div>
<div class="r" style="left:1097.0px;top:1184.0px;width:168.0px;height:20.3px;background:#284a78;border-radius:5px 5px 0 0;"></div>
<svg style="left:1103px;top:1187px;" width="14" height="14" viewBox="0 0 14 14"><circle cx="7" cy="7" r="6" stroke="#c8d4e8" stroke-width="1.2" fill="none"/><path d="M4 4l6 6" stroke="#c8d4e8" stroke-width="1.2"/></svg>
<div class="t" style="left:1123.0px;top:1189.1px;color:#e6e6e6;">FluxEngine status</div>
<svg style="left:1249px;top:1189px;" width="10" height="10" viewBox="0 0 10 10"><path d="M0 0L10 10M10 0L0 10" stroke="#e0e0e0" stroke-width="1.3" fill="none"/></svg>
<div class="r" style="left:2980.0px;top:1207.0px;width:9.0px;height:139.0px;background:#4a4a4a;border-radius:4.5px;"></div>
<div class="t" style="left:1900.5px;top:1215.6px;">Physical view (what your drive sees)</div>
<div class="t" style="left:1911.5px;top:1293.6px;">Logical view (what's on the disk)</div>
<div class="t" style="left:1124.8px;top:1236.1px;font-size:8.6px;line-height:11px;color:#d0d0d0;transform:scaleY(1.25);">c0</div>
<div class="t" style="left:1124.8px;top:1356.1px;font-size:8.6px;line-height:11px;color:#d0d0d0;transform:scaleY(1.25);">c0</div>
<div class="t" style="left:1147.8px;top:1236.1px;font-size:8.6px;line-height:11px;color:#d0d0d0;transform:scaleY(1.25);">c1</div>
<div class="t" style="left:1147.8px;top:1356.1px;font-size:8.6px;line-height:11px;color:#d0d0d0;transform:scaleY(1.25);">c1</div>
<div class="t" style="left:1170.8px;top:1236.1px;font-size:8.6px;line-height:11px;color:#d0d0d0;transform:scaleY(1.25);">c2</div>
<div class="t" style="left:1170.8px;top:1356.1px;font-size:8.6px;line-height:11px;color:#d0d0d0;transform:scaleY(1.25);">c2</div>
<div class="t" style="left:1193.8px;top:1236.1px;font-size:8.6px;line-height:11px;color:#d0d0d0;transform:scaleY(1.25);">c3</div>
<div class="t" style="left:1193.8px;top:1356.1px;font-size:8.6px;line-height:11px;color:#d0d0d0;transform:scaleY(1.25);">c3</div>
<div class="t" style="left:1216.8px;top:1236.1px;font-size:8.6px;line-height:11px;color:#d0d0d0;transform:scaleY(1.25);">c4</div>
<div class="t" style="left:1216.8px;top:1356.1px;font-size:8.6px;line-height:11px;color:#d0d0d0;transform:scaleY(1.25);">c4</div>
<div class="t" style="left:1239.8px;top:1236.1px;font-size:8.6px;line-height:11px;color:#d0d0d0;transform:scaleY(1.25);">c5</div>
<div class="t" style="left:1239.8px;top:1356.1px;font-size:8.6px;line-height:11px;color:#d0d0d0;transform:scaleY(1.25);">c5</div>
<div class="t" style="left:1262.8px;top:1236.1px;font-size:8.6px;line-height:11px;color:#d0d0d0;transform:scaleY(1.25);">c6</div>
<div class="t" style="left:1262.8px;top:1356.1px;font-size:8.6px;line-height:11px;color:#d0d0d0;transform:scaleY(1.25);">c6</div>
<div class="t" style="left:1285.8px;top:1236.1px;font-size:8.6px;line-height:11px;color:#d0d0d0;transform:scaleY(1.25);">c7</div>
<div class="t" style="left:1285.8px;top:1356.1px;font-size:8.6px;line-height:11px;color:#d0d0d0;transform:scaleY(1.25);">c7</div>
<div class="t" style="left:1308.8px;top:1236.1px;font-size:8.6px;line-height:11px;color:#d0d0d0;transform:scaleY(1.25);">c8</div>
<div class="t" style="left:1308.8px;top:1356.1px;font-size:8.6px;line-height:11px;color:#d0d0d0;transform:scaleY(1.25);">c8</div>
<div class="t" style="left:1331.8px;top:1236.1px;font-size:8.6px;line-height:11px;color:#d0d0d0;transform:scaleY(1.25);">c9</div>
<div class="t" style="left:1331.8px;top:1356.1px;font-size:8.6px;line-height:11px;color:#d0d0d0;transform:scaleY(1.25);">c9</div>
<div class="t" style="left:1352.3px;top:1236.1px;font-size:8.6px;line-height:11px;color:#d0d0d0;transform:scaleY(1.25);">c10</div>
<div class="t" style="left:1352.3px;top:1356.1px;font-size:8.6px;line-height:11px;color:#d0d0d0;transform:scaleY(1.25);">c10</div>
<div class="t" style="left:1375.3px;top:1236.1px;font-size:8.6px;line-height:11px;color:#d0d0d0;transform:scaleY(1.25);">c11</div>
<div class="t" style="left:1375.3px;top:1356.1px;font-size:8.6px;line-height:11px;color:#d0d0d0;transform:scaleY(1.25);">c11</div>
<div class="t" style="left:1398.3px;top:1236.1px;font-size:8.6px;line-height:11px;color:#d0d0d0;transform:scaleY(1.25);">c12</div>
<div class="t" style="left:1398.3px;top:1356.1px;font-size:8.6px;line-height:11px;color:#d0d0d0;transform:scaleY(1.25);">c12</div>
<div class="t" style="left:1421.3px;top:1236.1px;font-size:8.6px;line-height:11px;color:#d0d0d0;transform:scaleY(1.25);">c13</div>
<div class="t" style="left:1421.3px;top:1356.1px;font-size:8.6px;line-height:11px;color:#d0d0d0;transform:scaleY(1.25);">c13</div>
<div class="t" style="left:1444.3px;top:1236.1px;font-size:8.6px;line-height:11px;color:#d0d0d0;transform:scaleY(1.25);">c14</div>
<div class="t" style="left:1444.3px;top:1356.1px;font-size:8.6px;line-height:11px;color:#d0d0d0;transform:scaleY(1.25);">c14</div>
<div class="t" style="left:1467.3px;top:1236.1px;font-size:8.6px;line-height:11px;color:#d0d0d0;transform:scaleY(1.25);">c15</div>
<div class="t" style="left:1467.3px;top:1356.1px;font-size:8.6px;line-height:11px;color:#d0d0d0;transform:scaleY(1.25);">c15</div>
<div class="t" style="left:1490.3px;top:1236.1px;font-size:8.6px;line-height:11px;color:#d0d0d0;transform:scaleY(1.25);">c16</div>
<div class="t" style="left:1490.3px;top:1356.1px;font-size:8.6px;line-height:11px;color:#d0d0d0;transform:scaleY(1.25);">c16</div>
<div class="t" style="left:1513.3px;top:1236.1px;font-size:8.6px;line-height:11px;color:#d0d0d0;transform:scaleY(1.25);">c17</div>
<div class="t" style="left:1513.3px;top:1356.1px;font-size:8.6px;line-height:11px;color:#d0d0d0;transform:scaleY(1.25);">c17</div>
<div class="t" style="left:1536.3px;top:1236.1px;font-size:8.6px;line-height:11px;color:#d0d0d0;transform:scaleY(1.25);">c18</div>
<div class="t" style="left:1536.3px;top:1356.1px;font-size:8.6px;line-height:11px;color:#d0d0d0;transform:scaleY(1.25);">c18</div>
<div class="t" style="left:1559.3px;top:1236.1px;font-size:8.6px;line-height:11px;color:#d0d0d0;transform:scaleY(1.25);">c19</div>
<div class="t" style="left:1559.3px;top:1356.1px;font-size:8.6px;line-height:11px;color:#d0d0d0;transform:scaleY(1.25);">c19</div>
<div class="t" style="left:1582.3px;top:1236.1px;font-size:8.6px;line-height:11px;color:#d0d0d0;transform:scaleY(1.25);">c20</div>
<div class="t" style="left:1582.3px;top:1356.1px;font-size:8.6px;line-height:11px;color:#d0d0d0;transform:scaleY(1.25);">c20</div>
<div class="t" style="left:1605.3px;top:1236.1px;font-size:8.6px;line-height:11px;color:#d0d0d0;transform:scaleY(1.25);">c21</div>
<div class="t" style="left:1605.3px;top:1356.1px;font-size:8.6px;line-height:11px;color:#d0d0d0;transform:scaleY(1.25);">c21</div>
<div class="t" style="left:1628.3px;top:1236.1px;font-size:8.6px;line-height:11px;color:#d0d0d0;transform:scaleY(1.25);">c22</div>
<div class="t" style="left:1628.3px;top:1356.1px;font-size:8.6px;line-height:11px;color:#d0d0d0;transform:scaleY(1.25);">c22</div>
<div class="t" style="left:1651.3px;top:1236.1px;font-size:8.6px;line-height:11px;color:#d0d0d0;transform:scaleY(1.25);">c23</div>
<div class="t" style="left:1651.3px;top:1356.1px;font-size:8.6px;line-height:11px;color:#d0d0d0;transform:scaleY(1.25);">c23</div>
<div class="t" style="left:1674.3px;top:1236.1px;font-size:8.6px;line-height:11px;color:#d0d0d0;transform:scaleY(1.25);">c24</div>
<div class="t" style="left:1674.3px;top:1356.1px;font-size:8.6px;line-height:11px;color:#d0d0d0;transform:scaleY(1.25);">c24</div>
<div class="t" style="left:1697.3px;top:1236.1px;font-size:8.6px;line-height:11px;color:#d0d0d0;transform:scaleY(1.25);">c25</div>
<div class="t" style="left:1697.3px;top:1356.1px;font-size:8.6px;line-height:11px;color:#d0d0d0;transform:scaleY(1.25);">c25</div>
<div class="t" style="left:1720.3px;top:1236.1px;font-size:8.6px;line-height:11px;color:#d0d0d0;transform:scaleY(1.25);">c26</div>
<div class="t" style="left:1720.3px;top:1356.1px;font-size:8.6px;line-height:11px;color:#d0d0d0;transform:scaleY(1.25);">c26</div>
<div class="t" style="left:1743.3px;top:1236.1px;font-size:8.6px;line-height:11px;color:#d0d0d0;transform:scaleY(1.25);">c27</div>
<div class="t" style="left:1743.3px;top:1356.1px;font-size:8.6px;line-height:11px;color:#d0d0d0;transform:scaleY(1.25);">c27</div>
<div class="t" style="left:1766.3px;top:1236.1px;font-size:8.6px;line-height:11px;color:#d0d0d0;transform:scaleY(1.25);">c28</div>
<div class="t" style="left:1766.3px;top:1356.1px;font-size:8.6px;line-height:11px;color:#d0d0d0;transform:scaleY(1.25);">c28</div>
<div class="t" style="left:1789.3px;top:1236.1px;font-size:8.6px;line-height:11px;color:#d0d0d0;transform:scaleY(1.25);">c29</div>
<div class="t" style="left:1789.3px;top:1356.1px;font-size:8.6px;line-height:11px;color:#d0d0d0;transform:scaleY(1.25);">c29</div>
<div class="t" style="left:1812.3px;top:1236.1px;font-size:8.6px;line-height:11px;color:#d0d0d0;transform:scaleY(1.25);">c30</div>
<div class="t" style="left:1812.3px;top:1356.1px;font-size:8.6px;line-height:11px;color:#d0d0d0;transform:scaleY(1.25);">c30</div>
<div class="t" style="left:1835.3px;top:1236.1px;font-size:8.6px;line-height:11px;color:#d0d0d0;transform:scaleY(1.25);">c31</div>
<div class="t" style="left:1835.3px;top:1356.1px;font-size:8.6px;line-height:11px;color:#d0d0d0;transform:scaleY(1.25);">c31</div>
<div class="t" style="left:1858.3px;top:1236.1px;font-size:8.6px;line-height:11px;color:#d0d0d0;transform:scaleY(1.25);">c32</div>
<div class="t" style="left:1858.3px;top:1356.1px;font-size:8.6px;line-height:11px;color:#d0d0d0;transform:scaleY(1.25);">c32</div>
<div class="t" style="left:1881.3px;top:1236.1px;font-size:8.6px;line-height:11px;color:#d0d0d0;transform:scaleY(1.25);">c33</div>
<div class="t" style="left:1881.3px;top:1356.1px;font-size:8.6px;line-height:11px;color:#d0d0d0;transform:scaleY(1.25);">c33</div>
<div class="t" style="left:1904.3px;top:1236.1px;font-size:8.6px;line-height:11px;color:#d0d0d0;transform:scaleY(1.25);">c34</div>
<div class="t" style="left:1904.3px;top:1356.1px;font-size:8.6px;line-height:11px;color:#d0d0d0;transform:scaleY(1.25);">c34</div>
<div class="t" style="left:1927.3px;top:1236.1px;font-size:8.6px;line-height:11px;color:#d0d0d0;transform:scaleY(1.25);">c35</div>
<div class="t" style="left:1927.3px;top:1356.1px;font-size:8.6px;line-height:11px;color:#d0d0d0;transform:scaleY(1.25);">c35</div>
<div class="t" style="left:1950.3px;top:1236.1px;font-size:8.6px;line-height:11px;color:#d0d0d0;transform:scaleY(1.25);">c36</div>
<div class="t" style="left:1950.3px;top:1356.1px;font-size:8.6px;line-height:11px;color:#d0d0d0;transform:scaleY(1.25);">c36</div>
<div class="t" style="left:1973.3px;top:1236.1px;font-size:8.6px;line-height:11px;color:#d0d0d0;transform:scaleY(1.25);">c37</div>
<div class="t" style="left:1973.3px;top:1356.1px;font-size:8.6px;line-height:11px;color:#d0d0d0;transform:scaleY(1.25);">c37</div>
<div class="t" style="left:1996.3px;top:1236.1px;font-size:8.6px;line-height:11px;color:#d0d0d0;transform:scaleY(1.25);">c38</div>
<div class="t" style="left:1996.3px;top:1356.1px;font-size:8.6px;line-height:11px;color:#d0d0d0;transform:scaleY(1.25);">c38</div>
<div class="t" style="left:2019.3px;top:1236.1px;font-size:8.6px;line-height:11px;color:#d0d0d0;transform:scaleY(1.25);">c39</div>
<div class="t" style="left:2019.3px;top:1356.1px;font-size:8.6px;line-height:11px;color:#d0d0d0;transform:scaleY(1.25);">c39</div>
<div class="t" style="left:2042.3px;top:1236.1px;font-size:8.6px;line-height:11px;color:#d0d0d0;transform:scaleY(1.25);">c40</div>
<div class="t" style="left:2042.3px;top:1356.1px;font-size:8.6px;line-height:11px;color:#d0d0d0;transform:scaleY(1.25);">c40</div>
<div class="t" style="left:2065.3px;top:1236.1px;font-size:8.6px;line-height:11px;color:#d0d0d0;transform:scaleY(1.25);">c41</div>
<div class="t" style="left:2065.3px;top:1356.1px;font-size:8.6px;line-height:11px;color:#d0d0d0;transform:scaleY(1.25);">c41</div>
<div class="t" style="left:2088.3px;top:1236.1px;font-size:8.6px;line-height:11px;color:#d0d0d0;transform:scaleY(1.25);">c42</div>
<div class="t" style="left:2088.3px;top:1356.1px;font-size:8.6px;line-height:11px;color:#d0d0d0;transform:scaleY(1.25);">c42</div>
<div class="t" style="left:2111.3px;top:1236.1px;font-size:8.6px;line-height:11px;color:#d0d0d0;transform:scaleY(1.25);">c43</div>
<div class="t" style="left:2111.3px;top:1356.1px;font-size:8.6px;line-height:11px;color:#d0d0d0;transform:scaleY(1.25);">c43</div>
<div class="t" style="left:2134.3px;top:1236.1px;font-size:8.6px;line-height:11px;color:#d0d0d0;transform:scaleY(1.25);">c44</div>
<div class="t" style="left:2134.3px;top:1356.1px;font-size:8.6px;line-height:11px;color:#d0d0d0;transform:scaleY(1.25);">c44</div>
<div class="t" style="left:2157.3px;top:1236.1px;font-size:8.6px;line-height:11px;color:#d0d0d0;transform:scaleY(1.25);">c45</div>
<div class="t" style="left:2157.3px;top:1356.1px;font-size:8.6px;line-height:11px;color:#d0d0d0;transform:scaleY(1.25);">c45</div>
<div class="t" style="left:2180.3px;top:1236.1px;font-size:8.6px;line-height:11px;color:#d0d0d0;transform:scaleY(1.25);">c46</div>
<div class="t" style="left:2180.3px;top:1356.1px;font-size:8.6px;line-height:11px;color:#d0d0d0;transform:scaleY(1.25);">c46</div>
<div class="t" style="left:2203.3px;top:1236.1px;font-size:8.6px;line-height:11px;color:#d0d0d0;transform:scaleY(1.25);">c47</div>
<div class="t" style="left:2203.3px;top:1356.1px;font-size:8.6px;line-height:11px;color:#d0d0d0;transform:scaleY(1.25);">c47</div>
<div class="t" style="left:2226.3px;top:1236.1px;font-size:8.6px;line-height:11px;color:#d0d0d0;transform:scaleY(1.25);">c48</div>
<div class="t" style="left:2226.3px;top:1356.1px;font-size:8.6px;line-height:11px;color:#d0d0d0;transform:scaleY(1.25);">c48</div>
<div class="t" style="left:2249.3px;top:1236.1px;font-size:8.6px;line-height:11px;color:#d0d0d0;transform:scaleY(1.25);">c49</div>
<div class="t" style="left:2249.3px;top:1356.1px;font-size:8.6px;line-height:11px;color:#d0d0d0;transform:scaleY(1.25);">c49</div>
<div class="t" style="left:2272.3px;top:1236.1px;font-size:8.6px;line-height:11px;color:#d0d0d0;transform:scaleY(1.25);">c50</div>
<div class="t" style="left:2272.3px;top:1356.1px;font-size:8.6px;line-height:11px;color:#d0d0d0;transform:scaleY(1.25);">c50</div>
<div class="t" style="left:2295.3px;top:1236.1px;font-size:8.6px;line-height:11px;color:#d0d0d0;transform:scaleY(1.25);">c51</div>
<div class="t" style="left:2295.3px;top:1356.1px;font-size:8.6px;line-height:11px;color:#d0d0d0;transform:scaleY(1.25);">c51</div>
<div class="t" style="left:2318.3px;top:1236.1px;font-size:8.6px;line-height:11px;color:#d0d0d0;transform:scaleY(1.25);">c52</div>
<div class="t" style="left:2318.3px;top:1356.1px;font-size:8.6px;line-height:11px;color:#d0d0d0;transform:scaleY(1.25);">c52</div>
<div class="t" style="left:2341.3px;top:1236.1px;font-size:8.6px;line-height:11px;color:#d0d0d0;transform:scaleY(1.25);">c53</div>
<div class="t" style="left:2341.3px;top:1356.1px;font-size:8.6px;line-height:11px;color:#d0d0d0;transform:scaleY(1.25);">c53</div>
<div class="t" style="left:2364.3px;top:1236.1px;font-size:8.6px;line-height:11px;color:#d0d0d0;transform:scaleY(1.25);">c54</div>
<div class="t" style="left:2364.3px;top:1356.1px;font-size:8.6px;line-height:11px;color:#d0d0d0;transform:scaleY(1.25);">c54</div>
<div class="t" style="left:2387.3px;top:1236.1px;font-size:8.6px;line-height:11px;color:#d0d0d0;transform:scaleY(1.25);">c55</div>
<div class="t" style="left:2387.3px;top:1356.1px;font-size:8.6px;line-height:11px;color:#d0d0d0;transform:scaleY(1.25);">c55</div>
<div class="t" style="left:2410.3px;top:1236.1px;font-size:8.6px;line-height:11px;color:#d0d0d0;transform:scaleY(1.25);">c56</div>
<div class="t" style="left:2410.3px;top:1356.1px;font-size:8.6px;line-height:11px;color:#d0d0d0;transform:scaleY(1.25);">c56</div>
<div class="t" style="left:2433.3px;top:1236.1px;font-size:8.6px;line-height:11px;color:#d0d0d0;transform:scaleY(1.25);">c57</div>
<div class="t" style="left:2433.3px;top:1356.1px;font-size:8.6px;line-height:11px;color:#d0d0d0;transform:scaleY(1.25);">c57</div>
<div class="t" style="left:2456.3px;top:1236.1px;font-size:8.6px;line-height:11px;color:#d0d0d0;transform:scaleY(1.25);">c58</div>
<div class="t" style="left:2456.3px;top:1356.1px;font-size:8.6px;line-height:11px;color:#d0d0d0;transform:scaleY(1.25);">c58</div>
<div class="t" style="left:2479.3px;top:1236.1px;font-size:8.6px;line-height:11px;color:#d0d0d0;transform:scaleY(1.25);">c59</div>
<div class="t" style="left:2479.3px;top:1356.1px;font-size:8.6px;line-height:11px;color:#d0d0d0;transform:scaleY(1.25);">c59</div>
<div class="t" style="left:2502.3px;top:1236.1px;font-size:8.6px;line-height:11px;color:#d0d0d0;transform:scaleY(1.25);">c60</div>
<div class="t" style="left:2502.3px;top:1356.1px;font-size:8.6px;line-height:11px;color:#d0d0d0;transform:scaleY(1.25);">c60</div>
<div class="t" style="left:2525.3px;top:1236.1px;font-size:8.6px;line-height:11px;color:#d0d0d0;transform:scaleY(1.25);">c61</div>
<div class="t" style="left:2525.3px;top:1356.1px;font-size:8.6px;line-height:11px;color:#d0d0d0;transform:scaleY(1.25);">c61</div>
<div class="t" style="left:2548.3px;top:1236.1px;font-size:8.6px;line-height:11px;color:#d0d0d0;transform:scaleY(1.25);">c62</div>
<div class="t" style="left:2548.3px;top:1356.1px;font-size:8.6px;line-height:11px;color:#d0d0d0;transform:scaleY(1.25);">c62</div>
<div class="t" style="left:2571.3px;top:1236.1px;font-size:8.6px;line-height:11px;color:#d0d0d0;transform:scaleY(1.25);">c63</div>
<div class="t" style="left:2571.3px;top:1356.1px;font-size:8.6px;line-height:11px;color:#d0d0d0;transform:scaleY(1.25);">c63</div>
<div class="t" style="left:2594.3px;top:1236.1px;font-size:8.6px;line-height:11px;color:#d0d0d0;transform:scaleY(1.25);">c64</div>
<div class="t" style="left:2594.3px;top:1356.1px;font-size:8.6px;line-height:11px;color:#d0d0d0;transform:scaleY(1.25);">c64</div>
<div class="t" style="left:2617.3px;top:1236.1px;font-size:8.6px;line-height:11px;color:#d0d0d0;transform:scaleY(1.25);">c65</div>
<div class="t" style="left:2617.3px;top:1356.1px;font-size:8.6px;line-height:11px;color:#d0d0d0;transform:scaleY(1.25);">c65</div>
<div class="t" style="left:2640.3px;top:1236.1px;font-size:8.6px;line-height:11px;color:#d0d0d0;transform:scaleY(1.25);">c66</div>
<div class="t" style="left:2640.3px;top:1356.1px;font-size:8.6px;line-height:11px;color:#d0d0d0;transform:scaleY(1.25);">c66</div>
<div class="t" style="left:2663.3px;top:1236.1px;font-size:8.6px;line-height:11px;color:#d0d0d0;transform:scaleY(1.25);">c67</div>
<div class="t" style="left:2663.3px;top:1356.1px;font-size:8.6px;line-height:11px;color:#d0d0d0;transform:scaleY(1.25);">c67</div>
<div class="t" style="left:2686.3px;top:1236.1px;font-size:8.6px;line-height:11px;color:#d0d0d0;transform:scaleY(1.25);">c68</div>
<div class="t" style="left:2686.3px;top:1356.1px;font-size:8.6px;line-height:11px;color:#d0d0d0;transform:scaleY(1.25);">c68</div>
<div class="t" style="left:2709.3px;top:1236.1px;font-size:8.6px;line-height:11px;color:#d0d0d0;transform:scaleY(1.25);">c69</div>
<div class="t" style="left:2709.3px;top:1356.1px;font-size:8.6px;line-height:11px;color:#d0d0d0;transform:scaleY(1.25);">c69</div>
<div class="t" style="left:2732.8px;top:1236.1px;font-size:8.6px;line-height:11px;color:#d0d0d0;transform:scaleY(1.25);">c70</div>
<div class="t" style="left:2732.8px;top:1356.1px;font-size:8.6px;line-height:11px;color:#d0d0d0;transform:scaleY(1.25);">c70</div>
<div class="t" style="left:2756.8px;top:1236.1px;font-size:8.6px;line-height:11px;color:#d0d0d0;transform:scaleY(1.25);">c71</div>
<div class="t" style="left:2756.8px;top:1356.1px;font-size:8.6px;line-height:11px;color:#d0d0d0;transform:scaleY(1.25);">c71</div>
<div class="t" style="left:2780.8px;top:1236.1px;font-size:8.6px;line-height:11px;color:#d0d0d0;transform:scaleY(1.25);">c72</div>
<div class="t" style="left:2780.8px;top:1356.1px;font-size:8.6px;line-height:11px;color:#d0d0d0;transform:scaleY(1.25);">c72</div>
<div class="t" style="left:2804.8px;top:1236.1px;font-size:8.6px;line-height:11px;color:#d0d0d0;transform:scaleY(1.25);">c73</div>
<div class="t" style="left:2804.8px;top:1356.1px;font-size:8.6px;line-height:11px;color:#d0d0d0;transform:scaleY(1.25);">c73</div>
<div class="t" style="left:2828.8px;top:1236.1px;font-size:8.6px;line-height:11px;color:#d0d0d0;transform:scaleY(1.25);">c74</div>
<div class="t" style="left:2828.8px;top:1356.1px;font-size:8.6px;line-height:11px;color:#d0d0d0;transform:scaleY(1.25);">c74</div>
<div class="t" style="left:2852.8px;top:1236.1px;font-size:8.6px;line-height:11px;color:#d0d0d0;transform:scaleY(1.25);">c75</div>
<div class="t" style="left:2852.8px;top:1356.1px;font-size:8.6px;line-height:11px;color:#d0d0d0;transform:scaleY(1.25);">c75</div>
<div class="t" style="left:2876.8px;top:1236.1px;font-size:8.6px;line-height:11px;color:#d0d0d0;transform:scaleY(1.25);">c76</div>
<div class="t" style="left:2876.8px;top:1356.1px;font-size:8.6px;line-height:11px;color:#d0d0d0;transform:scaleY(1.25);">c76</div>
<div class="t" style="left:2900.8px;top:1236.1px;font-size:8.6px;line-height:11px;color:#d0d0d0;transform:scaleY(1.25);">c77</div>
<div class="t" style="left:2900.8px;top:1356.1px;font-size:8.6px;line-height:11px;color:#d0d0d0;transform:scaleY(1.25);">c77</div>
<div class="t" style="left:2924.8px;top:1236.1px;font-size:8.6px;line-height:11px;color:#d0d0d0;transform:scaleY(1.25);">c78</div>
<div class="t" style="left:2924.8px;top:1356.1px;font-size:8.6px;line-height:11px;color:#d0d0d0;transform:scaleY(1.25);">c78</div>
<div class="t" style="left:2948.8px;top:1236.1px;font-size:8.6px;line-height:11px;color:#d0d0d0;transform:scaleY(1.25);">c79</div>
<div class="t" style="left:2948.8px;top:1356.1px;font-size:8.6px;line-height:11px;color:#d0d0d0;transform:scaleY(1.25);">c79</div>
<svg style="left:1092px;top:1205px;" width="1890" height="170" viewBox="0 0 1890 170"><rect x="27" y="41" width="22" height="19" fill="#0955a4"/><rect x="27" y="62" width="22" height="19" fill="#0955a4"/><rect x="50" y="41" width="22" height="19" fill="#808080"/><rect x="50" y="62" width="22" height="19" fill="#808080"/><rect x="73" y="41" width="22" height="19" fill="#0955a4"/><rect x="73" y="62" width="22" height="19" fill="#0955a4"/><rect x="96" y="41" width="22" height="19" fill="#808080"/><rect x="96" y="62" width="22" height="19" fill="#808080"/><rect x="119" y="41" width="22" height="19" fill="#0955a4"/><rect x="119" y="62" width="22" height="19" fill="#0955a4"/><rect x="142" y="41" width="22" height="19" fill="#808080"/><rect x="142" y="62" width="22" height="19" fill="#808080"/><rect x="165" y="41" width="22" height="19" fill="#0955a4"/><rect x="165" y="62" width="22" height="19" fill="#0955a4"/><rect x="188" y="41" width="22" height="19" fill="#808080"/><rect x="188" y="62" width="22" height="19" fill="#808080"/><rect x="211" y="41" width="22" height="19" fill="#0955a4"/><rect x="211" y="62" width="22" height="19" fill="#0955a4"/><rect x="234" y="41" width="22" height="19" fill="#808080"/><rect x="234" y="62" width="22" height="19" fill="#808080"/><rect x="257" y="41" width="22" height="19" fill="#0955a4"/><rect x="257" y="62" width="22" height="19" fill="#0955a4"/><rect x="280" y="41" width="22" height="19" fill="#808080"/><rect x="280" y="62" width="22" height="19" fill="#808080"/><rect x="303" y="41" width="22" height="19" fill="#0955a4"/><rect x="303" y="62" width="22" height="19" fill="#0955a4"/><rect x="326" y="41" width="22" height="19" fill="#808080"/><rect x="326" y="62" width="22" height="19" fill="#808080"/><rect x="349" y="41" width="22" height="19" fill="#0955a4"/><rect x="349" y="62" width="22" height="19" fill="#0955a4"/><rect x="372" y="41" width="22" height="19" fill="#808080"/><rect x="372" y="62" width="22" height="19" fill="#808080"/><rect x="395" y="41" width="22" height="19" fill="#0955a4"/><rect x="395" y="62" width="22" height="19" fill="#0955a4"/><rect x="418" y="41" width="22" height="19" fill="#808080"/><rect x="418" y="62" width="22" height="19" fill="#808080"/><rect x="441" y="41" width="22" height="19" fill="#0955a4"/><rect x="441" y="62" width="22" height="19" fill="#0955a4"/><rect x="464" y="41" width="22" height="19" fill="#808080"/><rect x="464" y="62" width="22" height="19" fill="#808080"/><rect x="487" y="41" width="22" height="19" fill="#0955a4"/><rect x="487" y="62" width="22" height="19" fill="#0955a4"/><rect x="510" y="41" width="22" height="19" fill="#808080"/><rect x="510" y="62" width="22" height="19" fill="#808080"/><rect x="533" y="41" width="22" height="19" fill="#0955a4"/><rect x="533" y="62" width="22" height="19" fill="#0955a4"/><rect x="556" y="41" width="22" height="19" fill="#808080"/><rect x="556" y="62" width="22" height="19" fill="#808080"/><rect x="579" y="41" width="22" height="19" fill="#0955a4"/><rect x="579" y="62" width="22" height="19" fill="#0955a4"/><rect x="602" y="41" width="22" height="19" fill="#808080"/><rect x="602" y="62" width="22" height="19" fill="#808080"/><rect x="625" y="41" width="22" height="19" fill="#0955a4"/><rect x="625" y="62" width="22" height="19" fill="#0955a4"/><rect x="648" y="41" width="22" height="19" fill="#808080"/><rect x="648" y="62" width="22" height="19" fill="#808080"/><rect x="671" y="41" width="22" height="19" fill="#0955a4"/><rect x="671" y="62" width="22" height="19" fill="#0955a4"/><rect x="694" y="41" width="22" height="19" fill="#808080"/><rect x="694" y="62" width="22" height="19" fill="#808080"/><rect x="717" y="41" width="22" height="19" fill="#0955a4"/><rect x="717" y="62" width="22" height="19" fill="#0955a4"/><rect x="740" y="41" width="22" height="19" fill="#808080"/><rect x="740" y="62" width="22" height="19" fill="#808080"/><rect x="763" y="41" width="22" height="19" fill="#0955a4"/><rect x="763" y="62" width="22" height="19" fill="#0955a4"/><rect x="786" y="41" width="22" height="19" fill="#808080"/><rect x="786" y="62" width="22" height="19" fill="#808080"/><rect x="809" y="41" width="22" height="19" fill="#0955a4"/><rect x="809" y="62" width="22" height="19" fill="#0955a4"/><rect x="832" y="41" width="22" height="19" fill="#808080"/><rect x="832" y="62" width="22" height="19" fill="#808080"/><rect x="855" y="41" width="22" height="19" fill="#0955a4"/><rect x="855" y="62" width="22" height="19" fill="#0955a4"/><rect x="878" y="41" width="22" height="19" fill="#808080"/><rect x="878" y="62" width="22" height="19" fill="#808080"/><rect x="901" y="41" width="22" height="19" fill="#0955a4"/><rect x="901" y="62" width="22" height="19" fill="#0955a4"/><rect x="924" y="41" width="22" height="19" fill="#808080"/><rect x="924" y="62" width="22" height="19" fill="#808080"/><rect x="947" y="41" width="22" height="19" fill="#0955a4"/><rect x="947" y="62" width="22" height="19" fill="#0955a4"/><rect x="970" y="41" width="22" height="19" fill="#808080"/><rect x="970" y="62" width="22" height="19" fill="#808080"/><rect x="993" y="41" width="22" height="19" fill="#0955a4"/><rect x="993" y="62" width="22" height="19" fill="#0955a4"/><rect x="1016" y="41" width="22" height="19" fill="#808080"/><rect x="1016" y="62" width="22" height="19" fill="#808080"/><rect x="1039" y="41" width="22" height="19" fill="#0955a4"/><rect x="1039" y="62" width="22" height="19" fill="#0955a4"/><rect x="1062" y="41" width="22" height="19" fill="#808080"/><rect x="1062" y="62" width="22" height="19" fill="#808080"/><rect x="1085" y="41" width="22" height="19" fill="#0955a4"/><rect x="1085" y="62" width="22" height="19" fill="#0955a4"/><rect x="1108" y="41" width="22" height="19" fill="#808080"/><rect x="1108" y="62" width="22" height="19" fill="#808080"/><rect x="1131" y="41" width="22" height="19" fill="#0955a4"/><rect x="1131" y="62" width="22" height="19" fill="#0955a4"/><rect x="1154" y="41" width="22" height="19" fill="#808080"/><rect x="1154" y="62" width="22" height="19" fill="#808080"/><rect x="1177" y="41" width="22" height="19" fill="#0955a4"/><rect x="1177" y="62" width="22" height="19" fill="#0955a4"/><rect x="1200" y="41" width="22" height="19" fill="#808080"/><rect x="1200" y="62" width="22" height="19" fill="#808080"/><rect x="1223" y="41" width="22" height="19" fill="#0955a4"/><rect x="1223" y="62" width="22" height="19" fill="#0955a4"/><rect x="1246" y="41" width="22" height="19" fill="#808080"/><rect x="1246" y="62" width="22" height="19" fill="#808080"/><rect x="1269" y="41" width="22" height="19" fill="#0955a4"/><rect x="1269" y="62" width="22" height="19" fill="#0955a4"/><rect x="1292" y="41" width="22" height="19" fill="#808080"/><rect x="1292" y="62" width="22" height="19" fill="#808080"/><rect x="1315" y="41" width="22" height="19" fill="#0955a4"/><rect x="1315" y="62" width="22" height="19" fill="#0955a4"/><rect x="1338" y="41" width="22" height="19" fill="#808080"/><rect x="1338" y="62" width="22" height="19" fill="#808080"/><rect x="1361" y="41" width="22" height="19" fill="#0955a4"/><rect x="1361" y="62" width="22" height="19" fill="#0955a4"/><rect x="1384" y="41" width="22" height="19" fill="#808080"/><rect x="1384" y="62" width="22" height="19" fill="#808080"/><rect x="1407" y="41" width="22" height="19" fill="#0955a4"/><rect x="1407" y="62" width="22" height="19" fill="#0955a4"/><rect x="1430" y="41" width="22" height="19" fill="#808080"/><rect x="1430" y="62" width="22" height="19" fill="#808080"/><rect x="1453" y="41" width="22" height="19" fill="#0955a4"/><rect x="1453" y="62" width="22" height="19" fill="#0955a4"/><rect x="1476" y="41" width="22" height="19" fill="#808080"/><rect x="1476" y="62" width="22" height="19" fill="#808080"/><rect x="1499" y="41" width="22" height="19" fill="#0955a4"/><rect x="1499" y="62" width="22" height="19" fill="#0955a4"/><rect x="1522" y="41" width="22" height="19" fill="#808080"/><rect x="1522" y="62" width="22" height="19" fill="#808080"/><rect x="1545" y="41" width="22" height="19" fill="#0955a4"/><rect x="1545" y="62" width="22" height="19" fill="#0955a4"/><rect x="1568" y="41" width="22" height="19" fill="#808080"/><rect x="1568" y="62" width="22" height="19" fill="#808080"/><rect x="1591" y="41" width="22" height="19" fill="#0955a4"/><rect x="1591" y="62" width="22" height="19" fill="#0955a4"/><rect x="1614" y="41" width="22" height="19" fill="#808080"/><rect x="1614" y="62" width="22" height="19" fill="#808080"/><rect x="1637" y="41" width="23" height="19" fill="#0955a4"/><rect x="1637" y="62" width="23" height="19" fill="#e8503e"/><rect x="1661" y="41" width="23" height="19" fill="#808080"/><rect x="1661" y="62" width="23" height="19" fill="#e8503e"/><rect x="1685" y="41" width="23" height="19" fill="#0955a4"/><rect x="1685" y="62" width="23" height="19" fill="#0955a4"/><rect x="1709" y="41" width="23" height="19" fill="#808080"/><rect x="1709" y="62" width="23" height="19" fill="#808080"/><rect x="1733" y="41" width="23" height="19" fill="#0955a4"/><rect x="1733" y="62" width="23" height="19" fill="#0955a4"/><rect x="1757" y="41" width="23" height="19" fill="#e8503e"/><rect x="1757" y="62" width="23" height="19" fill="#e8503e"/><rect x="1781" y="41" width="23" height="19" fill="#0955a4"/><rect x="1781" y="62" width="23" height="19" fill="#0955a4"/><rect x="1805" y="41" width="23" height="19" fill="#808080"/><rect x="1805" y="62" width="23" height="19" fill="#808080"/><rect x="1829" y="41" width="23" height="19" fill="#0955a4"/><rect x="1829" y="62" width="23" height="19" fill="#0955a4"/><rect x="1853" y="41" width="23" height="19" fill="#808080"/><rect x="1853" y="62" width="23" height="19" fill="#808080"/><rect x="27" y="107" width="45" height="19" fill="#0955a4"/><rect x="27" y="128" width="45" height="19" fill="#0955a4"/><rect x="73" y="107" width="45" height="19" fill="#0955a4"/><rect x="73" y="128" width="45" height="19" fill="#0955a4"/><rect x="119" y="107" width="45" height="19" fill="#0955a4"/><rect x="119" y="128" width="45" height="19" fill="#0955a4"/><rect x="165" y="107" width="45" height="19" fill="#0955a4"/><rect x="165" y="128" width="45" height="19" fill="#0955a4"/><rect x="211" y="107" width="45" height="19" fill="#0955a4"/><rect x="211" y="128" width="45" height="19" fill="#0955a4"/><rect x="257" y="107" width="45" height="19" fill="#0955a4"/><rect x="257" y="128" width="45" height="19" fill="#0955a4"/><rect x="303" y="107" width="45" height="19" fill="#0955a4"/><rect x="303" y="128" width="45" height="19" fill="#0955a4"/><rect x="349" y="107" width="45" height="19" fill="#0955a4"/><rect x="349" y="128" width="45" height="19" fill="#0955a4"/><rect x="395" y="107" width="45" height="19" fill="#0955a4"/><rect x="395" y="128" width="45" height="19" fill="#0955a4"/><rect x="441" y="107" width="45" height="19" fill="#0955a4"/><rect x="441" y="128" width="45" height="19" fill="#0955a4"/><rect x="487" y="107" width="45" height="19" fill="#0955a4"/><rect x="487" y="128" width="45" height="19" fill="#0955a4"/><rect x="533" y="107" width="45" height="19" fill="#0955a4"/><rect x="533" y="128" width="45" height="19" fill="#0955a4"/><rect x="579" y="107" width="45" height="19" fill="#0955a4"/><rect x="579" y="128" width="45" height="19" fill="#0955a4"/><rect x="625" y="107" width="45" height="19" fill="#0955a4"/><rect x="625" y="128" width="45" height="19" fill="#0955a4"/><rect x="671" y="107" width="45" height="19" fill="#0955a4"/><rect x="671" y="128" width="45" height="19" fill="#0955a4"/><rect x="717" y="107" width="45" height="19" fill="#0955a4"/><rect x="717" y="128" width="45" height="19" fill="#0955a4"/><rect x="763" y="107" width="45" height="19" fill="#0955a4"/><rect x="763" y="128" width="45" height="19" fill="#0955a4"/><rect x="809" y="107" width="45" height="19" fill="#0955a4"/><rect x="809" y="128" width="45" height="19" fill="#0955a4"/><rect x="855" y="107" width="45" height="19" fill="#0955a4"/><rect x="855" y="128" width="45" height="19" fill="#0955a4"/><rect x="901" y="107" width="45" height="19" fill="#0955a4"/><rect x="901" y="128" width="45" height="19" fill="#0955a4"/><rect x="947" y="107" width="45" height="19" fill="#0955a4"/><rect x="947" y="128" width="45" height="19" fill="#0955a4"/><rect x="993" y="107" width="45" height="19" fill="#0955a4"/><rect x="993" y="128" width="45" height="19" fill="#0955a4"/><rect x="1039" y="107" width="45" height="19" fill="#0955a4"/><rect x="1039" y="128" width="45" height="19" fill="#0955a4"/><rect x="1085" y="107" width="45" height="19" fill="#0955a4"/><rect x="1085" y="128" width="45" height="19" fill="#0955a4"/><rect x="1131" y="107" width="45" height="19" fill="#0955a4"/><rect x="1131" y="128" width="45" height="19" fill="#0955a4"/><rect x="1177" y="107" width="45" height="19" fill="#0955a4"/><rect x="1177" y="128" width="45" height="19" fill="#0955a4"/><rect x="1223" y="107" width="45" height="19" fill="#0955a4"/><rect x="1223" y="128" width="45" height="19" fill="#0955a4"/><rect x="1269" y="107" width="45" height="19" fill="#0955a4"/><rect x="1269" y="128" width="45" height="19" fill="#0955a4"/><rect x="1315" y="107" width="45" height="19" fill="#0955a4"/><rect x="1315" y="128" width="45" height="19" fill="#0955a4"/><rect x="1361" y="107" width="45" height="19" fill="#0955a4"/><rect x="1361" y="128" width="45" height="19" fill="#0955a4"/><rect x="1407" y="107" width="45" height="19" fill="#0955a4"/><rect x="1407" y="128" width="45" height="19" fill="#0955a4"/><rect x="1453" y="107" width="45" height="19" fill="#0955a4"/><rect x="1453" y="128" width="45" height="19" fill="#0955a4"/><rect x="1499" y="107" width="45" height="19" fill="#0955a4"/><rect x="1499" y="128" width="45" height="19" fill="#0955a4"/><rect x="1545" y="107" width="45" height="19" fill="#0955a4"/><rect x="1545" y="128" width="45" height="19" fill="#0955a4"/><rect x="1591" y="107" width="45" height="19" fill="#0955a4"/><rect x="1591" y="128" width="45" height="19" fill="#0955a4"/><rect x="1637" y="107" width="47" height="19" fill="#0955a4"/><rect x="1637" y="128" width="47" height="19" fill="#e8503e"/><rect x="1685" y="107" width="47" height="19" fill="#0955a4"/><rect x="1685" y="128" width="47" height="19" fill="#0955a4"/><rect x="1733" y="107" width="47" height="19" fill="#0955a4"/><rect x="1733" y="128" width="47" height="19" fill="#0955a4"/><rect x="1781" y="107" width="47" height="19" fill="#0955a4"/><rect x="1781" y="128" width="47" height="19" fill="#0955a4"/><rect x="1829" y="107" width="47" height="19" fill="#0955a4"/><rect x="1829" y="128" width="47" height="19" fill="#0955a4"/></svg>
<div class="t" style="left:1104.8px;top:1252.4px;font-size:8.6px;line-height:11px;color:#d0d0d0;transform:scaleY(1.25);">h0</div>
<div class="t" style="left:1104.8px;top:1272.9px;font-size:8.6px;line-height:11px;color:#d0d0d0;transform:scaleY(1.25);">h1</div>
<div class="t" style="left:1104.8px;top:1318.9px;font-size:8.6px;line-height:11px;color:#d0d0d0;transform:scaleY(1.25);">h0</div>
<div class="t" style="left:1104.8px;top:1339.9px;font-size:8.6px;line-height:11px;color:#d0d0d0;transform:scaleY(1.25);">h1</div>
<div class="r" style="left:1092.5px;top:67.0px;width:574.0px;height:922.0px;background:#111111;"></div>
<div class="r" style="left:1097.5px;top:44.0px;width:119.0px;height:20.0px;background:#284a78;border-radius:5px 5px 0 0;"></div>
<div class="t" style="left:1123.5px;top:48.6px;color:#e6e6e6;">Hex editor</div>
<svg style="left:1103.5px;top:47px;" width="14" height="14" viewBox="0 0 14 14"><path d="M1.5 0.5h8l3 3v10h-11z" stroke="#c8d4e8" stroke-width="1.1" fill="none"/><path d="M5 3v8M8 3v8" stroke="#c8d4e8" stroke-width="1.5"/></svg>
<svg style="left:1200px;top:49px;" width="10" height="10" viewBox="0 0 10 10"><path d="M0 0L10 10M10 0L0 10" stroke="#e0e0e0" stroke-width="1.3" fill="none"/></svg>
<div class="r" style="left:1639.0px;top:67.0px;width:27.0px;height:868.0px;background:#0b0b0b;"></div>
<div class="r" style="left:1645.0px;top:824.0px;width:10.0px;height:12.0px;background:#5a5a5a;border-radius:5px;"></div>
<div class="t" style="left:1101.4px;top:75.6px;">Address</div>
<div class="t" style="left:1177.0px;top:75.6px;">00 01 02 03 04 05 06 07  08 09 0A 0B 0C 0D 0E 0F</div>
<div class="t" style="left:1525.3px;top:75.6px;">ASCII</div>
<div class="r" style="left:1174.3px;top:149.4px;width:343.3px;height:782.4px;background:#3c3f5e;"></div>
<div class="r" style="left:1524.7px;top:149.4px;width:112.9px;height:782.4px;background:#3c3f5e;"></div>
<div class="r" style="left:1174.3px;top:149.4px;width:343.3px;height:1.0px;background:#d8d8e8;"></div>
<div class="r" style="left:1524.7px;top:149.4px;width:112.9px;height:1.0px;background:#d8d8e8;"></div>
<div class="r" style="left:1174.3px;top:149.4px;width:1.0px;height:782.4px;background:#d8d8e8;"></div>
<div class="r" style="left:1516.6px;top:149.4px;width:1.0px;height:782.4px;background:#d8d8e8;"></div>
<div class="r" style="left:1524.7px;top:149.4px;width:1.0px;height:782.4px;background:#d8d8e8;"></div>
<div class="r" style="left:1636.6px;top:149.4px;width:1.0px;height:782.4px;background:#d8d8e8;"></div>
<div class="t" style="left:1101.4px;top:103.3px;">0004FDD0:</div>
<div class="t" style="left:1177px;top:103.3px;color:#e0e0e0"><i>00</i> <i>00</i> <i>00</i> <i>00</i> <i>00</i> <i>00</i> 82 53  5D 15 90 0D 0D 27 <i>00</i> <i>00</i></div>
<div class="t" style="left:1525.3px;top:103.3px;color:#e0e0e0"><i>.......</i>S]<i>....</i>'<i>..</i></div>
<div class="t" style="left:1101.4px;top:119.3px;">0004FDE0:</div>
<div class="t" style="left:1177px;top:119.3px;color:#e0e0e0">45 58 45 32 42 49 4E 20  45 58 45 20 <i>00</i> <i>00</i> <i>00</i> <i>00</i></div>
<div class="t" style="left:1525.3px;top:119.3px;color:#e0e0e0">EXE2BIN EXE <i>....</i></div>
<div class="t" style="left:1101.4px;top:135.3px;">0004FDF0:</div>
<div class="t" style="left:1177px;top:135.3px;color:#e0e0e0"><i>00</i> <i>00</i> <i>00</i> <i>00</i> <i>00</i> <i>00</i> DA 62  35 15 95 0D 57 08 <i>00</i> <i>00</i></div>
<div class="t" style="left:1525.3px;top:135.3px;color:#e0e0e0"><i>.......</i>b5<i>...</i>W<i>...</i></div>
<div class="t" style="left:1101.4px;top:151.3px;">0004FE00:</div>
<div class="t" style="left:1177px;top:151.3px;color:#e0e0e0">AB 82 3E 14 D0 3F 7B 29  05 33 7C 25 B9 B4 09 94</div>
<div class="t" style="left:1525.3px;top:151.3px;color:#e0e0e0"><i>..</i>&gt;<i>..</i>?{)<i>.</i>3|%<i>....</i></div>
<div class="t" style="left:1101.4px;top:167.3px;">0004FE10:</div>
<div class="t" style="left:1177px;top:167.3px;color:#e0e0e0">4B 15 6D B2 26 69 D1 69  8A 2D 08 AD 72 2F 04 14</div>
<div class="t" style="left:1525.3px;top:167.3px;color:#e0e0e0">K<i>.</i>m<i>.</i>&amp;i<i>.</i>i<i>.</i>-<i>..</i>r/<i>..</i></div>
<div class="t" style="left:1101.4px;top:183.3px;">0004FE20:</div>
<div class="t" style="left:1177px;top:183.3px;color:#e0e0e0">0C B2 E9 02 80 15 80 9F  48 86 F2 E0 20 99 46 F2</div>
<div class="t" style="left:1525.3px;top:183.3px;color:#e0e0e0"><i>........</i>H<i>...</i> <i>.</i>F<i>.</i></div>
<div class="t" style="left:1101.4px;top:199.3px;">0004FE30:</div>
<div class="t" style="left:1177px;top:199.3px;color:#e0e0e0">62 C0 4B 0E 8F 21 B2 60  01 5F 38 1B 76 04 14 7A</div>
<div class="t" style="left:1525.3px;top:199.3px;color:#e0e0e0">b<i>.</i>K<i>..</i>!<i>.</i>`<i>.</i>_8<i>.</i>v<i>..</i>z</div>
<div class="t" style="left:1101.4px;top:215.3px;">0004FE40:</div>
<div class="t" style="left:1177px;top:215.3px;color:#e0e0e0">AF BC 03 2E B6 B0 0A 06  C8 A7 69 0A 82 B3 3D 07</div>
<div class="t" style="left:1525.3px;top:215.3px;color:#e0e0e0"><i>...</i>.<i>......</i>i<i>...</i>=<i>.</i></div>
<div class="t" style="left:1101.4px;top:231.3px;">0004FE50:</div>
<div class="t" style="left:1177px;top:231.3px;color:#e0e0e0">2F 38 D4 43 0C 13 C7 1B  11 32 61 5D 02 84 11 92</div>
<div class="t" style="left:1525.3px;top:231.3px;color:#e0e0e0">/8<i>.</i>C<i>.....</i>2a]<i>....</i></div>
<div class="t" style="left:1101.4px;top:247.3px;">0004FE60:</div>
<div class="t" style="left:1177px;top:247.3px;color:#e0e0e0">07 FA 92 C3 02 99 2A A7  E1 7E 07 32 3F DD 10 B8</div>
<div class="t" style="left:1525.3px;top:247.3px;color:#e0e0e0"><i>......</i>*<i>..</i>~<i>.</i>2?<i>...</i></div>
<div class="t" style="left:1101.4px;top:263.3px;">0004FE70:</div>
<div class="t" style="left:1177px;top:263.3px;color:#e0e0e0">C5 17 08 B8 BA CB 4A 14  7F 14 8A 52 65 B6 15 5B</div>
<div class="t" style="left:1525.3px;top:263.3px;color:#e0e0e0"><i>......</i>J<i>....</i>Re<i>..</i>[</div>
<div class="t" style="left:1101.4px;top:279.3px;">0004FE80:</div>
<div class="t" style="left:1177px;top:279.3px;color:#e0e0e0">B3 35 56 08 AB 13 E7 CB  13 50 15 42 D1 11 CA 8F</div>
<div class="t" style="left:1525.3px;top:279.3px;color:#e0e0e0"><i>.</i>5V<i>......</i>P<i>.</i>B<i>....</i></div>
<div class="t" style="left:1101.4px;top:295.3px;">0004FE90:</div>
<div class="t" style="left:1177px;top:295.3px;color:#e0e0e0">3D 46 BA B9 A7 85 1B A3  79 08 7A 08 04 52 39 2D</div>
<div class="t" style="left:1525.3px;top:295.3px;color:#e0e0e0">=F<i>......</i>y<i>.</i>z<i>..</i>R9-</div>
<div class="t" style="left:1101.4px;top:311.3px;">0004FEA0:</div>
<div class="t" style="left:1177px;top:311.3px;color:#e0e0e0">E0 B0 AB 4B 80 4A DF A5  01 0E 07 75 26 57 60 09</div>
<div class="t" style="left:1525.3px;top:311.3px;color:#e0e0e0"><i>...</i>K<i>.</i>J<i>.....</i>u&amp;W`<i>.</i></div>
<div class="t" style="left:1101.4px;top:327.3px;">0004FEB0:</div>
<div class="t" style="left:1177px;top:327.3px;color:#e0e0e0">23 24 CD 0B ED A2 1A 4B  05 2B 92 07 D9 0E 9B 1B</div>
<div class="t" style="left:1525.3px;top:327.3px;color:#e0e0e0">#$<i>.....</i>K<i>.</i>+<i>......</i></div>
<div class="t" style="left:1101.4px;top:343.3px;">0004FEC0:</div>
<div class="t" style="left:1177px;top:343.3px;color:#e0e0e0">E9 B2 20 33 FA 1C 0A 86  1C BC 07 49 8A CB 33 FE</div>
<div class="t" style="left:1525.3px;top:343.3px;color:#e0e0e0"><i>..</i> 3<i>.......</i>I<i>..</i>3<i>.</i></div>
<div class="t" style="left:1101.4px;top:359.3px;">0004FED0:</div>
<div class="t" style="left:1177px;top:359.3px;color:#e0e0e0">CB E0 74 17 72 18 19 02  3D 59 EB E0 18 14 A5 B3</div>
<div class="t" style="left:1525.3px;top:359.3px;color:#e0e0e0"><i>..</i>t<i>.</i>r<i>...</i>=Y<i>......</i></div>
<div class="t" style="left:1101.4px;top:375.3px;">0004FEE0:</div>
<div class="t" style="left:1177px;top:375.3px;color:#e0e0e0">47 0F 24 76 10 32 F6 9C  4E 28 68 40 3D 2F AE 32</div>
<div class="t" style="left:1525.3px;top:375.3px;color:#e0e0e0">G<i>.</i>$v<i>.</i>2<i>..</i>N(h@=/<i>.</i>2</div>
<div class="t" style="left:1101.4px;top:391.3px;">0004FEF0:</div>
<div class="t" style="left:1177px;top:391.3px;color:#e0e0e0">1E FC 31 95 A9 29 D6 29  4F 29 11 <i>00</i> 1F 22 03 03</div>
<div class="t" style="left:1525.3px;top:391.3px;color:#e0e0e0"><i>..</i>1<i>..</i>)<i>.</i>)O)<i>...</i>"<i>..</i></div>
<div class="t" style="left:1101.4px;top:407.3px;">0004FF00:</div>
<div class="t" style="left:1177px;top:407.3px;color:#e0e0e0">E4 5E F0 E0 90 0F 06 78  9C 21 44 8E 2F 03 E7 0E</div>
<div class="t" style="left:1525.3px;top:407.3px;color:#e0e0e0"><i>.</i>^<i>.....</i>x<i>.</i>!D<i>.</i>/<i>...</i></div>
<div class="t" style="left:1101.4px;top:423.3px;">0004FF10:</div>
<div class="t" style="left:1177px;top:423.3px;color:#e0e0e0">5E 2F B1 84 20 10 15 5E  14 18 55 28 E0 73 0B 0E</div>
<div class="t" style="left:1525.3px;top:423.3px;color:#e0e0e0">^/<i>..</i> <i>..</i>^<i>..</i>U(<i>.</i>s<i>..</i></div>
<div class="t" style="left:1101.4px;top:439.3px;">0004FF20:</div>
<div class="t" style="left:1177px;top:439.3px;color:#e0e0e0">E5 94 2B 15 03 5E 05 0A  68 07 48 0E F0 11 F6 01</div>
<div class="t" style="left:1525.3px;top:439.3px;color:#e0e0e0"><i>..</i>+<i>..</i>^<i>..</i>h<i>.</i>H<i>.....</i></div>
<div class="t" style="left:1101.4px;top:455.3px;">0004FF30:</div>
<div class="t" style="left:1177px;top:455.3px;color:#e0e0e0">2C 04 <i>00</i> 06 A0 FC 8B 35  55 7D 04 C0 02 2B 40 4A</div>
<div class="t" style="left:1525.3px;top:455.3px;color:#e0e0e0">,<i>......</i>5U}<i>...</i>+@J</div>
<div class="t" style="left:1101.4px;top:471.3px;">0004FF40:</div>
<div class="t" style="left:1177px;top:471.3px;color:#e0e0e0">73 09 31 F8 03 62 18 84  57 48 8D 30 A4 C9 03 89</div>
<div class="t" style="left:1525.3px;top:471.3px;color:#e0e0e0">s<i>.</i>1<i>..</i>b<i>..</i>WH<i>.</i>0<i>....</i></div>
<div class="t" style="left:1101.4px;top:487.3px;">0004FF50:</div>
<div class="t" style="left:1177px;top:487.3px;color:#e0e0e0">34 88 <i>00</i> 62 38 2B 71 34  89 06 39 10 1A 16 5A A7</div>
<div class="t" style="left:1525.3px;top:487.3px;color:#e0e0e0">4<i>..</i>b8+q4<i>..</i>9<i>...</i>Z<i>.</i></div>
<div class="t" style="left:1101.4px;top:503.3px;">0004FF60:</div>
<div class="t" style="left:1177px;top:503.3px;color:#e0e0e0">79 24 4D 40 E1 14 0B 82  3C 07 EE DC 93 60 16 CD</div>
<div class="t" style="left:1525.3px;top:503.3px;color:#e0e0e0">y$M@<i>....</i>&lt;<i>....</i>`<i>..</i></div>
<div class="t" style="left:1101.4px;top:519.3px;">0004FF70:</div>
<div class="t" style="left:1177px;top:519.3px;color:#e0e0e0">0E 07 EA C3 8B DA 58 B8  4B F3 04 23 C5 E7 B6 83</div>
<div class="t" style="left:1525.3px;top:519.3px;color:#e0e0e0"><i>......</i>X<i>.</i>K<i>..</i>#<i>....</i></div>
<div class="t" style="left:1101.4px;top:535.3px;">0004FF80:</div>
<div class="t" style="left:1177px;top:535.3px;color:#e0e0e0">77 F4 51 <i>00</i> 7D 79 B8 39  22 D9 05 29 42 02 3C 38</div>
<div class="t" style="left:1525.3px;top:535.3px;color:#e0e0e0">w<i>.</i>Q<i>.</i>}y<i>.</i>9"<i>..</i>)B<i>.</i>&lt;8</div>
<div class="t" style="left:1101.4px;top:551.3px;">0004FF90:</div>
<div class="t" style="left:1177px;top:551.3px;color:#e0e0e0">1A 07 0F 79 35 90 EB A0  4B 1D 29 <i>00</i> 23 02 11 07</div>
<div class="t" style="left:1525.3px;top:551.3px;color:#e0e0e0"><i>...</i>y5<i>...</i>K<i>.</i>)<i>.</i>#<i>...</i></div>
<div class="t" style="left:1101.4px;top:567.3px;">0004FFA0:</div>
<div class="t" style="left:1177px;top:567.3px;color:#e0e0e0">02 53 04 6C DB 24 01 32  0C 4A 06 4A 66 33 06 42</div>
<div class="t" style="left:1525.3px;top:567.3px;color:#e0e0e0"><i>.</i>S<i>.</i>l<i>.</i>$<i>.</i>2<i>.</i>J<i>.</i>Jf3<i>.</i>B</div>
<div class="t" style="left:1101.4px;top:583.3px;">0004FFB0:</div>
<div class="t" style="left:1177px;top:583.3px;color:#e0e0e0">05 5A EA F5 11 86 5A A7  CB 0A 05 E8 A0 91 52 66</div>
<div class="t" style="left:1525.3px;top:583.3px;color:#e0e0e0"><i>.</i>Z<i>....</i>Z<i>.......</i>Rf</div>
<div class="t" style="left:1101.4px;top:599.3px;">0004FFC0:</div>
<div class="t" style="left:1177px;top:599.3px;color:#e0e0e0">CE 22 07 9C 0E 49 A5 15  99 0E 23 0E 8E 94 52 06</div>
<div class="t" style="left:1525.3px;top:599.3px;color:#e0e0e0"><i>.</i>"<i>...</i>I<i>....</i>#<i>...</i>R<i>.</i></div>
<div class="t" style="left:1101.4px;top:615.3px;">0004FFD0:</div>
<div class="t" style="left:1177px;top:615.3px;color:#e0e0e0">3E 06 8E 06 28 0A 24 06  8E 06 38 08 E1 7D F9 1A</div>
<div class="t" style="left:1525.3px;top:615.3px;color:#e0e0e0">&gt;<i>...</i>(<i>.</i>$<i>...</i>8<i>..</i>}<i>..</i></div>
<div class="t" style="left:1101.4px;top:631.3px;">0004FFE0:</div>
<div class="t" style="left:1177px;top:631.3px;color:#e0e0e0">35 E7 69 11 F3 BC 09 9B  B2 4D AF 4D F8 C6 EC C8</div>
<div class="t" style="left:1525.3px;top:631.3px;color:#e0e0e0">5<i>.</i>i<i>......</i>M<i>.</i>M<i>....</i></div>
<div class="t" style="left:1101.4px;top:647.3px;">0004FFF0:</div>
<div class="t" style="left:1177px;top:647.3px;color:#e0e0e0">0A 13 0A B4 0C 6D 97 13  <i>00</i> 62 54 54 BE 20 01 10</div>
<div class="t" style="left:1525.3px;top:647.3px;color:#e0e0e0"><i>.....</i>m<i>...</i>bTT<i>.</i> <i>..</i></div>
<div class="t" style="left:1101.4px;top:663.3px;">00050000:</div>
<div class="t" style="left:1177px;top:663.3px;color:#e0e0e0">24 0A 0D 0A 0D 0A 0D 0A  20 20 20 20 20 20 20 20</div>
<div class="t" style="left:1525.3px;top:663.3px;color:#e0e0e0">$<i>.......</i>        </div>
<div class="t" style="left:1101.4px;top:679.3px;">00050010:</div>
<div class="t" style="left:1177px;top:679.3px;color:#e0e0e0">20 20 20 43 41 54 20 28  43 41 54 61 6C 6F 67 29</div>
<div class="t" style="left:1525.3px;top:679.3px;color:#e0e0e0">   CAT (CATalog)</div>
<div class="t" style="left:1101.4px;top:695.3px;">00050020:</div>
<div class="t" style="left:1177px;top:695.3px;color:#e0e0e0">20 69 73 20 73 69 6D 69  6C 61 72 20 74 6F 20 44</div>
<div class="t" style="left:1525.3px;top:695.3px;color:#e0e0e0"> is similar to D</div>
<div class="t" style="left:1101.4px;top:711.3px;">00050030:</div>
<div class="t" style="left:1177px;top:711.3px;color:#e0e0e0">4F 53 27 73 20 44 49 52  20 63 6F 6D 6D 61 6E 64</div>
<div class="t" style="left:1525.3px;top:711.3px;color:#e0e0e0">OS's DIR command</div>
<div class="t" style="left:1101.4px;top:727.3px;">00050040:</div>
<div class="t" style="left:1177px;top:727.3px;color:#e0e0e0">2C 20 69 2E 65 2E 2C 20  69 74 20 64 69 73 70 6C</div>
<div class="t" style="left:1525.3px;top:727.3px;color:#e0e0e0">, i.e., it displ</div>
<div class="t" style="left:1101.4px;top:743.3px;">00050050:</div>
<div class="t" style="left:1177px;top:743.3px;color:#e0e0e0">61 79 73 0D 0A 20 20 20  20 20 20 61 20 6C 69 73</div>
<div class="t" style="left:1525.3px;top:743.3px;color:#e0e0e0">ays<i>..</i>      a lis</div>
<div class="t" style="left:1101.4px;top:759.3px;">00050060:</div>
<div class="t" style="left:1177px;top:759.3px;color:#e0e0e0">74 20 6F 66 20 74 68 65  20 64 69 73 6B 27 73 20</div>
<div class="t" style="left:1525.3px;top:759.3px;color:#e0e0e0">t of the disk's </div>
<div class="t" style="left:1101.4px;top:775.3px;">00050070:</div>
<div class="t" style="left:1177px;top:775.3px;color:#e0e0e0">66 69 6C 65 73 2E 20 20  54 68 65 20 64 69 66 66</div>
<div class="t" style="left:1525.3px;top:775.3px;color:#e0e0e0">files.  The diff</div>
<div class="t" style="left:1101.4px;top:791.3px;">00050080:</div>
<div class="t" style="left:1177px;top:791.3px;color:#e0e0e0">65 72 65 6E 63 65 73 20  61 72 65 20 61 73 20 66</div>
<div class="t" style="left:1525.3px;top:791.3px;color:#e0e0e0">erences are as f</div>
<div class="t" style="left:1101.4px;top:807.3px;">00050090:</div>
<div class="t" style="left:1177px;top:807.3px;color:#e0e0e0">6F 6C 6C 6F 77 73 3A 0D  0A 0D 0A 20 20 20 20 20</div>
<div class="t" style="left:1525.3px;top:807.3px;color:#e0e0e0">ollows:<i>....</i>     </div>
<div class="t" style="left:1101.4px;top:823.3px;">000500A0:</div>
<div class="t" style="left:1177px;top:823.3px;color:#e0e0e0">20 20 20 20 20 20 43 41  54 20 64 69 73 70 6C 61</div>
<div class="t" style="left:1525.3px;top:823.3px;color:#e0e0e0">      CAT displa</div>
<div class="t" style="left:1101.4px;top:839.3px;">000500B0:</div>
<div class="t" style="left:1177px;top:839.3px;color:#e0e0e0">79 73 20 74 68 65 20 66  69 6C 65 73 20 69 6E 20</div>
<div class="t" style="left:1525.3px;top:839.3px;color:#e0e0e0">ys the files in </div>
<div class="t" style="left:1101.4px;top:855.3px;">000500C0:</div>
<div class="t" style="left:1177px;top:855.3px;color:#e0e0e0">61 20 6D 6F 72 65 20 61  65 73 74 68 65 74 69 63</div>
<div class="t" style="left:1525.3px;top:855.3px;color:#e0e0e0">a more aesthetic</div>
<div class="t" style="left:1101.4px;top:871.3px;">000500D0:</div>
<div class="t" style="left:1177px;top:871.3px;color:#e0e0e0">61 6C 6C 79 20 70 6C 65  61 73 69 6E 67 20 6D 61</div>
<div class="t" style="left:1525.3px;top:871.3px;color:#e0e0e0">ally pleasing ma</div>
<div class="t" style="left:1101.4px;top:887.3px;">000500E0:</div>
<div class="t" style="left:1177px;top:887.3px;color:#e0e0e0">6E 6E 65 72 2E 0D 0A 0D  0A 20 20 20 20 20 20 20</div>
<div class="t" style="left:1525.3px;top:887.3px;color:#e0e0e0">nner.<i>....</i>       </div>
<div class="t" style="left:1101.4px;top:903.3px;">000500F0:</div>
<div class="t" style="left:1177px;top:903.3px;color:#e0e0e0">20 20 20 43 41 54 20 77  69 6C 6C 20 61 75 74 6F</div>
<div class="t" style="left:1525.3px;top:903.3px;color:#e0e0e0">   CAT will auto</div>
<div class="t" style="left:1101.4px;top:919.3px;">00050100:</div>
<div class="t" style="left:1177px;top:919.3px;color:#e0e0e0">6D 61 74 69 63 61 6C 6C  79 20 70 61 75 73 65 20</div>
<div class="t" style="left:1525.3px;top:919.3px;color:#e0e0e0">matically pause </div>
<div class="r" style="left:1101.4px;top:936.5px;width:556.5px;height:47.0px;background:#0f0f0f;border:1px solid #3a3a3a;"></div>
<div class="r" style="left:1110.8px;top:946.0px;width:23.0px;height:21.5px;background:#141414;border:1px solid #2f6fd0;"></div>
<div class="t" style="left:1116.9px;top:952.8px;font-size:9px;line-height:12px;color:#d0d0d0;">Aa</div>
<div class="r" style="left:1141.6px;top:946.0px;width:23.0px;height:21.5px;background:#141414;border:1px solid #2f6fd0;"></div>
<svg style="left:1147.6px;top:948.5px;" width="12" height="16" viewBox="0 0 12 16"><circle cx="6" cy="6" r="4.2" fill="#f0f0f0"/><rect x="4" y="10" width="4" height="3" fill="#d0d0d0"/></svg>
<div class="r" style="left:1172.9px;top:946.0px;width:23.0px;height:21.5px;background:#141414;border:1px solid #2f6fd0;"></div>
<div class="t" style="left:1176.8px;top:953.4px;font-size:8.5px;line-height:11px;color:#d0d0d0;">abc</div>
<div class="r" style="left:1196.5px;top:946.0px;width:23.0px;height:21.5px;background:#141414;border:1px solid #3a3a3a;"></div>
<svg style="left:1202.5px;top:949px;" width="12" height="15" viewBox="0 0 12 15"><path d="M6 1.5h-1.5a3 3 0 0 0 0 6h1.5z" fill="#d8d8d8"/><path d="M6 1.5v12M8.5 1.5v12M5 1.5h5" stroke="#d8d8d8" stroke-width="1.2" fill="none"/></svg>
<div class="r" style="left:1221.0px;top:946.0px;width:23.0px;height:21.5px;background:#141414;border:1px solid #2f6fd0;"></div>
<svg style="left:1226px;top:950px;" width="14" height="13" viewBox="0 0 14 13"><path d="M1.5 1.5h11v8h-6l-2.5 2.5v-2.5h-2.5z" stroke="#b8a888" stroke-width="1" fill="none"/><path d="M5.5 4l-1.5 1.5 1.5 1.5M8.5 4l1.5 1.5-1.5 1.5" stroke="#d0c8b0" stroke-width="0.9" fill="none"/></svg>
<div class="r" style="left:1245.0px;top:946.0px;width:23.0px;height:21.5px;background:#141414;border:1px solid #3a3a3a;"></div>
<svg style="left:1250px;top:950px;" width="14" height="13" viewBox="0 0 14 13"><path d="M1 2l4-1 4 2 4-1v10l-4 1-4-2-4 1z M5 1v10M9 3v10" stroke="#d0d0d0" stroke-width="1.1" fill="none"/></svg>
<div class="r" style="left:1269.0px;top:946.0px;width:23.0px;height:21.5px;background:#141414;border:1px solid #3a3a3a;"></div>
<svg style="left:1274px;top:950px;" width="14" height="13" viewBox="0 0 14 13"><rect x="1" y="1" width="12" height="3" fill="#b8b8b8"/><path d="M1 1h12v11h-12z M1 6.5h12M1 9.5h12M5 1v11M9 1v11" stroke="#d0d0d0" stroke-width="1" fill="none"/></svg>
<div class="r" style="left:1369.0px;top:946.0px;width:23.0px;height:21.5px;background:#141414;border:1px solid #3a3a3a;"></div>
<svg style="left:1374px;top:949px;" width="14" height="15" viewBox="0 0 14 15"><path d="M2 8l5-5 5 5M2 13l5-5 5 5" stroke="#d0d0d0" stroke-width="1.3" fill="none"/></svg>
<div class="r" style="left:1666.0px;top:43.0px;width:1.5px;height:946.0px;background:#444448;"></div>
<div class="r" style="left:494.0px;top:67.0px;width:598.0px;height:1315.0px;background:#111111;"></div>
<div class="r" style="left:499.0px;top:44.0px;width:232.0px;height:20.0px;background:#284a78;border-radius:5px 5px 0 0;"></div>
<div class="t" style="left:525.0px;top:48.6px;color:#e6e6e6;">FluxEngine disk visualiser</div>
<svg style="left:505px;top:47px;" width="14" height="14" viewBox="0 0 14 14"><path d="M0.5 0.5h13v13h-13z M3 0.5v5h8v-5 M3 13.5v-5h8v5" stroke="#c8d4e8" stroke-width="1.1" fill="#c8d4e8" fill-opacity="0.25"/></svg>
<svg style="left:715px;top:49px;" width="10" height="10" viewBox="0 0 10 10"><path d="M0 0L10 10M10 0L0 10" stroke="#e0e0e0" stroke-width="1.3" fill="none"/></svg>
<svg style="left:494px;top:67px;overflow:hidden;" width="598" height="1315" viewBox="0 0 598 1315"><circle cx="299" cy="364" r="282" fill="#1c2d46"/><path d="M310.0 309.0A56.1 56.1 0 0 1 335.6 321.5M341.3 327.1A56.1 56.1 0 0 1 354.1 353.5M355.0 361.0A56.1 56.1 0 0 1 349.2 388.9M345.9 394.7A56.1 56.1 0 0 1 323.4 414.5M318.1 416.8A56.1 56.1 0 0 1 287.3 418.9M281.7 417.4A56.1 56.1 0 0 1 255.8 399.8M252.4 395.2A56.1 56.1 0 0 1 242.9 366.3M243.1 358.8A56.1 56.1 0 0 1 252.8 332.2M257.0 326.8A56.1 56.1 0 0 1 282.8 310.3M311.1 303.3A61.9 61.9 0 0 1 339.3 317.1M345.6 323.3A61.9 61.9 0 0 1 359.8 352.4M360.8 360.7A61.9 61.9 0 0 1 354.4 391.5M350.8 397.9A61.9 61.9 0 0 1 325.9 419.7M320.1 422.2A61.9 61.9 0 0 1 286.1 424.5M279.9 422.8A61.9 61.9 0 0 1 251.3 403.4M247.6 398.4A61.9 61.9 0 0 1 237.2 366.6M237.4 358.3A61.9 61.9 0 0 1 248.0 329.0M252.7 322.9A61.9 61.9 0 0 1 281.1 304.8M312.3 297.7A67.6 67.6 0 0 1 343.1 312.7M350.0 319.5A67.6 67.6 0 0 1 365.4 351.3M366.5 360.3A67.6 67.6 0 0 1 359.6 394.1M355.6 401.0A67.6 67.6 0 0 1 328.4 424.9M322.0 427.6A67.6 67.6 0 0 1 284.9 430.2M278.1 428.3A67.6 67.6 0 0 1 246.9 407.1M242.8 401.6A67.6 67.6 0 0 1 231.4 366.8M231.6 357.8A67.6 67.6 0 0 1 243.3 325.7M248.4 319.1A67.6 67.6 0 0 1 279.4 299.2M313.4 292.0A73.4 73.4 0 0 1 346.9 308.3M354.3 315.7A73.4 73.4 0 0 1 371.1 350.2M372.3 360.0A73.4 73.4 0 0 1 364.8 396.6M360.4 404.2A73.4 73.4 0 0 1 331.0 430.1M324.0 433.0A73.4 73.4 0 0 1 283.7 435.8M276.3 433.8A73.4 73.4 0 0 1 242.4 410.8M238.0 404.8A73.4 73.4 0 0 1 225.7 367.1M225.9 357.2A73.4 73.4 0 0 1 238.5 322.4M244.1 315.3A73.4 73.4 0 0 1 277.8 293.7M314.5 286.4A79.2 79.2 0 0 1 350.6 304.0M358.7 311.9A79.2 79.2 0 0 1 376.8 349.2M378.1 359.7A79.2 79.2 0 0 1 369.9 399.2M365.3 407.4A79.2 79.2 0 0 1 333.5 435.3M326.0 438.5A79.2 79.2 0 0 1 282.5 441.4M274.5 439.3A79.2 79.2 0 0 1 238.0 414.5M233.2 408.0A79.2 79.2 0 0 1 219.9 367.3M220.2 356.7A79.2 79.2 0 0 1 233.7 319.2M239.8 311.4A79.2 79.2 0 0 1 276.1 288.2M315.6 280.7A85.0 85.0 0 0 1 354.4 299.6M363.0 308.2A85.0 85.0 0 0 1 382.4 348.1M383.8 359.4A85.0 85.0 0 0 1 375.1 401.8M370.1 410.5A85.0 85.0 0 0 1 336.0 440.5M327.9 443.9A85.0 85.0 0 0 1 281.3 447.1M272.7 444.8A85.0 85.0 0 0 1 233.5 418.1M228.4 411.3A85.0 85.0 0 0 1 214.1 367.6M214.4 356.2A85.0 85.0 0 0 1 229.0 315.9M235.5 307.6A85.0 85.0 0 0 1 274.4 282.7M316.8 275.0A90.7 90.7 0 0 1 358.2 295.2M367.4 304.4A90.7 90.7 0 0 1 388.1 347.0M389.6 359.1A90.7 90.7 0 0 1 380.3 404.3M374.9 413.7A90.7 90.7 0 0 1 338.5 445.7M329.9 449.3A90.7 90.7 0 0 1 280.1 452.7M271.0 450.3A90.7 90.7 0 0 1 229.1 421.8M223.6 414.5A90.7 90.7 0 0 1 208.4 367.8M208.7 355.6A90.7 90.7 0 0 1 224.2 312.6M231.2 303.8A90.7 90.7 0 0 1 272.8 277.2M317.9 269.4A96.5 96.5 0 0 1 361.9 290.8M371.7 300.6A96.5 96.5 0 0 1 393.8 345.9M395.3 358.8A96.5 96.5 0 0 1 385.4 406.9M379.7 416.8A96.5 96.5 0 0 1 341.0 450.9M331.8 454.7A96.5 96.5 0 0 1 278.9 458.4M269.2 455.8A96.5 96.5 0 0 1 224.7 425.5M218.8 417.7A96.5 96.5 0 0 1 202.6 368.0M202.9 355.1A96.5 96.5 0 0 1 219.5 309.3M226.8 299.9A96.5 96.5 0 0 1 271.1 271.6M319.0 263.7A102.3 102.3 0 0 1 365.7 286.5M376.1 296.8A102.3 102.3 0 0 1 399.4 344.8M401.1 358.5A102.3 102.3 0 0 1 390.6 409.5M384.6 420.0A102.3 102.3 0 0 1 343.5 456.1M333.8 460.2A102.3 102.3 0 0 1 277.7 464.0M267.4 461.3A102.3 102.3 0 0 1 220.2 429.2M214.0 420.9A102.3 102.3 0 0 1 196.8 368.3M197.2 354.6A102.3 102.3 0 0 1 214.7 306.1M222.5 296.1A102.3 102.3 0 0 1 269.4 266.1M320.2 258.1A108.0 108.0 0 0 1 369.4 282.1M380.4 293.0A108.0 108.0 0 0 1 405.1 343.8M406.9 358.2A108.0 108.0 0 0 1 395.8 412.0M389.4 423.2A108.0 108.0 0 0 1 346.0 461.3M335.8 465.6A108.0 108.0 0 0 1 276.5 469.7M265.6 466.7A108.0 108.0 0 0 1 215.8 432.9M209.2 424.1A108.0 108.0 0 0 1 191.1 368.5M191.4 354.0A108.0 108.0 0 0 1 210.0 302.8M218.2 292.3A108.0 108.0 0 0 1 267.8 260.6M321.3 252.4A113.8 113.8 0 0 1 373.2 277.7M384.8 289.2A113.8 113.8 0 0 1 410.8 342.7M412.6 357.8A113.8 113.8 0 0 1 400.9 414.6M394.2 426.3A113.8 113.8 0 0 1 348.5 466.5M337.7 471.0A113.8 113.8 0 0 1 275.3 475.3M263.8 472.2A113.8 113.8 0 0 1 211.3 436.5M204.4 427.3A113.8 113.8 0 0 1 185.3 368.8M185.7 353.5A113.8 113.8 0 0 1 205.2 299.5M213.9 288.4A113.8 113.8 0 0 1 266.1 255.1M322.4 246.7A119.6 119.6 0 0 1 377.0 273.3M389.1 285.4A119.6 119.6 0 0 1 416.5 341.6M418.4 357.5A119.6 119.6 0 0 1 406.1 417.2M399.1 429.5A119.6 119.6 0 0 1 351.0 471.7M339.7 476.4A119.6 119.6 0 0 1 274.1 481.0M262.1 477.7A119.6 119.6 0 0 1 206.9 440.2M199.6 430.5A119.6 119.6 0 0 1 179.5 369.0M179.9 353.0A119.6 119.6 0 0 1 200.5 296.3M209.6 284.6A119.6 119.6 0 0 1 264.4 249.5M323.6 241.1A125.3 125.3 0 0 1 380.7 269.0M393.5 281.6A125.3 125.3 0 0 1 422.1 340.5M424.2 357.2A125.3 125.3 0 0 1 411.3 419.7M403.9 432.6A125.3 125.3 0 0 1 353.6 476.8M341.7 481.9A125.3 125.3 0 0 1 272.9 486.6M260.3 483.2A125.3 125.3 0 0 1 202.4 443.9M194.8 433.7A125.3 125.3 0 0 1 173.8 369.2M174.2 352.4A125.3 125.3 0 0 1 195.7 293.0M205.3 280.8A125.3 125.3 0 0 1 262.8 244.0M324.7 235.4A131.1 131.1 0 0 1 384.5 264.6M397.8 277.8A131.1 131.1 0 0 1 427.8 339.4M429.9 356.9A131.1 131.1 0 0 1 416.4 422.3M408.7 435.8A131.1 131.1 0 0 1 356.1 482.0M343.6 487.3A131.1 131.1 0 0 1 271.7 492.2M258.5 488.7A131.1 131.1 0 0 1 198.0 447.6M190.0 436.9A131.1 131.1 0 0 1 168.0 369.5M168.5 351.9A131.1 131.1 0 0 1 190.9 289.7M201.0 277.0A131.1 131.1 0 0 1 261.1 238.5M325.8 229.8A136.9 136.9 0 0 1 388.3 260.2M402.1 274.0A136.9 136.9 0 0 1 433.5 338.4M435.7 356.6A136.9 136.9 0 0 1 421.6 424.9M413.5 439.0A136.9 136.9 0 0 1 358.6 487.2M345.6 492.7A136.9 136.9 0 0 1 270.5 497.9M256.7 494.2A136.9 136.9 0 0 1 193.5 451.3M185.3 440.1A136.9 136.9 0 0 1 162.2 369.7M162.7 351.4A136.9 136.9 0 0 1 186.2 286.5M196.6 273.1A136.9 136.9 0 0 1 259.4 233.0M327.0 224.1A142.7 142.7 0 0 1 392.0 255.9M406.5 270.2A142.7 142.7 0 0 1 439.1 337.3M441.4 356.3A142.7 142.7 0 0 1 426.8 427.4M418.4 442.1A142.7 142.7 0 0 1 361.1 492.4M347.6 498.1A142.7 142.7 0 0 1 269.3 503.5M254.9 499.7A142.7 142.7 0 0 1 189.1 454.9M180.5 443.4A142.7 142.7 0 0 1 156.5 370.0M157.0 350.8A142.7 142.7 0 0 1 181.4 283.2M192.3 269.3A142.7 142.7 0 0 1 257.8 227.4M328.1 218.5A148.4 148.4 0 0 1 395.8 251.5M410.8 266.4A148.4 148.4 0 0 1 444.8 336.2M447.2 356.0A148.4 148.4 0 0 1 431.9 430.0M423.2 445.3A148.4 148.4 0 0 1 363.6 497.6M349.5 503.6A148.4 148.4 0 0 1 268.1 509.2M253.1 505.2A148.4 148.4 0 0 1 184.6 458.6M175.7 446.6A148.4 148.4 0 0 1 150.7 370.2M151.2 350.3A148.4 148.4 0 0 1 176.7 279.9M188.0 265.5A148.4 148.4 0 0 1 256.1 221.9M329.2 212.8A154.2 154.2 0 0 1 399.5 247.1M415.2 262.6A154.2 154.2 0 0 1 450.5 335.1M453.0 355.7A154.2 154.2 0 0 1 437.1 432.6M428.0 448.4A154.2 154.2 0 0 1 366.1 502.8M351.5 509.0A154.2 154.2 0 0 1 266.9 514.8M251.4 510.6A154.2 154.2 0 0 1 180.2 462.3M170.9 449.8A154.2 154.2 0 0 1 144.9 370.5M145.5 349.8A154.2 154.2 0 0 1 171.9 276.7M183.7 261.6A154.2 154.2 0 0 1 254.4 216.4M330.3 207.1A160.0 160.0 0 0 1 403.3 242.7M419.5 258.8A160.0 160.0 0 0 1 456.1 334.0M458.7 355.3A160.0 160.0 0 0 1 442.3 435.1M432.8 451.6A160.0 160.0 0 0 1 368.6 508.0M353.4 514.4A160.0 160.0 0 0 1 265.7 520.5M249.6 516.1A160.0 160.0 0 0 1 175.7 466.0M166.1 453.0A160.0 160.0 0 0 1 139.2 370.7M139.7 349.2A160.0 160.0 0 0 1 167.2 273.4M179.4 257.8A160.0 160.0 0 0 1 252.8 210.9M331.5 201.5A165.7 165.7 0 0 1 407.1 238.4M423.9 255.1A165.7 165.7 0 0 1 461.8 332.9M464.5 355.0A165.7 165.7 0 0 1 447.4 437.7M437.7 454.7A165.7 165.7 0 0 1 371.1 513.2M355.4 519.8A165.7 165.7 0 0 1 264.5 526.1M247.8 521.6A165.7 165.7 0 0 1 171.3 469.6M161.3 456.2A165.7 165.7 0 0 1 133.4 370.9M134.0 348.7A165.7 165.7 0 0 1 162.4 270.1M175.1 254.0A165.7 165.7 0 0 1 251.1 205.3M332.6 195.8A171.5 171.5 0 0 1 410.8 234.0M428.2 251.3A171.5 171.5 0 0 1 467.5 331.9M470.2 354.7A171.5 171.5 0 0 1 452.6 440.3M442.5 457.9A171.5 171.5 0 0 1 373.6 518.4M357.4 525.3A171.5 171.5 0 0 1 263.3 531.8M246.0 527.1A171.5 171.5 0 0 1 166.9 473.3M156.5 459.4A171.5 171.5 0 0 1 127.7 371.2M128.2 348.2A171.5 171.5 0 0 1 157.7 266.9M170.8 250.1A171.5 171.5 0 0 1 249.4 199.8M333.7 190.2A177.3 177.3 0 0 1 414.6 229.6M432.6 247.5A177.3 177.3 0 0 1 473.1 330.8M476.0 354.4A177.3 177.3 0 0 1 457.8 442.8M447.3 461.1A177.3 177.3 0 0 1 376.2 523.6M359.3 530.7A177.3 177.3 0 0 1 262.1 537.4M244.2 532.6A177.3 177.3 0 0 1 162.4 477.0M151.7 462.6A177.3 177.3 0 0 1 121.9 371.4M122.5 347.6A177.3 177.3 0 0 1 152.9 263.6M166.4 246.3A177.3 177.3 0 0 1 247.8 194.3M334.9 184.5A183.0 183.0 0 0 1 418.4 225.2M436.9 243.7A183.0 183.0 0 0 1 478.8 329.7M481.8 354.1A183.0 183.0 0 0 1 463.0 445.4M452.2 464.2A183.0 183.0 0 0 1 378.7 528.8M361.3 536.1A183.0 183.0 0 0 1 260.9 543.0M242.4 538.1A183.0 183.0 0 0 1 158.0 480.7M146.9 465.8A183.0 183.0 0 0 1 116.1 371.7M116.7 347.1A183.0 183.0 0 0 1 148.2 260.3M162.1 242.5A183.0 183.0 0 0 1 246.1 188.8M336.0 178.9A188.8 188.8 0 0 1 422.1 220.9M441.3 239.9A188.8 188.8 0 0 1 484.5 328.6M487.5 353.8A188.8 188.8 0 0 1 468.1 448.0M457.0 467.4A188.8 188.8 0 0 1 381.2 534.0M363.3 541.5A188.8 188.8 0 0 1 259.7 548.7M240.7 543.6A188.8 188.8 0 0 1 153.5 484.4M142.1 469.0A188.8 188.8 0 0 1 110.4 371.9M111.0 346.6A188.8 188.8 0 0 1 143.4 257.1M157.8 238.6A188.8 188.8 0 0 1 244.4 183.2M337.1 173.2A194.6 194.6 0 0 1 425.9 216.5M445.6 236.1A194.6 194.6 0 0 1 490.1 327.5M493.3 353.5A194.6 194.6 0 0 1 473.3 450.5M461.8 470.5A194.6 194.6 0 0 1 383.7 539.2M365.2 547.0A194.6 194.6 0 0 1 258.5 554.3M238.9 549.1A194.6 194.6 0 0 1 149.1 488.0M137.3 472.2A194.6 194.6 0 0 1 104.6 372.1M105.3 346.0A194.6 194.6 0 0 1 138.6 253.8M153.5 234.8A194.6 194.6 0 0 1 242.8 177.7M338.3 167.5A200.3 200.3 0 0 1 429.6 212.1M450.0 232.3A200.3 200.3 0 0 1 495.8 326.5M499.1 353.2A200.3 200.3 0 0 1 478.5 453.1M466.6 473.7A200.3 200.3 0 0 1 386.2 544.4M367.2 552.4A200.3 200.3 0 0 1 257.3 560.0M237.1 554.5A200.3 200.3 0 0 1 144.6 491.7M132.5 475.5A200.3 200.3 0 0 1 98.8 372.4M99.5 345.5A200.3 200.3 0 0 1 133.9 250.5M149.2 231.0A200.3 200.3 0 0 1 241.1 172.2M339.4 161.9A206.1 206.1 0 0 1 433.4 207.7M454.3 228.5A206.1 206.1 0 0 1 501.5 325.4M504.8 352.9A206.1 206.1 0 0 1 483.6 455.6M471.5 476.9A206.1 206.1 0 0 1 388.7 549.6M369.2 557.8A206.1 206.1 0 0 1 256.1 565.6M235.3 560.0A206.1 206.1 0 0 1 140.2 495.4M127.7 478.7A206.1 206.1 0 0 1 93.1 372.6M93.8 345.0A206.1 206.1 0 0 1 129.1 247.3M144.9 227.2A206.1 206.1 0 0 1 239.4 166.7M340.5 156.2A211.9 211.9 0 0 1 437.2 203.4M458.7 224.7A211.9 211.9 0 0 1 507.1 324.3M510.6 352.5A211.9 211.9 0 0 1 488.8 458.2M476.3 480.0A211.9 211.9 0 0 1 391.2 554.8M371.1 563.2A211.9 211.9 0 0 1 254.9 571.3M233.5 565.5A211.9 211.9 0 0 1 135.7 499.1M122.9 481.9A211.9 211.9 0 0 1 87.3 372.9M88.0 344.4A211.9 211.9 0 0 1 124.4 244.0M140.5 223.3A211.9 211.9 0 0 1 237.8 161.2M341.6 150.6A217.7 217.7 0 0 1 440.9 199.0M463.0 220.9A217.7 217.7 0 0 1 512.8 323.2M516.3 352.2A217.7 217.7 0 0 1 494.0 460.8M481.1 483.2A217.7 217.7 0 0 1 393.7 560.0M373.1 568.7A217.7 217.7 0 0 1 253.7 576.9M231.7 571.0A217.7 217.7 0 0 1 131.3 502.7M118.1 485.1A217.7 217.7 0 0 1 81.5 373.1M82.3 343.9A217.7 217.7 0 0 1 119.6 240.7M136.2 219.5A217.7 217.7 0 0 1 236.1 155.6M342.8 144.9A223.4 223.4 0 0 1 444.7 194.6M467.4 217.1A223.4 223.4 0 0 1 518.5 322.1M522.1 351.9A223.4 223.4 0 0 1 499.1 463.3M486.0 486.3A223.4 223.4 0 0 1 396.2 565.2M375.1 574.1A223.4 223.4 0 0 1 252.5 582.5M230.0 576.5A223.4 223.4 0 0 1 126.8 506.4M113.3 488.3A223.4 223.4 0 0 1 75.8 373.4M76.5 343.4A223.4 223.4 0 0 1 114.9 237.4M131.9 215.7A223.4 223.4 0 0 1 234.4 150.1M343.9 139.2A229.2 229.2 0 0 1 448.5 190.2M471.7 213.3A229.2 229.2 0 0 1 524.1 321.1M527.9 351.6A229.2 229.2 0 0 1 504.3 465.9M490.8 489.5A229.2 229.2 0 0 1 398.8 570.4M377.0 579.5A229.2 229.2 0 0 1 251.3 588.2M228.2 582.0A229.2 229.2 0 0 1 122.4 510.1M108.5 491.5A229.2 229.2 0 0 1 70.0 373.6M70.8 342.8A229.2 229.2 0 0 1 110.1 234.2M127.6 211.8A229.2 229.2 0 0 1 232.8 144.6M345.0 133.6A235.0 235.0 0 0 1 452.2 185.9M476.1 209.5A235.0 235.0 0 0 1 529.8 320.0M533.6 351.3A235.0 235.0 0 0 1 509.5 468.5M495.6 492.7A235.0 235.0 0 0 1 401.3 575.5M379.0 584.9A235.0 235.0 0 0 1 250.1 593.8M226.4 587.5A235.0 235.0 0 0 1 118.0 513.8M103.7 494.7A235.0 235.0 0 0 1 64.2 373.8M65.0 342.3A235.0 235.0 0 0 1 105.4 230.9M123.3 208.0A235.0 235.0 0 0 1 231.1 139.1M346.2 127.9A240.7 240.7 0 0 1 456.0 181.5M480.4 205.7A240.7 240.7 0 0 1 535.5 318.9M539.4 351.0A240.7 240.7 0 0 1 514.6 471.0M500.4 495.8A240.7 240.7 0 0 1 403.8 580.7M380.9 590.4A240.7 240.7 0 0 1 248.9 599.5M224.6 593.0A240.7 240.7 0 0 1 113.5 517.5M98.9 497.9A240.7 240.7 0 0 1 58.5 374.1M59.3 341.8A240.7 240.7 0 0 1 100.6 227.6M119.0 204.2A240.7 240.7 0 0 1 229.4 133.5M347.3 122.3A246.5 246.5 0 0 1 459.7 177.1M484.8 202.0A246.5 246.5 0 0 1 541.1 317.8M545.1 350.7A246.5 246.5 0 0 1 519.8 473.6M505.3 499.0A246.5 246.5 0 0 1 406.3 585.9M382.9 595.8A246.5 246.5 0 0 1 247.7 605.1M222.8 598.4A246.5 246.5 0 0 1 109.1 521.1M94.2 501.1A246.5 246.5 0 0 1 52.7 374.3M53.5 341.2A246.5 246.5 0 0 1 95.8 224.4M114.7 200.3A246.5 246.5 0 0 1 227.8 128.0M348.4 116.6A252.3 252.3 0 0 1 463.5 172.7M489.1 198.2A252.3 252.3 0 0 1 546.8 316.7M550.9 350.4A252.3 252.3 0 0 1 525.0 476.2M510.1 502.1A252.3 252.3 0 0 1 408.8 591.1M384.9 601.2A252.3 252.3 0 0 1 246.5 610.8M221.0 603.9A252.3 252.3 0 0 1 104.6 524.8M89.4 504.3A252.3 252.3 0 0 1 46.9 374.6M47.8 340.7A252.3 252.3 0 0 1 91.1 221.1M110.3 196.5A252.3 252.3 0 0 1 226.1 122.5M349.6 111.0A258.1 258.1 0 0 1 467.3 168.4M493.5 194.4A258.1 258.1 0 0 1 552.5 315.6M556.7 350.0A258.1 258.1 0 0 1 530.1 478.7M514.9 505.3A258.1 258.1 0 0 1 411.3 596.3M386.8 606.6A258.1 258.1 0 0 1 245.3 616.4M219.3 609.4A258.1 258.1 0 0 1 100.2 528.5M84.6 507.6A258.1 258.1 0 0 1 41.2 374.8M42.1 340.2A258.1 258.1 0 0 1 86.3 217.8M106.0 192.7A258.1 258.1 0 0 1 224.4 117.0M350.7 105.3A263.8 263.8 0 0 1 471.0 164.0M497.8 190.6A263.8 263.8 0 0 1 558.1 314.6M562.4 349.7A263.8 263.8 0 0 1 535.3 481.3M519.8 508.5A263.8 263.8 0 0 1 413.8 601.5M388.8 612.1A263.8 263.8 0 0 1 244.1 622.1M217.5 614.9A263.8 263.8 0 0 1 95.7 532.2M79.8 510.8A263.8 263.8 0 0 1 35.4 375.0M36.3 339.6A263.8 263.8 0 0 1 81.6 214.6M101.7 188.8A263.8 263.8 0 0 1 222.7 111.4M351.8 99.6A269.6 269.6 0 0 1 474.8 159.6M502.2 186.8A269.6 269.6 0 0 1 563.8 313.5M568.2 349.4A269.6 269.6 0 0 1 540.5 483.9M524.6 511.6A269.6 269.6 0 0 1 416.3 606.7M390.8 617.5A269.6 269.6 0 0 1 242.9 627.7M215.7 620.4A269.6 269.6 0 0 1 91.3 535.8M75.0 514.0A269.6 269.6 0 0 1 29.6 375.3M30.6 339.1A269.6 269.6 0 0 1 76.8 211.3M97.4 185.0A269.6 269.6 0 0 1 221.1 105.9" stroke="#7db4ec" stroke-width="2.1" fill="none"/><path d="M508.9 180.9A278.6 278.6 0 0 1 572.7 311.8M577.2 348.9A278.6 278.6 0 0 1 548.5 487.9M532.1 516.6A278.6 278.6 0 0 1 420.3 614.8M393.8 626.0A278.6 278.6 0 0 1 241.1 636.5M212.9 629.0A278.6 278.6 0 0 1 84.3 541.6M67.5 519.0A278.6 278.6 0 0 1 20.6 375.7M21.6 338.3A278.6 278.6 0 0 1 69.4 206.2" stroke="#72b0f0" stroke-width="6.8" fill="none"/><path d="M353.9 89.4A280.0 280.0 0 0 1 481.6 151.7" stroke="#72b0f0" stroke-width="2.6" fill="none"/><path d="M89.0 177.6A280.8 280.8 0 0 1 217.8 95.2" stroke="#a59ccc" stroke-width="2.2" fill="none"/><path d="M364.9 360.4A66.0 66.0 0 0 1 358.1 393.3" stroke="#7ab6f2" stroke-width="8" fill="none"/><path d="M352.6 399.0A64.0 64.0 0 0 1 326.9 421.6" stroke="#7ab6f2" stroke-width="7" fill="none"/><path d="M245.0 400.2A65.0 65.0 0 0 1 234.1 366.7" stroke="#7ab6f2" stroke-width="8" fill="none"/><path d="M234.3 358.0A65.0 65.0 0 0 1 245.4 327.2" stroke="#7ab6f2" stroke-width="8" fill="none"/><path d="M247.8 318.5A68.5 68.5 0 0 1 279.2 298.4" stroke="#7ab6f2" stroke-width="8" fill="none"/><path d="M312.6 299.9A65.5 65.5 0 0 1 341.5 314.2M354.4 328.1A66.0 66.0 0 0 1 363.8 351.4M357.3 395.0A66.0 66.0 0 0 1 353.7 400.9M319.5 427.2A66.5 66.5 0 0 1 286.3 429.3" stroke="#e0584a" stroke-width="2.4" fill="none"/><path d="M307.4 308.0h1.3v1.3h-1.3zM308.3 302.3h1.3v1.3h-1.3zM309.3 296.6h1.3v1.3h-1.3zM310.2 290.9h1.3v1.3h-1.3zM311.1 285.2h1.3v1.3h-1.3zM312.1 279.5h1.3v1.3h-1.3zM312.8 273.6h1.8v1.8h-1.8zM313.7 267.9h1.8v1.8h-1.8zM314.6 262.2h1.8v1.8h-1.8zM315.6 256.5h1.8v1.8h-1.8zM316.5 250.8h1.8v1.8h-1.8zM317.4 245.1h1.8v1.8h-1.8zM318.4 239.4h1.8v1.8h-1.8zM319.1 233.5h2.2v2.2h-2.2zM320.0 227.8h2.2v2.2h-2.2zM321.0 222.1h2.2v2.2h-2.2zM321.9 216.4h2.2v2.2h-2.2zM322.8 210.7h2.2v2.2h-2.2zM323.8 205.0h2.2v2.2h-2.2zM324.7 199.3h2.2v2.2h-2.2zM325.6 193.7h2.2v2.2h-2.2zM326.5 188.0h2.2v2.2h-2.2zM327.5 182.3h2.2v2.2h-2.2zM328.4 176.6h2.2v2.2h-2.2zM329.3 170.9h2.2v2.2h-2.2zM330.3 165.2h2.2v2.2h-2.2zM331.2 159.5h2.2v2.2h-2.2zM332.1 153.8h2.2v2.2h-2.2zM333.1 148.1h2.2v2.2h-2.2zM334.0 142.4h2.2v2.2h-2.2zM334.9 136.7h2.2v2.2h-2.2zM335.9 131.0h2.2v2.2h-2.2zM336.8 125.3h2.2v2.2h-2.2zM337.7 119.6h2.2v2.2h-2.2zM338.7 113.9h2.2v2.2h-2.2zM339.6 108.2h2.2v2.2h-2.2zM340.5 102.5h2.2v2.2h-2.2zM341.5 96.9h2.2v2.2h-2.2zM343.0 87.6h2.2v2.2h-2.2zM339.3 325.0h1.3v1.3h-1.3zM343.5 321.1h1.3v1.3h-1.3zM347.7 317.1h1.3v1.3h-1.3zM352.0 313.2h1.3v1.3h-1.3zM356.2 309.2h1.3v1.3h-1.3zM360.4 305.3h1.3v1.3h-1.3zM364.3 301.1h1.8v1.8h-1.8zM368.6 297.2h1.8v1.8h-1.8zM372.8 293.2h1.8v1.8h-1.8zM377.0 289.3h1.8v1.8h-1.8zM381.2 285.3h1.8v1.8h-1.8zM385.4 281.4h1.8v1.8h-1.8zM389.6 277.5h1.8v1.8h-1.8zM393.6 273.3h2.2v2.2h-2.2zM397.8 269.4h2.2v2.2h-2.2zM402.1 265.4h2.2v2.2h-2.2zM406.3 261.5h2.2v2.2h-2.2zM410.5 257.5h2.2v2.2h-2.2zM414.7 253.6h2.2v2.2h-2.2zM418.9 249.7h2.2v2.2h-2.2zM423.1 245.7h2.2v2.2h-2.2zM427.3 241.8h2.2v2.2h-2.2zM431.5 237.8h2.2v2.2h-2.2zM435.8 233.9h2.2v2.2h-2.2zM440.0 229.9h2.2v2.2h-2.2zM444.2 226.0h2.2v2.2h-2.2zM448.4 222.1h2.2v2.2h-2.2zM452.6 218.1h2.2v2.2h-2.2zM456.8 214.2h2.2v2.2h-2.2zM461.0 210.2h2.2v2.2h-2.2zM465.3 206.3h2.2v2.2h-2.2zM469.5 202.4h2.2v2.2h-2.2zM473.7 198.4h2.2v2.2h-2.2zM477.9 194.5h2.2v2.2h-2.2zM482.1 190.5h2.2v2.2h-2.2zM486.3 186.6h2.2v2.2h-2.2zM490.5 182.6h2.2v2.2h-2.2zM494.7 178.7h2.2v2.2h-2.2zM501.6 172.3h2.2v2.2h-2.2zM354.2 358.4h1.3v1.3h-1.3zM360.0 357.9h1.3v1.3h-1.3zM365.7 357.3h1.3v1.3h-1.3zM371.5 356.8h1.3v1.3h-1.3zM377.2 356.3h1.3v1.3h-1.3zM383.0 355.8h1.3v1.3h-1.3zM388.5 355.0h1.8v1.8h-1.8zM394.2 354.5h1.8v1.8h-1.8zM400.0 354.0h1.8v1.8h-1.8zM405.7 353.5h1.8v1.8h-1.8zM411.4 353.0h1.8v1.8h-1.8zM417.2 352.5h1.8v1.8h-1.8zM422.9 352.0h1.8v1.8h-1.8zM428.5 351.2h2.2v2.2h-2.2zM434.2 350.7h2.2v2.2h-2.2zM440.0 350.2h2.2v2.2h-2.2zM445.7 349.7h2.2v2.2h-2.2zM451.5 349.2h2.2v2.2h-2.2zM457.2 348.7h2.2v2.2h-2.2zM463.0 348.2h2.2v2.2h-2.2zM468.7 347.7h2.2v2.2h-2.2zM474.5 347.1h2.2v2.2h-2.2zM480.2 346.6h2.2v2.2h-2.2zM486.0 346.1h2.2v2.2h-2.2zM491.7 345.6h2.2v2.2h-2.2zM497.5 345.1h2.2v2.2h-2.2zM503.2 344.6h2.2v2.2h-2.2zM509.0 344.1h2.2v2.2h-2.2zM514.7 343.6h2.2v2.2h-2.2zM520.4 343.0h2.2v2.2h-2.2zM526.2 342.5h2.2v2.2h-2.2zM531.9 342.0h2.2v2.2h-2.2zM537.7 341.5h2.2v2.2h-2.2zM543.4 341.0h2.2v2.2h-2.2zM549.2 340.5h2.2v2.2h-2.2zM554.9 340.0h2.2v2.2h-2.2zM560.7 339.4h2.2v2.2h-2.2zM566.4 338.9h2.2v2.2h-2.2zM575.8 338.1h2.2v2.2h-2.2zM346.3 392.4h1.3v1.3h-1.3zM351.3 395.4h1.3v1.3h-1.3zM356.2 398.4h1.3v1.3h-1.3zM361.1 401.4h1.3v1.3h-1.3zM366.1 404.4h1.3v1.3h-1.3zM371.0 407.4h1.3v1.3h-1.3zM375.7 410.1h1.8v1.8h-1.8zM380.6 413.1h1.8v1.8h-1.8zM385.6 416.1h1.8v1.8h-1.8zM390.5 419.1h1.8v1.8h-1.8zM395.4 422.1h1.8v1.8h-1.8zM400.4 425.0h1.8v1.8h-1.8zM405.3 428.0h1.8v1.8h-1.8zM410.0 430.8h2.2v2.2h-2.2zM415.0 433.8h2.2v2.2h-2.2zM419.9 436.8h2.2v2.2h-2.2zM424.9 439.8h2.2v2.2h-2.2zM429.8 442.8h2.2v2.2h-2.2zM434.7 445.8h2.2v2.2h-2.2zM439.7 448.8h2.2v2.2h-2.2zM444.6 451.7h2.2v2.2h-2.2zM449.5 454.7h2.2v2.2h-2.2zM454.5 457.7h2.2v2.2h-2.2zM459.4 460.7h2.2v2.2h-2.2zM464.3 463.7h2.2v2.2h-2.2zM469.3 466.7h2.2v2.2h-2.2zM474.2 469.7h2.2v2.2h-2.2zM479.1 472.7h2.2v2.2h-2.2zM484.1 475.7h2.2v2.2h-2.2zM489.0 478.6h2.2v2.2h-2.2zM493.9 481.6h2.2v2.2h-2.2zM498.9 484.6h2.2v2.2h-2.2zM503.8 487.6h2.2v2.2h-2.2zM508.8 490.6h2.2v2.2h-2.2zM513.7 493.6h2.2v2.2h-2.2zM518.6 496.6h2.2v2.2h-2.2zM523.6 499.6h2.2v2.2h-2.2zM528.5 502.6h2.2v2.2h-2.2zM536.5 507.4h2.2v2.2h-2.2zM319.3 415.4h1.3v1.3h-1.3zM321.4 420.8h1.3v1.3h-1.3zM323.6 426.1h1.3v1.3h-1.3zM325.7 431.5h1.3v1.3h-1.3zM327.9 436.8h1.3v1.3h-1.3zM330.0 442.2h1.3v1.3h-1.3zM331.9 447.3h1.8v1.8h-1.8zM334.1 452.6h1.8v1.8h-1.8zM336.2 458.0h1.8v1.8h-1.8zM338.4 463.3h1.8v1.8h-1.8zM340.5 468.7h1.8v1.8h-1.8zM342.7 474.0h1.8v1.8h-1.8zM344.9 479.4h1.8v1.8h-1.8zM346.8 484.5h2.2v2.2h-2.2zM349.0 489.9h2.2v2.2h-2.2zM351.1 495.3h2.2v2.2h-2.2zM353.3 500.6h2.2v2.2h-2.2zM355.4 506.0h2.2v2.2h-2.2zM357.6 511.3h2.2v2.2h-2.2zM359.7 516.7h2.2v2.2h-2.2zM361.9 522.0h2.2v2.2h-2.2zM364.0 527.4h2.2v2.2h-2.2zM366.2 532.7h2.2v2.2h-2.2zM368.3 538.1h2.2v2.2h-2.2zM370.5 543.4h2.2v2.2h-2.2zM372.6 548.8h2.2v2.2h-2.2zM374.8 554.1h2.2v2.2h-2.2zM376.9 559.5h2.2v2.2h-2.2zM379.1 564.9h2.2v2.2h-2.2zM381.2 570.2h2.2v2.2h-2.2zM383.4 575.6h2.2v2.2h-2.2zM385.5 580.9h2.2v2.2h-2.2zM387.7 586.3h2.2v2.2h-2.2zM389.8 591.6h2.2v2.2h-2.2zM392.0 597.0h2.2v2.2h-2.2zM394.1 602.3h2.2v2.2h-2.2zM396.3 607.7h2.2v2.2h-2.2zM398.5 613.0h2.2v2.2h-2.2zM402.0 621.8h2.2v2.2h-2.2zM282.9 417.3h1.3v1.3h-1.3zM281.3 422.8h1.3v1.3h-1.3zM279.7 428.4h1.3v1.3h-1.3zM278.1 433.9h1.3v1.3h-1.3zM276.5 439.5h1.3v1.3h-1.3zM274.9 445.0h1.3v1.3h-1.3zM273.1 450.3h1.8v1.8h-1.8zM271.5 455.9h1.8v1.8h-1.8zM269.9 461.4h1.8v1.8h-1.8zM268.3 466.9h1.8v1.8h-1.8zM266.7 472.5h1.8v1.8h-1.8zM265.1 478.0h1.8v1.8h-1.8zM263.6 483.6h1.8v1.8h-1.8zM261.8 488.9h2.2v2.2h-2.2zM260.2 494.5h2.2v2.2h-2.2zM258.6 500.0h2.2v2.2h-2.2zM257.0 505.6h2.2v2.2h-2.2zM255.4 511.1h2.2v2.2h-2.2zM253.8 516.7h2.2v2.2h-2.2zM252.2 522.2h2.2v2.2h-2.2zM250.6 527.8h2.2v2.2h-2.2zM249.0 533.3h2.2v2.2h-2.2zM247.4 538.8h2.2v2.2h-2.2zM245.9 544.4h2.2v2.2h-2.2zM244.3 549.9h2.2v2.2h-2.2zM242.7 555.5h2.2v2.2h-2.2zM241.1 561.0h2.2v2.2h-2.2zM239.5 566.6h2.2v2.2h-2.2zM237.9 572.1h2.2v2.2h-2.2zM236.3 577.7h2.2v2.2h-2.2zM234.7 583.2h2.2v2.2h-2.2zM233.1 588.8h2.2v2.2h-2.2zM231.5 594.3h2.2v2.2h-2.2zM230.0 599.9h2.2v2.2h-2.2zM228.4 605.4h2.2v2.2h-2.2zM226.8 611.0h2.2v2.2h-2.2zM225.2 616.5h2.2v2.2h-2.2zM223.6 622.0h2.2v2.2h-2.2zM221.0 631.1h2.2v2.2h-2.2zM252.8 396.2h1.3v1.3h-1.3zM248.2 399.5h1.3v1.3h-1.3zM243.5 402.9h1.3v1.3h-1.3zM238.8 406.3h1.3v1.3h-1.3zM234.1 409.7h1.3v1.3h-1.3zM229.5 413.0h1.3v1.3h-1.3zM224.5 416.2h1.8v1.8h-1.8zM219.8 419.5h1.8v1.8h-1.8zM215.2 422.9h1.8v1.8h-1.8zM210.5 426.3h1.8v1.8h-1.8zM205.8 429.7h1.8v1.8h-1.8zM201.1 433.0h1.8v1.8h-1.8zM196.4 436.4h1.8v1.8h-1.8zM191.6 439.6h2.2v2.2h-2.2zM186.9 443.0h2.2v2.2h-2.2zM182.2 446.3h2.2v2.2h-2.2zM177.5 449.7h2.2v2.2h-2.2zM172.8 453.1h2.2v2.2h-2.2zM168.2 456.5h2.2v2.2h-2.2zM163.5 459.8h2.2v2.2h-2.2zM158.8 463.2h2.2v2.2h-2.2zM154.1 466.6h2.2v2.2h-2.2zM149.4 470.0h2.2v2.2h-2.2zM144.8 473.3h2.2v2.2h-2.2zM140.1 476.7h2.2v2.2h-2.2zM135.4 480.1h2.2v2.2h-2.2zM130.7 483.5h2.2v2.2h-2.2zM126.0 486.8h2.2v2.2h-2.2zM121.4 490.2h2.2v2.2h-2.2zM116.7 493.6h2.2v2.2h-2.2zM112.0 497.0h2.2v2.2h-2.2zM107.3 500.3h2.2v2.2h-2.2zM102.6 503.7h2.2v2.2h-2.2zM98.0 507.1h2.2v2.2h-2.2zM93.3 510.5h2.2v2.2h-2.2zM88.6 513.8h2.2v2.2h-2.2zM83.9 517.2h2.2v2.2h-2.2zM79.2 520.6h2.2v2.2h-2.2zM71.6 526.1h2.2v2.2h-2.2zM242.3 360.1h1.3v1.3h-1.3zM236.6 359.8h1.3v1.3h-1.3zM230.8 359.5h1.3v1.3h-1.3zM225.1 359.1h1.3v1.3h-1.3zM219.3 358.8h1.3v1.3h-1.3zM213.5 358.5h1.3v1.3h-1.3zM207.5 357.9h1.8v1.8h-1.8zM201.8 357.5h1.8v1.8h-1.8zM196.0 357.2h1.8v1.8h-1.8zM190.2 356.9h1.8v1.8h-1.8zM184.5 356.5h1.8v1.8h-1.8zM178.7 356.2h1.8v1.8h-1.8zM173.0 355.9h1.8v1.8h-1.8zM167.0 355.4h2.2v2.2h-2.2zM161.2 355.0h2.2v2.2h-2.2zM155.5 354.7h2.2v2.2h-2.2zM149.7 354.4h2.2v2.2h-2.2zM144.0 354.0h2.2v2.2h-2.2zM138.2 353.7h2.2v2.2h-2.2zM132.4 353.4h2.2v2.2h-2.2zM126.7 353.0h2.2v2.2h-2.2zM120.9 352.7h2.2v2.2h-2.2zM115.2 352.4h2.2v2.2h-2.2zM109.4 352.0h2.2v2.2h-2.2zM103.6 351.7h2.2v2.2h-2.2zM97.9 351.4h2.2v2.2h-2.2zM92.1 351.0h2.2v2.2h-2.2zM86.4 350.7h2.2v2.2h-2.2zM80.6 350.4h2.2v2.2h-2.2zM74.8 350.0h2.2v2.2h-2.2zM69.1 349.7h2.2v2.2h-2.2zM63.3 349.4h2.2v2.2h-2.2zM57.6 349.0h2.2v2.2h-2.2zM51.8 348.7h2.2v2.2h-2.2zM46.0 348.4h2.2v2.2h-2.2zM40.3 348.0h2.2v2.2h-2.2zM34.5 347.7h2.2v2.2h-2.2zM28.8 347.4h2.2v2.2h-2.2zM19.4 346.8h2.2v2.2h-2.2zM255.9 326.7h1.3v1.3h-1.3zM251.5 322.9h1.3v1.3h-1.3zM247.1 319.2h1.3v1.3h-1.3zM242.8 315.4h1.3v1.3h-1.3zM238.4 311.6h1.3v1.3h-1.3zM234.0 307.8h1.3v1.3h-1.3zM229.4 303.8h1.8v1.8h-1.8zM225.1 300.1h1.8v1.8h-1.8zM220.7 296.3h1.8v1.8h-1.8zM216.3 292.5h1.8v1.8h-1.8zM212.0 288.7h1.8v1.8h-1.8zM207.6 285.0h1.8v1.8h-1.8zM203.2 281.2h1.8v1.8h-1.8zM198.7 277.2h2.2v2.2h-2.2zM194.3 273.5h2.2v2.2h-2.2zM189.9 269.7h2.2v2.2h-2.2zM185.5 265.9h2.2v2.2h-2.2zM181.2 262.1h2.2v2.2h-2.2zM176.8 258.4h2.2v2.2h-2.2zM172.4 254.6h2.2v2.2h-2.2zM168.1 250.8h2.2v2.2h-2.2zM163.7 247.1h2.2v2.2h-2.2zM159.3 243.3h2.2v2.2h-2.2zM155.0 239.5h2.2v2.2h-2.2zM150.6 235.8h2.2v2.2h-2.2zM146.2 232.0h2.2v2.2h-2.2zM141.9 228.2h2.2v2.2h-2.2zM137.5 224.4h2.2v2.2h-2.2zM133.1 220.7h2.2v2.2h-2.2zM128.8 216.9h2.2v2.2h-2.2zM124.4 213.1h2.2v2.2h-2.2zM120.0 209.4h2.2v2.2h-2.2zM115.7 205.6h2.2v2.2h-2.2zM111.3 201.8h2.2v2.2h-2.2zM106.9 198.1h2.2v2.2h-2.2zM102.6 194.3h2.2v2.2h-2.2zM98.2 190.5h2.2v2.2h-2.2zM93.8 186.7h2.2v2.2h-2.2zM86.7 180.6h2.2v2.2h-2.2z" fill="#f3e68e"/><line x1="299" y1="314" x2="299" y2="82" stroke="#d8b040" stroke-width="1.3"/><circle cx="299" cy="364" r="281.5" fill="none" stroke="#bdbdbd" stroke-width="0.9"/><circle cx="299" cy="364" r="49.6" fill="#101010" stroke="#d0d0d0" stroke-width="1.1"/><circle cx="299" cy="944" r="282" fill="#1c2d46"/><path d="M310.0 889.0A56.1 56.1 0 0 1 335.6 901.5M341.3 907.1A56.1 56.1 0 0 1 354.1 933.5M355.0 941.0A56.1 56.1 0 0 1 349.2 968.9M345.9 974.7A56.1 56.1 0 0 1 323.4 994.5M318.1 996.8A56.1 56.1 0 0 1 287.3 998.9M281.7 997.4A56.1 56.1 0 0 1 255.8 979.8M252.4 975.2A56.1 56.1 0 0 1 242.9 946.3M243.1 938.8A56.1 56.1 0 0 1 252.8 912.2M257.0 906.8A56.1 56.1 0 0 1 282.8 890.3M311.1 883.3A61.9 61.9 0 0 1 339.3 897.1M345.6 903.3A61.9 61.9 0 0 1 359.8 932.4M360.8 940.7A61.9 61.9 0 0 1 354.4 971.5M350.8 977.9A61.9 61.9 0 0 1 325.9 999.7M320.1 1002.2A61.9 61.9 0 0 1 286.1 1004.5M279.9 1002.8A61.9 61.9 0 0 1 251.3 983.4M247.6 978.4A61.9 61.9 0 0 1 237.2 946.6M237.4 938.3A61.9 61.9 0 0 1 248.0 909.0M252.7 902.9A61.9 61.9 0 0 1 281.1 884.8M312.3 877.7A67.6 67.6 0 0 1 343.1 892.7M350.0 899.5A67.6 67.6 0 0 1 365.4 931.3M366.5 940.3A67.6 67.6 0 0 1 359.6 974.1M355.6 981.0A67.6 67.6 0 0 1 328.4 1004.9M322.0 1007.6A67.6 67.6 0 0 1 284.9 1010.2M278.1 1008.3A67.6 67.6 0 0 1 246.9 987.1M242.8 981.6A67.6 67.6 0 0 1 231.4 946.8M231.6 937.8A67.6 67.6 0 0 1 243.3 905.7M248.4 899.1A67.6 67.6 0 0 1 279.4 879.2M313.4 872.0A73.4 73.4 0 0 1 346.9 888.3M354.3 895.7A73.4 73.4 0 0 1 371.1 930.2M372.3 940.0A73.4 73.4 0 0 1 364.8 976.6M360.4 984.2A73.4 73.4 0 0 1 331.0 1010.1M324.0 1013.0A73.4 73.4 0 0 1 283.7 1015.8M276.3 1013.8A73.4 73.4 0 0 1 242.4 990.8M238.0 984.8A73.4 73.4 0 0 1 225.7 947.1M225.9 937.2A73.4 73.4 0 0 1 238.5 902.4M244.1 895.3A73.4 73.4 0 0 1 277.8 873.7M314.5 866.4A79.2 79.2 0 0 1 350.6 884.0M358.7 891.9A79.2 79.2 0 0 1 376.8 929.2M378.1 939.7A79.2 79.2 0 0 1 369.9 979.2M365.3 987.4A79.2 79.2 0 0 1 333.5 1015.3M326.0 1018.5A79.2 79.2 0 0 1 282.5 1021.4M274.5 1019.3A79.2 79.2 0 0 1 238.0 994.5M233.2 988.0A79.2 79.2 0 0 1 219.9 947.3M220.2 936.7A79.2 79.2 0 0 1 233.7 899.2M239.8 891.4A79.2 79.2 0 0 1 276.1 868.2M315.6 860.7A85.0 85.0 0 0 1 354.4 879.6M363.0 888.2A85.0 85.0 0 0 1 382.4 928.1M383.8 939.4A85.0 85.0 0 0 1 375.1 981.8M370.1 990.5A85.0 85.0 0 0 1 336.0 1020.5M327.9 1023.9A85.0 85.0 0 0 1 281.3 1027.1M272.7 1024.8A85.0 85.0 0 0 1 233.5 998.1M228.4 991.3A85.0 85.0 0 0 1 214.1 947.6M214.4 936.2A85.0 85.0 0 0 1 229.0 895.9M235.5 887.6A85.0 85.0 0 0 1 274.4 862.7M316.8 855.0A90.7 90.7 0 0 1 358.2 875.2M367.4 884.4A90.7 90.7 0 0 1 388.1 927.0M389.6 939.1A90.7 90.7 0 0 1 380.3 984.3M374.9 993.7A90.7 90.7 0 0 1 338.5 1025.7M329.9 1029.3A90.7 90.7 0 0 1 280.1 1032.7M271.0 1030.3A90.7 90.7 0 0 1 229.1 1001.8M223.6 994.5A90.7 90.7 0 0 1 208.4 947.8M208.7 935.6A90.7 90.7 0 0 1 224.2 892.6M231.2 883.8A90.7 90.7 0 0 1 272.8 857.2M317.9 849.4A96.5 96.5 0 0 1 361.9 870.8M371.7 880.6A96.5 96.5 0 0 1 393.8 925.9M395.3 938.8A96.5 96.5 0 0 1 385.4 986.9M379.7 996.8A96.5 96.5 0 0 1 341.0 1030.9M331.8 1034.7A96.5 96.5 0 0 1 278.9 1038.4M269.2 1035.8A96.5 96.5 0 0 1 224.7 1005.5M218.8 997.7A96.5 96.5 0 0 1 202.6 948.0M202.9 935.1A96.5 96.5 0 0 1 219.5 889.3M226.8 879.9A96.5 96.5 0 0 1 271.1 851.6M319.0 843.7A102.3 102.3 0 0 1 365.7 866.5M376.1 876.8A102.3 102.3 0 0 1 399.4 924.8M401.1 938.5A102.3 102.3 0 0 1 390.6 989.5M384.6 1000.0A102.3 102.3 0 0 1 343.5 1036.1M333.8 1040.2A102.3 102.3 0 0 1 277.7 1044.0M267.4 1041.3A102.3 102.3 0 0 1 220.2 1009.2M214.0 1000.9A102.3 102.3 0 0 1 196.8 948.3M197.2 934.6A102.3 102.3 0 0 1 214.7 886.1M222.5 876.1A102.3 102.3 0 0 1 269.4 846.1M320.2 838.1A108.0 108.0 0 0 1 369.4 862.1M380.4 873.0A108.0 108.0 0 0 1 405.1 923.8M406.9 938.2A108.0 108.0 0 0 1 395.8 992.0M389.4 1003.2A108.0 108.0 0 0 1 346.0 1041.3M335.8 1045.6A108.0 108.0 0 0 1 276.5 1049.7M265.6 1046.7A108.0 108.0 0 0 1 215.8 1012.9M209.2 1004.1A108.0 108.0 0 0 1 191.1 948.5M191.4 934.0A108.0 108.0 0 0 1 210.0 882.8M218.2 872.3A108.0 108.0 0 0 1 267.8 840.6M321.3 832.4A113.8 113.8 0 0 1 373.2 857.7M384.8 869.2A113.8 113.8 0 0 1 410.8 922.7M412.6 937.8A113.8 113.8 0 0 1 400.9 994.6M394.2 1006.3A113.8 113.8 0 0 1 348.5 1046.5M337.7 1051.0A113.8 113.8 0 0 1 275.3 1055.3M263.8 1052.2A113.8 113.8 0 0 1 211.3 1016.5M204.4 1007.3A113.8 113.8 0 0 1 185.3 948.8M185.7 933.5A113.8 113.8 0 0 1 205.2 879.5M213.9 868.4A113.8 113.8 0 0 1 266.1 835.1M322.4 826.7A119.6 119.6 0 0 1 377.0 853.3M389.1 865.4A119.6 119.6 0 0 1 416.5 921.6M418.4 937.5A119.6 119.6 0 0 1 406.1 997.2M399.1 1009.5A119.6 119.6 0 0 1 351.0 1051.7M339.7 1056.4A119.6 119.6 0 0 1 274.1 1061.0M262.1 1057.7A119.6 119.6 0 0 1 206.9 1020.2M199.6 1010.5A119.6 119.6 0 0 1 179.5 949.0M179.9 933.0A119.6 119.6 0 0 1 200.5 876.3M209.6 864.6A119.6 119.6 0 0 1 264.4 829.5M323.6 821.1A125.3 125.3 0 0 1 380.7 849.0M393.5 861.6A125.3 125.3 0 0 1 422.1 920.5M424.2 937.2A125.3 125.3 0 0 1 411.3 999.7M403.9 1012.6A125.3 125.3 0 0 1 353.6 1056.8M341.7 1061.9A125.3 125.3 0 0 1 272.9 1066.6M260.3 1063.2A125.3 125.3 0 0 1 202.4 1023.9M194.8 1013.7A125.3 125.3 0 0 1 173.8 949.2M174.2 932.4A125.3 125.3 0 0 1 195.7 873.0M205.3 860.8A125.3 125.3 0 0 1 262.8 824.0M324.7 815.4A131.1 131.1 0 0 1 384.5 844.6M397.8 857.8A131.1 131.1 0 0 1 427.8 919.4M429.9 936.9A131.1 131.1 0 0 1 416.4 1002.3M408.7 1015.8A131.1 131.1 0 0 1 356.1 1062.0M343.6 1067.3A131.1 131.1 0 0 1 271.7 1072.2M258.5 1068.7A131.1 131.1 0 0 1 198.0 1027.6M190.0 1016.9A131.1 131.1 0 0 1 168.0 949.5M168.5 931.9A131.1 131.1 0 0 1 190.9 869.7M201.0 857.0A131.1 131.1 0 0 1 261.1 818.5M325.8 809.8A136.9 136.9 0 0 1 388.3 840.2M402.1 854.0A136.9 136.9 0 0 1 433.5 918.4M435.7 936.6A136.9 136.9 0 0 1 421.6 1004.9M413.5 1019.0A136.9 136.9 0 0 1 358.6 1067.2M345.6 1072.7A136.9 136.9 0 0 1 270.5 1077.9M256.7 1074.2A136.9 136.9 0 0 1 193.5 1031.3M185.3 1020.1A136.9 136.9 0 0 1 162.2 949.7M162.7 931.4A136.9 136.9 0 0 1 186.2 866.5M196.6 853.1A136.9 136.9 0 0 1 259.4 813.0M327.0 804.1A142.7 142.7 0 0 1 392.0 835.9M406.5 850.2A142.7 142.7 0 0 1 439.1 917.3M441.4 936.3A142.7 142.7 0 0 1 426.8 1007.4M418.4 1022.1A142.7 142.7 0 0 1 361.1 1072.4M347.6 1078.1A142.7 142.7 0 0 1 269.3 1083.5M254.9 1079.7A142.7 142.7 0 0 1 189.1 1034.9M180.5 1023.4A142.7 142.7 0 0 1 156.5 950.0M157.0 930.8A142.7 142.7 0 0 1 181.4 863.2M192.3 849.3A142.7 142.7 0 0 1 257.8 807.4M328.1 798.5A148.4 148.4 0 0 1 395.8 831.5M410.8 846.4A148.4 148.4 0 0 1 444.8 916.2M447.2 936.0A148.4 148.4 0 0 1 431.9 1010.0M423.2 1025.3A148.4 148.4 0 0 1 363.6 1077.6M349.5 1083.6A148.4 148.4 0 0 1 268.1 1089.2M253.1 1085.2A148.4 148.4 0 0 1 184.6 1038.6M175.7 1026.6A148.4 148.4 0 0 1 150.7 950.2M151.2 930.3A148.4 148.4 0 0 1 176.7 859.9M188.0 845.5A148.4 148.4 0 0 1 256.1 801.9M329.2 792.8A154.2 154.2 0 0 1 399.5 827.1M415.2 842.6A154.2 154.2 0 0 1 450.5 915.1M453.0 935.7A154.2 154.2 0 0 1 437.1 1012.6M428.0 1028.4A154.2 154.2 0 0 1 366.1 1082.8M351.5 1089.0A154.2 154.2 0 0 1 266.9 1094.8M251.4 1090.6A154.2 154.2 0 0 1 180.2 1042.3M170.9 1029.8A154.2 154.2 0 0 1 144.9 950.5M145.5 929.8A154.2 154.2 0 0 1 171.9 856.7M183.7 841.6A154.2 154.2 0 0 1 254.4 796.4M330.3 787.1A160.0 160.0 0 0 1 403.3 822.7M419.5 838.8A160.0 160.0 0 0 1 456.1 914.0M458.7 935.3A160.0 160.0 0 0 1 442.3 1015.1M432.8 1031.6A160.0 160.0 0 0 1 368.6 1088.0M353.4 1094.4A160.0 160.0 0 0 1 265.7 1100.5M249.6 1096.1A160.0 160.0 0 0 1 175.7 1046.0M166.1 1033.0A160.0 160.0 0 0 1 139.2 950.7M139.7 929.2A160.0 160.0 0 0 1 167.2 853.4M179.4 837.8A160.0 160.0 0 0 1 252.8 790.9M331.5 781.5A165.7 165.7 0 0 1 407.1 818.4M423.9 835.1A165.7 165.7 0 0 1 461.8 912.9M464.5 935.0A165.7 165.7 0 0 1 447.4 1017.7M437.7 1034.7A165.7 165.7 0 0 1 371.1 1093.2M355.4 1099.8A165.7 165.7 0 0 1 264.5 1106.1M247.8 1101.6A165.7 165.7 0 0 1 171.3 1049.6M161.3 1036.2A165.7 165.7 0 0 1 133.4 950.9M134.0 928.7A165.7 165.7 0 0 1 162.4 850.1M175.1 834.0A165.7 165.7 0 0 1 251.1 785.3M332.6 775.8A171.5 171.5 0 0 1 410.8 814.0M428.2 831.3A171.5 171.5 0 0 1 467.5 911.9M470.2 934.7A171.5 171.5 0 0 1 452.6 1020.3M442.5 1037.9A171.5 171.5 0 0 1 373.6 1098.4M357.4 1105.3A171.5 171.5 0 0 1 263.3 1111.8M246.0 1107.1A171.5 171.5 0 0 1 166.9 1053.3M156.5 1039.4A171.5 171.5 0 0 1 127.7 951.2M128.2 928.2A171.5 171.5 0 0 1 157.7 846.9M170.8 830.1A171.5 171.5 0 0 1 249.4 779.8M333.7 770.2A177.3 177.3 0 0 1 414.6 809.6M432.6 827.5A177.3 177.3 0 0 1 473.1 910.8M476.0 934.4A177.3 177.3 0 0 1 457.8 1022.8M447.3 1041.1A177.3 177.3 0 0 1 376.2 1103.6M359.3 1110.7A177.3 177.3 0 0 1 262.1 1117.4M244.2 1112.6A177.3 177.3 0 0 1 162.4 1057.0M151.7 1042.6A177.3 177.3 0 0 1 121.9 951.4M122.5 927.6A177.3 177.3 0 0 1 152.9 843.6M166.4 826.3A177.3 177.3 0 0 1 247.8 774.3M334.9 764.5A183.0 183.0 0 0 1 418.4 805.2M436.9 823.7A183.0 183.0 0 0 1 478.8 909.7M481.8 934.1A183.0 183.0 0 0 1 463.0 1025.4M452.2 1044.2A183.0 183.0 0 0 1 378.7 1108.8M361.3 1116.1A183.0 183.0 0 0 1 260.9 1123.0M242.4 1118.1A183.0 183.0 0 0 1 158.0 1060.7M146.9 1045.8A183.0 183.0 0 0 1 116.1 951.7M116.7 927.1A183.0 183.0 0 0 1 148.2 840.3M162.1 822.5A183.0 183.0 0 0 1 246.1 768.8M336.0 758.9A188.8 188.8 0 0 1 422.1 800.9M441.3 819.9A188.8 188.8 0 0 1 484.5 908.6M487.5 933.8A188.8 188.8 0 0 1 468.1 1028.0M457.0 1047.4A188.8 188.8 0 0 1 381.2 1114.0M363.3 1121.5A188.8 188.8 0 0 1 259.7 1128.7M240.7 1123.6A188.8 188.8 0 0 1 153.5 1064.4M142.1 1049.0A188.8 188.8 0 0 1 110.4 951.9M111.0 926.6A188.8 188.8 0 0 1 143.4 837.1M157.8 818.6A188.8 188.8 0 0 1 244.4 763.2M337.1 753.2A194.6 194.6 0 0 1 425.9 796.5M445.6 816.1A194.6 194.6 0 0 1 490.1 907.5M493.3 933.5A194.6 194.6 0 0 1 473.3 1030.5M461.8 1050.5A194.6 194.6 0 0 1 383.7 1119.2M365.2 1127.0A194.6 194.6 0 0 1 258.5 1134.3M238.9 1129.1A194.6 194.6 0 0 1 149.1 1068.0M137.3 1052.2A194.6 194.6 0 0 1 104.6 952.1M105.3 926.0A194.6 194.6 0 0 1 138.6 833.8M153.5 814.8A194.6 194.6 0 0 1 242.8 757.7M338.3 747.5A200.3 200.3 0 0 1 429.6 792.1M450.0 812.3A200.3 200.3 0 0 1 495.8 906.5M499.1 933.2A200.3 200.3 0 0 1 478.5 1033.1M466.6 1053.7A200.3 200.3 0 0 1 386.2 1124.4M367.2 1132.4A200.3 200.3 0 0 1 257.3 1140.0M237.1 1134.5A200.3 200.3 0 0 1 144.6 1071.7M132.5 1055.5A200.3 200.3 0 0 1 98.8 952.4M99.5 925.5A200.3 200.3 0 0 1 133.9 830.5M149.2 811.0A200.3 200.3 0 0 1 241.1 752.2M339.4 741.9A206.1 206.1 0 0 1 433.4 787.7M454.3 808.5A206.1 206.1 0 0 1 501.5 905.4M504.8 932.9A206.1 206.1 0 0 1 483.6 1035.6M471.5 1056.9A206.1 206.1 0 0 1 388.7 1129.6M369.2 1137.8A206.1 206.1 0 0 1 256.1 1145.6M235.3 1140.0A206.1 206.1 0 0 1 140.2 1075.4M127.7 1058.7A206.1 206.1 0 0 1 93.1 952.6M93.8 925.0A206.1 206.1 0 0 1 129.1 827.3M144.9 807.2A206.1 206.1 0 0 1 239.4 746.7M340.5 736.2A211.9 211.9 0 0 1 437.2 783.4M458.7 804.7A211.9 211.9 0 0 1 507.1 904.3M510.6 932.5A211.9 211.9 0 0 1 488.8 1038.2M476.3 1060.0A211.9 211.9 0 0 1 391.2 1134.8M371.1 1143.2A211.9 211.9 0 0 1 254.9 1151.3M233.5 1145.5A211.9 211.9 0 0 1 135.7 1079.1M122.9 1061.9A211.9 211.9 0 0 1 87.3 952.9M88.0 924.4A211.9 211.9 0 0 1 124.4 824.0M140.5 803.3A211.9 211.9 0 0 1 237.8 741.2M341.6 730.6A217.7 217.7 0 0 1 440.9 779.0M463.0 800.9A217.7 217.7 0 0 1 512.8 903.2M516.3 932.2A217.7 217.7 0 0 1 494.0 1040.8M481.1 1063.2A217.7 217.7 0 0 1 393.7 1140.0M373.1 1148.7A217.7 217.7 0 0 1 253.7 1156.9M231.7 1151.0A217.7 217.7 0 0 1 131.3 1082.7M118.1 1065.1A217.7 217.7 0 0 1 81.5 953.1M82.3 923.9A217.7 217.7 0 0 1 119.6 820.7M136.2 799.5A217.7 217.7 0 0 1 236.1 735.6M342.8 724.9A223.4 223.4 0 0 1 444.7 774.6M467.4 797.1A223.4 223.4 0 0 1 518.5 902.1M522.1 931.9A223.4 223.4 0 0 1 499.1 1043.3M486.0 1066.3A223.4 223.4 0 0 1 396.2 1145.2M375.1 1154.1A223.4 223.4 0 0 1 252.5 1162.5M230.0 1156.5A223.4 223.4 0 0 1 126.8 1086.4M113.3 1068.3A223.4 223.4 0 0 1 75.8 953.4M76.5 923.4A223.4 223.4 0 0 1 114.9 817.4M131.9 795.7A223.4 223.4 0 0 1 234.4 730.1M343.9 719.2A229.2 229.2 0 0 1 448.5 770.2M471.7 793.3A229.2 229.2 0 0 1 524.1 901.1M527.9 931.6A229.2 229.2 0 0 1 504.3 1045.9M490.8 1069.5A229.2 229.2 0 0 1 398.8 1150.4M377.0 1159.5A229.2 229.2 0 0 1 251.3 1168.2M228.2 1162.0A229.2 229.2 0 0 1 122.4 1090.1M108.5 1071.5A229.2 229.2 0 0 1 70.0 953.6M70.8 922.8A229.2 229.2 0 0 1 110.1 814.2M127.6 791.8A229.2 229.2 0 0 1 232.8 724.6M345.0 713.6A235.0 235.0 0 0 1 452.2 765.9M476.1 789.5A235.0 235.0 0 0 1 529.8 900.0M533.6 931.3A235.0 235.0 0 0 1 509.5 1048.5M495.6 1072.7A235.0 235.0 0 0 1 401.3 1155.5M379.0 1164.9A235.0 235.0 0 0 1 250.1 1173.8M226.4 1167.5A235.0 235.0 0 0 1 118.0 1093.8M103.7 1074.7A235.0 235.0 0 0 1 64.2 953.8M65.0 922.3A235.0 235.0 0 0 1 105.4 810.9M123.3 788.0A235.0 235.0 0 0 1 231.1 719.1M346.2 707.9A240.7 240.7 0 0 1 456.0 761.5M480.4 785.7A240.7 240.7 0 0 1 535.5 898.9M539.4 931.0A240.7 240.7 0 0 1 514.6 1051.0M500.4 1075.8A240.7 240.7 0 0 1 403.8 1160.7M380.9 1170.4A240.7 240.7 0 0 1 248.9 1179.5M224.6 1173.0A240.7 240.7 0 0 1 113.5 1097.5M98.9 1077.9A240.7 240.7 0 0 1 58.5 954.1M59.3 921.8A240.7 240.7 0 0 1 100.6 807.6M119.0 784.2A240.7 240.7 0 0 1 229.4 713.5M347.3 702.3A246.5 246.5 0 0 1 459.7 757.1M484.8 782.0A246.5 246.5 0 0 1 541.1 897.8M545.1 930.7A246.5 246.5 0 0 1 519.8 1053.6M505.3 1079.0A246.5 246.5 0 0 1 406.3 1165.9M382.9 1175.8A246.5 246.5 0 0 1 247.7 1185.1M222.8 1178.4A246.5 246.5 0 0 1 109.1 1101.1M94.2 1081.1A246.5 246.5 0 0 1 52.7 954.3M53.5 921.2A246.5 246.5 0 0 1 95.8 804.4M114.7 780.3A246.5 246.5 0 0 1 227.8 708.0M348.4 696.6A252.3 252.3 0 0 1 463.5 752.7M489.1 778.2A252.3 252.3 0 0 1 546.8 896.7M550.9 930.4A252.3 252.3 0 0 1 525.0 1056.2M510.1 1082.1A252.3 252.3 0 0 1 408.8 1171.1M384.9 1181.2A252.3 252.3 0 0 1 246.5 1190.8M221.0 1183.9A252.3 252.3 0 0 1 104.6 1104.8M89.4 1084.3A252.3 252.3 0 0 1 46.9 954.6M47.8 920.7A252.3 252.3 0 0 1 91.1 801.1M110.3 776.5A252.3 252.3 0 0 1 226.1 702.5M349.6 691.0A258.1 258.1 0 0 1 467.3 748.4M493.5 774.4A258.1 258.1 0 0 1 552.5 895.6M556.7 930.0A258.1 258.1 0 0 1 530.1 1058.7M514.9 1085.3A258.1 258.1 0 0 1 411.3 1176.3M386.8 1186.6A258.1 258.1 0 0 1 245.3 1196.4M219.3 1189.4A258.1 258.1 0 0 1 100.2 1108.5M84.6 1087.6A258.1 258.1 0 0 1 41.2 954.8M42.1 920.2A258.1 258.1 0 0 1 86.3 797.8M106.0 772.7A258.1 258.1 0 0 1 224.4 697.0M350.7 685.3A263.8 263.8 0 0 1 471.0 744.0M497.8 770.6A263.8 263.8 0 0 1 558.1 894.6M562.4 929.7A263.8 263.8 0 0 1 535.3 1061.3M519.8 1088.5A263.8 263.8 0 0 1 413.8 1181.5M388.8 1192.1A263.8 263.8 0 0 1 244.1 1202.1M217.5 1194.9A263.8 263.8 0 0 1 95.7 1112.2M79.8 1090.8A263.8 263.8 0 0 1 35.4 955.0M36.3 919.6A263.8 263.8 0 0 1 81.6 794.6M101.7 768.8A263.8 263.8 0 0 1 222.7 691.4M351.8 679.6A269.6 269.6 0 0 1 474.8 739.6M502.2 766.8A269.6 269.6 0 0 1 563.8 893.5M568.2 929.4A269.6 269.6 0 0 1 540.5 1063.9M524.6 1091.6A269.6 269.6 0 0 1 416.3 1186.7M390.8 1197.5A269.6 269.6 0 0 1 242.9 1207.7M215.7 1200.4A269.6 269.6 0 0 1 91.3 1115.8M75.0 1094.0A269.6 269.6 0 0 1 29.6 955.3M30.6 919.1A269.6 269.6 0 0 1 76.8 791.3M97.4 765.0A269.6 269.6 0 0 1 221.1 685.9" stroke="#7db4ec" stroke-width="2.1" fill="none"/><path d="M353.8 669.6A279.8 279.8 0 0 1 481.5 731.9M509.8 760.1A279.8 279.8 0 0 1 573.8 891.6M578.4 928.9A279.8 279.8 0 0 1 549.6 1068.4M533.1 1097.2A279.8 279.8 0 0 1 420.8 1195.9M394.2 1207.1A279.8 279.8 0 0 1 240.8 1217.7M212.5 1210.1A279.8 279.8 0 0 1 83.4 1122.4M66.5 1099.7A279.8 279.8 0 0 1 19.4 955.7M20.4 918.2A279.8 279.8 0 0 1 68.4 785.5M89.8 758.2A279.8 279.8 0 0 1 218.1 676.1" stroke="#72b0f0" stroke-width="2.4" fill="none"/><path d="M364.9 940.4A66.0 66.0 0 0 1 358.1 973.3" stroke="#7ab6f2" stroke-width="12" fill="none"/><path d="M350.9 977.9A62.0 62.0 0 0 1 326.0 999.8" stroke="#7ab6f2" stroke-width="8" fill="none"/><path d="M242.5 981.8A68.0 68.0 0 0 1 231.1 946.8" stroke="#7ab6f2" stroke-width="14" fill="none"/><path d="M231.3 937.7A68.0 68.0 0 0 1 243.0 905.5" stroke="#7ab6f2" stroke-width="14" fill="none"/><path d="M240.7 892.2A78.0 78.0 0 0 1 276.5 869.3" stroke="#7ab6f2" stroke-width="8" fill="none"/><path d="M278.6 1006.8A66.0 66.0 0 0 1 248.1 986.1" stroke="#7ab6f2" stroke-width="8" fill="none"/><path d="M315.2 867.7A78.0 78.0 0 0 1 350.7 885.6M313.3 879.6A66.0 66.0 0 0 1 364.9 940.5M355.5 974.0A64.0 64.0 0 0 1 353.3 977.9M369.0 982.8A80.0 80.0 0 0 1 366.1 987.6M317.2 996.9A56.0 56.0 0 0 1 286.4 998.6M318.4 1007.6A66.5 66.5 0 0 1 284.6 1008.9M316.4 1019.5A77.5 77.5 0 0 1 282.9 1019.8M276.8 1012.5A72.0 72.0 0 0 1 243.5 989.9M234.6 987.1A77.5 77.5 0 0 1 221.6 947.2" stroke="#e0584a" stroke-width="2.4" fill="none"/><path d="M307.4 888.0h1.3v1.3h-1.3zM308.3 882.3h1.3v1.3h-1.3zM309.3 876.6h1.3v1.3h-1.3zM310.2 870.9h1.3v1.3h-1.3zM311.1 865.2h1.3v1.3h-1.3zM312.1 859.5h1.3v1.3h-1.3zM312.8 853.6h1.8v1.8h-1.8zM313.7 847.9h1.8v1.8h-1.8zM314.6 842.2h1.8v1.8h-1.8zM315.6 836.5h1.8v1.8h-1.8zM316.5 830.8h1.8v1.8h-1.8zM317.4 825.1h1.8v1.8h-1.8zM318.4 819.4h1.8v1.8h-1.8zM319.1 813.5h2.2v2.2h-2.2zM320.0 807.8h2.2v2.2h-2.2zM321.0 802.1h2.2v2.2h-2.2zM321.9 796.4h2.2v2.2h-2.2zM322.8 790.7h2.2v2.2h-2.2zM323.8 785.0h2.2v2.2h-2.2zM324.7 779.3h2.2v2.2h-2.2zM325.6 773.7h2.2v2.2h-2.2zM326.5 768.0h2.2v2.2h-2.2zM327.5 762.3h2.2v2.2h-2.2zM328.4 756.6h2.2v2.2h-2.2zM329.3 750.9h2.2v2.2h-2.2zM330.3 745.2h2.2v2.2h-2.2zM331.2 739.5h2.2v2.2h-2.2zM332.1 733.8h2.2v2.2h-2.2zM333.1 728.1h2.2v2.2h-2.2zM334.0 722.4h2.2v2.2h-2.2zM334.9 716.7h2.2v2.2h-2.2zM335.9 711.0h2.2v2.2h-2.2zM336.8 705.3h2.2v2.2h-2.2zM337.7 699.6h2.2v2.2h-2.2zM338.7 693.9h2.2v2.2h-2.2zM339.6 688.2h2.2v2.2h-2.2zM340.5 682.5h2.2v2.2h-2.2zM341.5 676.9h2.2v2.2h-2.2zM343.0 667.6h2.2v2.2h-2.2zM339.3 905.0h1.3v1.3h-1.3zM343.5 901.1h1.3v1.3h-1.3zM347.7 897.1h1.3v1.3h-1.3zM352.0 893.2h1.3v1.3h-1.3zM356.2 889.2h1.3v1.3h-1.3zM360.4 885.3h1.3v1.3h-1.3zM364.3 881.1h1.8v1.8h-1.8zM368.6 877.2h1.8v1.8h-1.8zM372.8 873.2h1.8v1.8h-1.8zM377.0 869.3h1.8v1.8h-1.8zM381.2 865.3h1.8v1.8h-1.8zM385.4 861.4h1.8v1.8h-1.8zM389.6 857.5h1.8v1.8h-1.8zM393.6 853.3h2.2v2.2h-2.2zM397.8 849.4h2.2v2.2h-2.2zM402.1 845.4h2.2v2.2h-2.2zM406.3 841.5h2.2v2.2h-2.2zM410.5 837.5h2.2v2.2h-2.2zM414.7 833.6h2.2v2.2h-2.2zM418.9 829.7h2.2v2.2h-2.2zM423.1 825.7h2.2v2.2h-2.2zM427.3 821.8h2.2v2.2h-2.2zM431.5 817.8h2.2v2.2h-2.2zM435.8 813.9h2.2v2.2h-2.2zM440.0 809.9h2.2v2.2h-2.2zM444.2 806.0h2.2v2.2h-2.2zM448.4 802.1h2.2v2.2h-2.2zM452.6 798.1h2.2v2.2h-2.2zM456.8 794.2h2.2v2.2h-2.2zM461.0 790.2h2.2v2.2h-2.2zM465.3 786.3h2.2v2.2h-2.2zM469.5 782.4h2.2v2.2h-2.2zM473.7 778.4h2.2v2.2h-2.2zM477.9 774.5h2.2v2.2h-2.2zM482.1 770.5h2.2v2.2h-2.2zM486.3 766.6h2.2v2.2h-2.2zM490.5 762.6h2.2v2.2h-2.2zM494.7 758.7h2.2v2.2h-2.2zM501.6 752.3h2.2v2.2h-2.2zM354.2 938.4h1.3v1.3h-1.3zM360.0 937.9h1.3v1.3h-1.3zM365.7 937.3h1.3v1.3h-1.3zM371.5 936.8h1.3v1.3h-1.3zM377.2 936.3h1.3v1.3h-1.3zM383.0 935.8h1.3v1.3h-1.3zM388.5 935.0h1.8v1.8h-1.8zM394.2 934.5h1.8v1.8h-1.8zM400.0 934.0h1.8v1.8h-1.8zM405.7 933.5h1.8v1.8h-1.8zM411.4 933.0h1.8v1.8h-1.8zM417.2 932.5h1.8v1.8h-1.8zM422.9 932.0h1.8v1.8h-1.8zM428.5 931.2h2.2v2.2h-2.2zM434.2 930.7h2.2v2.2h-2.2zM440.0 930.2h2.2v2.2h-2.2zM445.7 929.7h2.2v2.2h-2.2zM451.5 929.2h2.2v2.2h-2.2zM457.2 928.7h2.2v2.2h-2.2zM463.0 928.2h2.2v2.2h-2.2zM468.7 927.7h2.2v2.2h-2.2zM474.5 927.1h2.2v2.2h-2.2zM480.2 926.6h2.2v2.2h-2.2zM486.0 926.1h2.2v2.2h-2.2zM491.7 925.6h2.2v2.2h-2.2zM497.5 925.1h2.2v2.2h-2.2zM503.2 924.6h2.2v2.2h-2.2zM509.0 924.1h2.2v2.2h-2.2zM514.7 923.6h2.2v2.2h-2.2zM520.4 923.0h2.2v2.2h-2.2zM526.2 922.5h2.2v2.2h-2.2zM531.9 922.0h2.2v2.2h-2.2zM537.7 921.5h2.2v2.2h-2.2zM543.4 921.0h2.2v2.2h-2.2zM549.2 920.5h2.2v2.2h-2.2zM554.9 920.0h2.2v2.2h-2.2zM560.7 919.4h2.2v2.2h-2.2zM566.4 918.9h2.2v2.2h-2.2zM575.8 918.1h2.2v2.2h-2.2zM346.3 972.4h1.3v1.3h-1.3zM351.3 975.4h1.3v1.3h-1.3zM356.2 978.4h1.3v1.3h-1.3zM361.1 981.4h1.3v1.3h-1.3zM366.1 984.4h1.3v1.3h-1.3zM371.0 987.4h1.3v1.3h-1.3zM375.7 990.1h1.8v1.8h-1.8zM380.6 993.1h1.8v1.8h-1.8zM385.6 996.1h1.8v1.8h-1.8zM390.5 999.1h1.8v1.8h-1.8zM395.4 1002.1h1.8v1.8h-1.8zM400.4 1005.0h1.8v1.8h-1.8zM405.3 1008.0h1.8v1.8h-1.8zM410.0 1010.8h2.2v2.2h-2.2zM415.0 1013.8h2.2v2.2h-2.2zM419.9 1016.8h2.2v2.2h-2.2zM424.9 1019.8h2.2v2.2h-2.2zM429.8 1022.8h2.2v2.2h-2.2zM434.7 1025.8h2.2v2.2h-2.2zM439.7 1028.8h2.2v2.2h-2.2zM444.6 1031.7h2.2v2.2h-2.2zM449.5 1034.7h2.2v2.2h-2.2zM454.5 1037.7h2.2v2.2h-2.2zM459.4 1040.7h2.2v2.2h-2.2zM464.3 1043.7h2.2v2.2h-2.2zM469.3 1046.7h2.2v2.2h-2.2zM474.2 1049.7h2.2v2.2h-2.2zM479.1 1052.7h2.2v2.2h-2.2zM484.1 1055.7h2.2v2.2h-2.2zM489.0 1058.6h2.2v2.2h-2.2zM493.9 1061.6h2.2v2.2h-2.2zM498.9 1064.6h2.2v2.2h-2.2zM503.8 1067.6h2.2v2.2h-2.2zM508.8 1070.6h2.2v2.2h-2.2zM513.7 1073.6h2.2v2.2h-2.2zM518.6 1076.6h2.2v2.2h-2.2zM523.6 1079.6h2.2v2.2h-2.2zM528.5 1082.6h2.2v2.2h-2.2zM536.5 1087.4h2.2v2.2h-2.2zM319.3 995.4h1.3v1.3h-1.3zM321.4 1000.8h1.3v1.3h-1.3zM323.6 1006.1h1.3v1.3h-1.3zM325.7 1011.5h1.3v1.3h-1.3zM327.9 1016.8h1.3v1.3h-1.3zM330.0 1022.2h1.3v1.3h-1.3zM331.9 1027.3h1.8v1.8h-1.8zM334.1 1032.6h1.8v1.8h-1.8zM336.2 1038.0h1.8v1.8h-1.8zM338.4 1043.3h1.8v1.8h-1.8zM340.5 1048.7h1.8v1.8h-1.8zM342.7 1054.0h1.8v1.8h-1.8zM344.9 1059.4h1.8v1.8h-1.8zM346.8 1064.5h2.2v2.2h-2.2zM349.0 1069.9h2.2v2.2h-2.2zM351.1 1075.3h2.2v2.2h-2.2zM353.3 1080.6h2.2v2.2h-2.2zM355.4 1086.0h2.2v2.2h-2.2zM357.6 1091.3h2.2v2.2h-2.2zM359.7 1096.7h2.2v2.2h-2.2zM361.9 1102.0h2.2v2.2h-2.2zM364.0 1107.4h2.2v2.2h-2.2zM366.2 1112.7h2.2v2.2h-2.2zM368.3 1118.1h2.2v2.2h-2.2zM370.5 1123.4h2.2v2.2h-2.2zM372.6 1128.8h2.2v2.2h-2.2zM374.8 1134.1h2.2v2.2h-2.2zM376.9 1139.5h2.2v2.2h-2.2zM379.1 1144.9h2.2v2.2h-2.2zM381.2 1150.2h2.2v2.2h-2.2zM383.4 1155.6h2.2v2.2h-2.2zM385.5 1160.9h2.2v2.2h-2.2zM387.7 1166.3h2.2v2.2h-2.2zM389.8 1171.6h2.2v2.2h-2.2zM392.0 1177.0h2.2v2.2h-2.2zM394.1 1182.3h2.2v2.2h-2.2zM396.3 1187.7h2.2v2.2h-2.2zM398.5 1193.0h2.2v2.2h-2.2zM402.0 1201.8h2.2v2.2h-2.2zM282.9 997.3h1.3v1.3h-1.3zM281.3 1002.8h1.3v1.3h-1.3zM279.7 1008.4h1.3v1.3h-1.3zM278.1 1013.9h1.3v1.3h-1.3zM276.5 1019.5h1.3v1.3h-1.3zM274.9 1025.0h1.3v1.3h-1.3zM273.1 1030.3h1.8v1.8h-1.8zM271.5 1035.9h1.8v1.8h-1.8zM269.9 1041.4h1.8v1.8h-1.8zM268.3 1046.9h1.8v1.8h-1.8zM266.7 1052.5h1.8v1.8h-1.8zM265.1 1058.0h1.8v1.8h-1.8zM263.6 1063.6h1.8v1.8h-1.8zM261.8 1068.9h2.2v2.2h-2.2zM260.2 1074.5h2.2v2.2h-2.2zM258.6 1080.0h2.2v2.2h-2.2zM257.0 1085.6h2.2v2.2h-2.2zM255.4 1091.1h2.2v2.2h-2.2zM253.8 1096.7h2.2v2.2h-2.2zM252.2 1102.2h2.2v2.2h-2.2zM250.6 1107.8h2.2v2.2h-2.2zM249.0 1113.3h2.2v2.2h-2.2zM247.4 1118.8h2.2v2.2h-2.2zM245.9 1124.4h2.2v2.2h-2.2zM244.3 1129.9h2.2v2.2h-2.2zM242.7 1135.5h2.2v2.2h-2.2zM241.1 1141.0h2.2v2.2h-2.2zM239.5 1146.6h2.2v2.2h-2.2zM237.9 1152.1h2.2v2.2h-2.2zM236.3 1157.7h2.2v2.2h-2.2zM234.7 1163.2h2.2v2.2h-2.2zM233.1 1168.8h2.2v2.2h-2.2zM231.5 1174.3h2.2v2.2h-2.2zM230.0 1179.9h2.2v2.2h-2.2zM228.4 1185.4h2.2v2.2h-2.2zM226.8 1191.0h2.2v2.2h-2.2zM225.2 1196.5h2.2v2.2h-2.2zM223.6 1202.0h2.2v2.2h-2.2zM221.0 1211.1h2.2v2.2h-2.2zM252.8 976.2h1.3v1.3h-1.3zM248.2 979.5h1.3v1.3h-1.3zM243.5 982.9h1.3v1.3h-1.3zM238.8 986.3h1.3v1.3h-1.3zM234.1 989.7h1.3v1.3h-1.3zM229.5 993.0h1.3v1.3h-1.3zM224.5 996.2h1.8v1.8h-1.8zM219.8 999.5h1.8v1.8h-1.8zM215.2 1002.9h1.8v1.8h-1.8zM210.5 1006.3h1.8v1.8h-1.8zM205.8 1009.7h1.8v1.8h-1.8zM201.1 1013.0h1.8v1.8h-1.8zM196.4 1016.4h1.8v1.8h-1.8zM191.6 1019.6h2.2v2.2h-2.2zM186.9 1023.0h2.2v2.2h-2.2zM182.2 1026.3h2.2v2.2h-2.2zM177.5 1029.7h2.2v2.2h-2.2zM172.8 1033.1h2.2v2.2h-2.2zM168.2 1036.5h2.2v2.2h-2.2zM163.5 1039.8h2.2v2.2h-2.2zM158.8 1043.2h2.2v2.2h-2.2zM154.1 1046.6h2.2v2.2h-2.2zM149.4 1050.0h2.2v2.2h-2.2zM144.8 1053.3h2.2v2.2h-2.2zM140.1 1056.7h2.2v2.2h-2.2zM135.4 1060.1h2.2v2.2h-2.2zM130.7 1063.5h2.2v2.2h-2.2zM126.0 1066.8h2.2v2.2h-2.2zM121.4 1070.2h2.2v2.2h-2.2zM116.7 1073.6h2.2v2.2h-2.2zM112.0 1077.0h2.2v2.2h-2.2zM107.3 1080.3h2.2v2.2h-2.2zM102.6 1083.7h2.2v2.2h-2.2zM98.0 1087.1h2.2v2.2h-2.2zM93.3 1090.5h2.2v2.2h-2.2zM88.6 1093.8h2.2v2.2h-2.2zM83.9 1097.2h2.2v2.2h-2.2zM79.2 1100.6h2.2v2.2h-2.2zM71.6 1106.1h2.2v2.2h-2.2zM242.3 940.1h1.3v1.3h-1.3zM236.6 939.8h1.3v1.3h-1.3zM230.8 939.5h1.3v1.3h-1.3zM225.1 939.1h1.3v1.3h-1.3zM219.3 938.8h1.3v1.3h-1.3zM213.5 938.5h1.3v1.3h-1.3zM207.5 937.9h1.8v1.8h-1.8zM201.8 937.5h1.8v1.8h-1.8zM196.0 937.2h1.8v1.8h-1.8zM190.2 936.9h1.8v1.8h-1.8zM184.5 936.5h1.8v1.8h-1.8zM178.7 936.2h1.8v1.8h-1.8zM173.0 935.9h1.8v1.8h-1.8zM167.0 935.4h2.2v2.2h-2.2zM161.2 935.0h2.2v2.2h-2.2zM155.5 934.7h2.2v2.2h-2.2zM149.7 934.4h2.2v2.2h-2.2zM144.0 934.0h2.2v2.2h-2.2zM138.2 933.7h2.2v2.2h-2.2zM132.4 933.4h2.2v2.2h-2.2zM126.7 933.0h2.2v2.2h-2.2zM120.9 932.7h2.2v2.2h-2.2zM115.2 932.4h2.2v2.2h-2.2zM109.4 932.0h2.2v2.2h-2.2zM103.6 931.7h2.2v2.2h-2.2zM97.9 931.4h2.2v2.2h-2.2zM92.1 931.0h2.2v2.2h-2.2zM86.4 930.7h2.2v2.2h-2.2zM80.6 930.4h2.2v2.2h-2.2zM74.8 930.0h2.2v2.2h-2.2zM69.1 929.7h2.2v2.2h-2.2zM63.3 929.4h2.2v2.2h-2.2zM57.6 929.0h2.2v2.2h-2.2zM51.8 928.7h2.2v2.2h-2.2zM46.0 928.4h2.2v2.2h-2.2zM40.3 928.0h2.2v2.2h-2.2zM34.5 927.7h2.2v2.2h-2.2zM28.8 927.4h2.2v2.2h-2.2zM19.4 926.8h2.2v2.2h-2.2zM255.9 906.7h1.3v1.3h-1.3zM251.5 902.9h1.3v1.3h-1.3zM247.1 899.2h1.3v1.3h-1.3zM242.8 895.4h1.3v1.3h-1.3zM238.4 891.6h1.3v1.3h-1.3zM234.0 887.8h1.3v1.3h-1.3zM229.4 883.8h1.8v1.8h-1.8zM225.1 880.1h1.8v1.8h-1.8zM220.7 876.3h1.8v1.8h-1.8zM216.3 872.5h1.8v1.8h-1.8zM212.0 868.7h1.8v1.8h-1.8zM207.6 865.0h1.8v1.8h-1.8zM203.2 861.2h1.8v1.8h-1.8zM198.7 857.2h2.2v2.2h-2.2zM194.3 853.5h2.2v2.2h-2.2zM189.9 849.7h2.2v2.2h-2.2zM185.5 845.9h2.2v2.2h-2.2zM181.2 842.1h2.2v2.2h-2.2zM176.8 838.4h2.2v2.2h-2.2zM172.4 834.6h2.2v2.2h-2.2zM168.1 830.8h2.2v2.2h-2.2zM163.7 827.1h2.2v2.2h-2.2zM159.3 823.3h2.2v2.2h-2.2zM155.0 819.5h2.2v2.2h-2.2zM150.6 815.8h2.2v2.2h-2.2zM146.2 812.0h2.2v2.2h-2.2zM141.9 808.2h2.2v2.2h-2.2zM137.5 804.4h2.2v2.2h-2.2zM133.1 800.7h2.2v2.2h-2.2zM128.8 796.9h2.2v2.2h-2.2zM124.4 793.1h2.2v2.2h-2.2zM120.0 789.4h2.2v2.2h-2.2zM115.7 785.6h2.2v2.2h-2.2zM111.3 781.8h2.2v2.2h-2.2zM106.9 778.1h2.2v2.2h-2.2zM102.6 774.3h2.2v2.2h-2.2zM98.2 770.5h2.2v2.2h-2.2zM93.8 766.7h2.2v2.2h-2.2zM86.7 760.6h2.2v2.2h-2.2z" fill="#f3e68e"/><line x1="299" y1="894" x2="299" y2="662" stroke="#d8b040" stroke-width="1.3"/><circle cx="299" cy="944" r="281.5" fill="none" stroke="#bdbdbd" stroke-width="0.9"/><circle cx="299" cy="944" r="49.6" fill="#101010" stroke="#d0d0d0" stroke-width="1.1"/></svg>
<div class="t" style="left:786.0px;top:426.1px;color:#d8d8d8;">h0</div>
<div class="t" style="left:786.0px;top:1006.1px;color:#d8d8d8;">h1</div>
<div class="r" style="left:1091.0px;top:43.0px;width:1.5px;height:1340.0px;background:#444448;"></div>
<div class="r" style="left:494.0px;top:1382.0px;width:2797.0px;height:1.2px;background:#4a4a4a;"></div>
<div class="r" style="left:494.0px;top:1404.0px;width:2797.0px;height:1.0px;background:#1a1a1a;"></div>
<div class="r" style="left:494.0px;top:1405.0px;width:2797.0px;height:4.0px;background:#262626;"></div>
<div class="r" style="left:0.0px;top:0.0px;width:494.0px;height:1409.0px;background:#101010;"></div>
<div class="r" style="left:0.0px;top:0.0px;width:494.0px;height:1409.0px;border:1px solid #3a3a3a;"></div>
<div class="r" style="left:1.0px;top:1.0px;width:492.0px;height:22.0px;background:#1e1e1e;"></div>
<svg style="left:7px;top:4px;" width="16" height="14" viewBox="0 0 16 14"><path d="M1 1v12h14M2 11l4-5 3 3 5-6" stroke="#c8c8c8" stroke-width="1.2" fill="none"/></svg>
<div class="t" style="left:29.5px;top:7.1px;color:#e6e6e6;">Data Information</div>
<svg style="left:476px;top:7px;" width="10" height="10" viewBox="0 0 10 10"><path d="M0 0L10 10M10 0L0 10" stroke="#e0e0e0" stroke-width="1.3" fill="none"/></svg>
<div class="r" style="left:473.5px;top:33.0px;width:10.5px;height:837.0px;background:#4a4a4a;border-radius:5px;"></div>
<div class="r" style="left:10.0px;top:31.5px;width:462.0px;height:21.5px;background:#232323;border:1px solid #3a3a3a;border-radius:5px;"></div>
<svg style="left:18px;top:38px;" width="8" height="9" viewBox="0 0 8 9"><path d="M0 0L7 4.5L0 9z" fill="#e6e6e6"/></svg>
<div class="t" style="left:34.0px;top:36.6px;">Settings</div>
<div class="r" style="left:10.0px;top:77.5px;width:462.0px;height:56.5px;background:#101010;border:1px solid #333333;border-radius:5px;"></div>
<div class="r" style="left:11.0px;top:78.5px;width:460.0px;height:20.5px;background:#1f1f1f;border-radius:4px;"></div>
<div class="r" style="left:18.0px;top:80.5px;width:16.0px;height:15.0px;background:#1f3350;"></div>
<svg style="left:18px;top:80.5px;" width="16" height="15" viewBox="0 0 16 15"><path d="M3.5 7.5l3 3 6-6.5" stroke="#3d8ef0" stroke-width="2" fill="none"/></svg>
<div class="t" style="left:42.0px;top:82.6px;">Data Source Information</div>
<div class="t" style="left:18.0px;top:111.6px;">Region 0x13200 - 0x133FF</div>
<div class="r" style="left:10.0px;top:139.5px;width:462.0px;height:36.5px;background:#101010;border:1px solid #333333;border-radius:5px;"></div>
<div class="r" style="left:11.0px;top:140.5px;width:460.0px;height:20.5px;background:#1f1f1f;border-radius:4px;"></div>
<div class="r" style="left:18.0px;top:142.5px;width:16.0px;height:15.0px;background:#1f3350;"></div>
<svg style="left:18px;top:142.5px;" width="16" height="15" viewBox="0 0 16 15"><path d="M3.5 7.5l3 3 6-6.5" stroke="#3d8ef0" stroke-width="2" fill="none"/></svg>
<div class="t" style="left:42.0px;top:144.6px;">Magic Information</div>
<div class="r" style="left:10.0px;top:181.0px;width:462.0px;height:1116.5px;background:#101010;border:1px solid #333333;border-radius:5px;height:1116.5px;"></div>
<div class="r" style="left:11.0px;top:182.0px;width:460.0px;height:20.5px;background:#1f1f1f;border-radius:4px;"></div>
<div class="r" style="left:18.0px;top:184.0px;width:16.0px;height:15.0px;background:#1f3350;"></div>
<svg style="left:18px;top:184px;" width="16" height="15" viewBox="0 0 16 15"><path d="M3.5 7.5l3 3 6-6.5" stroke="#3d8ef0" stroke-width="2" fill="none"/></svg>
<div class="t" style="left:42.0px;top:186.1px;">Information analysis</div>
<div class="r" style="left:441.0px;top:182.0px;width:22.0px;height:21.0px;background:#0d0d0d;border:1px solid #3a3a3a;"></div>
<svg style="left:441px;top:182px;" width="22" height="21" viewBox="0 0 22 21"><polygon points="9.12,6.43 9.80,3.60 12.20,3.60 12.88,6.43 12.55,6.30 15.03,4.77 16.73,6.47 15.20,8.95 15.07,8.62 17.90,9.30 17.90,11.70 15.07,12.38 15.20,12.05 16.73,14.53 15.03,16.23 12.55,14.70 12.88,14.57 12.20,17.40 9.80,17.40 9.12,14.57 9.45,14.70 6.97,16.23 5.27,14.53 6.80,12.05 6.93,12.38 4.10,11.70 4.10,9.30 6.93,8.62 6.80,8.95 5.27,6.47 6.97,4.77 9.45,6.30" stroke="#e0e0e0" stroke-width="1.1" fill="none" stroke-linejoin="round"/><circle cx="11" cy="10.5" r="1.68" stroke="#e0e0e0" stroke-width="1.1" fill="none"/></svg>
<div class="t" style="left:18.0px;top:214.1px;">Byte distribution</div>
<svg style="left:82px;top:241px;" width="371" height="237.5" viewBox="0 0 371 237.5"><rect x="0.5" y="0.5" width="370" height="236.5" fill="#0a0a0a" stroke="#3a3a3a"/><line x1="72.8" y1="0" x2="72.8" y2="237.5" stroke="#2a2a2a" stroke-width="1"/><line x1="115.4" y1="0" x2="115.4" y2="237.5" stroke="#2a2a2a" stroke-width="1"/><line x1="145.6" y1="0" x2="145.6" y2="237.5" stroke="#2a2a2a" stroke-width="1"/><line x1="169.0" y1="0" x2="169.0" y2="237.5" stroke="#2a2a2a" stroke-width="1"/><line x1="188.2" y1="0" x2="188.2" y2="237.5" stroke="#2a2a2a" stroke-width="1"/><line x1="204.3" y1="0" x2="204.3" y2="237.5" stroke="#2a2a2a" stroke-width="1"/><line x1="218.4" y1="0" x2="218.4" y2="237.5" stroke="#2a2a2a" stroke-width="1"/><line x1="230.7" y1="0" x2="230.7" y2="237.5" stroke="#2a2a2a" stroke-width="1"/><line x1="241.8" y1="0" x2="241.8" y2="237.5" stroke="#4a4a4a" stroke-width="1"/><line x1="314.6" y1="0" x2="314.6" y2="237.5" stroke="#2a2a2a" stroke-width="1"/><line x1="357.2" y1="0" x2="357.2" y2="237.5" stroke="#2a2a2a" stroke-width="1"/><line x1="0" y1="0.0" x2="371" y2="0.0" stroke="#1e1e1e" stroke-width="1"/><line x1="0" y1="14.8" x2="371" y2="14.8" stroke="#1e1e1e" stroke-width="1"/><line x1="0" y1="29.7" x2="371" y2="29.7" stroke="#1e1e1e" stroke-width="1"/><line x1="0" y1="44.5" x2="371" y2="44.5" stroke="#1e1e1e" stroke-width="1"/><line x1="0" y1="59.4" x2="371" y2="59.4" stroke="#1e1e1e" stroke-width="1"/><line x1="0" y1="74.2" x2="371" y2="74.2" stroke="#1e1e1e" stroke-width="1"/><line x1="0" y1="89.1" x2="371" y2="89.1" stroke="#1e1e1e" stroke-width="1"/><line x1="0" y1="103.9" x2="371" y2="103.9" stroke="#1e1e1e" stroke-width="1"/><line x1="0" y1="118.8" x2="371" y2="118.8" stroke="#1e1e1e" stroke-width="1"/><line x1="0" y1="133.6" x2="371" y2="133.6" stroke="#1e1e1e" stroke-width="1"/><line x1="0" y1="148.4" x2="371" y2="148.4" stroke="#1e1e1e" stroke-width="1"/><line x1="0" y1="163.3" x2="371" y2="163.3" stroke="#1e1e1e" stroke-width="1"/><line x1="0" y1="178.1" x2="371" y2="178.1" stroke="#1e1e1e" stroke-width="1"/><line x1="0" y1="193.0" x2="371" y2="193.0" stroke="#1e1e1e" stroke-width="1"/><line x1="0" y1="207.8" x2="371" y2="207.8" stroke="#1e1e1e" stroke-width="1"/><line x1="0" y1="222.7" x2="371" y2="222.7" stroke="#1e1e1e" stroke-width="1"/><line x1="0" y1="237.5" x2="371" y2="237.5" stroke="#1e1e1e" stroke-width="1"/><rect x="0" y="-0.50" width="72.8" height="1" fill="#6090d8"/><rect x="0" y="0.43" width="204.3" height="1" fill="#6090d8"/><rect x="0" y="1.36" width="145.6" height="1" fill="#6090d8"/><rect x="0" y="2.29" width="218.4" height="1" fill="#6090d8"/><rect x="0" y="3.23" width="72.8" height="1" fill="#6090d8"/><rect x="0" y="4.16" width="218.4" height="1" fill="#6090d8"/><rect x="0" y="6.02" width="72.8" height="1" fill="#6090d8"/><rect x="0" y="6.95" width="72.8" height="1" fill="#6090d8"/><rect x="0" y="7.88" width="115.4" height="1" fill="#6090d8"/><rect x="0" y="11.61" width="115.4" height="1" fill="#6090d8"/><rect x="0" y="12.54" width="230.7" height="1" fill="#6090d8"/><rect x="0" y="14.40" width="204.3" height="1" fill="#6090d8"/><rect x="0" y="15.33" width="72.8" height="1" fill="#6090d8"/><rect x="0" y="16.26" width="72.8" height="1" fill="#6090d8"/><rect x="0" y="19.06" width="72.8" height="1" fill="#6090d8"/><rect x="0" y="23.72" width="72.8" height="1" fill="#6090d8"/><rect x="0" y="24.65" width="72.8" height="1" fill="#6090d8"/><rect x="0" y="25.58" width="115.4" height="1" fill="#6090d8"/><rect x="0" y="26.51" width="72.8" height="1" fill="#6090d8"/><rect x="0" y="27.44" width="72.8" height="1" fill="#6090d8"/><rect x="0" y="28.37" width="72.8" height="1" fill="#6090d8"/><rect x="0" y="29.30" width="72.8" height="1" fill="#6090d8"/><rect x="0" y="30.24" width="72.8" height="1" fill="#6090d8"/><rect x="0" y="32.10" width="188.2" height="1" fill="#6090d8"/><rect x="0" y="33.03" width="72.8" height="1" fill="#6090d8"/><rect x="0" y="37.69" width="115.4" height="1" fill="#6090d8"/><rect x="0" y="38.62" width="72.8" height="1" fill="#6090d8"/><rect x="0" y="39.55" width="115.4" height="1" fill="#6090d8"/><rect x="0" y="41.41" width="145.6" height="1" fill="#6090d8"/><rect x="0" y="42.34" width="115.4" height="1" fill="#6090d8"/><rect x="0" y="45.14" width="145.6" height="1" fill="#6090d8"/><rect x="0" y="46.07" width="72.8" height="1" fill="#6090d8"/><rect x="0" y="47.00" width="204.3" height="1" fill="#6090d8"/><rect x="0" y="47.93" width="72.8" height="1" fill="#6090d8"/><rect x="0" y="48.86" width="72.8" height="1" fill="#6090d8"/><rect x="0" y="50.73" width="72.8" height="1" fill="#6090d8"/><rect x="0" y="54.45" width="72.8" height="1" fill="#6090d8"/><rect x="0" y="55.38" width="260.9" height="1" fill="#6090d8"/><rect x="0" y="57.25" width="72.8" height="1" fill="#6090d8"/><rect x="0" y="59.11" width="72.8" height="1" fill="#6090d8"/><rect x="0" y="60.04" width="72.8" height="1" fill="#6090d8"/><rect x="0" y="60.97" width="72.8" height="1" fill="#6090d8"/><rect x="0" y="62.83" width="72.8" height="1" fill="#6090d8"/><rect x="0" y="63.76" width="188.2" height="1" fill="#6090d8"/><rect x="0" y="64.70" width="72.8" height="1" fill="#6090d8"/><rect x="0" y="67.49" width="188.2" height="1" fill="#6090d8"/><rect x="0" y="69.35" width="169.0" height="1" fill="#6090d8"/><rect x="0" y="70.28" width="115.4" height="1" fill="#6090d8"/><rect x="0" y="72.15" width="115.4" height="1" fill="#6090d8"/><rect x="0" y="74.94" width="115.4" height="1" fill="#6090d8"/><rect x="0" y="75.87" width="72.8" height="1" fill="#6090d8"/><rect x="0" y="77.74" width="188.2" height="1" fill="#6090d8"/><rect x="0" y="78.67" width="72.8" height="1" fill="#6090d8"/><rect x="0" y="80.53" width="72.8" height="1" fill="#6090d8"/><rect x="0" y="81.46" width="115.4" height="1" fill="#6090d8"/><rect x="0" y="85.19" width="72.8" height="1" fill="#6090d8"/><rect x="0" y="87.98" width="72.8" height="1" fill="#6090d8"/><rect x="0" y="89.84" width="72.8" height="1" fill="#6090d8"/><rect x="0" y="90.77" width="115.4" height="1" fill="#6090d8"/><rect x="0" y="93.57" width="72.8" height="1" fill="#6090d8"/><rect x="0" y="96.36" width="72.8" height="1" fill="#6090d8"/><rect x="0" y="97.29" width="115.4" height="1" fill="#6090d8"/><rect x="0" y="99.16" width="72.8" height="1" fill="#6090d8"/><rect x="0" y="100.09" width="204.3" height="1" fill="#6090d8"/><rect x="0" y="101.02" width="72.8" height="1" fill="#6090d8"/><rect x="0" y="102.88" width="72.8" height="1" fill="#6090d8"/><rect x="0" y="106.61" width="72.8" height="1" fill="#6090d8"/><rect x="0" y="108.47" width="115.4" height="1" fill="#6090d8"/><rect x="0" y="110.33" width="72.8" height="1" fill="#6090d8"/><rect x="0" y="111.26" width="145.6" height="1" fill="#6090d8"/><rect x="0" y="112.20" width="72.8" height="1" fill="#6090d8"/><rect x="0" y="113.13" width="72.8" height="1" fill="#6090d8"/><rect x="0" y="114.06" width="145.6" height="1" fill="#6090d8"/><rect x="0" y="114.99" width="169.0" height="1" fill="#6090d8"/><rect x="0" y="115.92" width="218.4" height="1" fill="#6090d8"/><rect x="0" y="116.85" width="72.8" height="1" fill="#6090d8"/><rect x="0" y="117.78" width="72.8" height="1" fill="#6090d8"/><rect x="0" y="118.72" width="72.8" height="1" fill="#6090d8"/><rect x="0" y="121.51" width="145.6" height="1" fill="#6090d8"/><rect x="0" y="122.44" width="115.4" height="1" fill="#6090d8"/><rect x="0" y="124.30" width="72.8" height="1" fill="#6090d8"/><rect x="0" y="128.03" width="72.8" height="1" fill="#6090d8"/><rect x="0" y="128.96" width="169.0" height="1" fill="#6090d8"/><rect x="0" y="131.75" width="72.8" height="1" fill="#6090d8"/><rect x="0" y="133.62" width="115.4" height="1" fill="#6090d8"/><rect x="0" y="134.55" width="72.8" height="1" fill="#6090d8"/><rect x="0" y="135.48" width="145.6" height="1" fill="#6090d8"/><rect x="0" y="136.41" width="72.8" height="1" fill="#6090d8"/><rect x="0" y="137.34" width="145.6" height="1" fill="#6090d8"/><rect x="0" y="138.27" width="72.8" height="1" fill="#6090d8"/><rect x="0" y="142.00" width="72.8" height="1" fill="#6090d8"/><rect x="0" y="147.59" width="72.8" height="1" fill="#6090d8"/><rect x="0" y="150.38" width="145.6" height="1" fill="#6090d8"/><rect x="0" y="151.31" width="115.4" height="1" fill="#6090d8"/><rect x="0" y="169.01" width="72.8" height="1" fill="#6090d8"/><rect x="0" y="170.87" width="145.6" height="1" fill="#6090d8"/><rect x="0" y="171.80" width="72.8" height="1" fill="#6090d8"/><rect x="0" y="172.74" width="72.8" height="1" fill="#6090d8"/><rect x="0" y="173.67" width="72.8" height="1" fill="#6090d8"/><rect x="0" y="174.60" width="72.8" height="1" fill="#6090d8"/><rect x="0" y="175.53" width="72.8" height="1" fill="#6090d8"/><rect x="0" y="176.46" width="72.8" height="1" fill="#6090d8"/><rect x="0" y="180.19" width="145.6" height="1" fill="#6090d8"/><rect x="0" y="182.05" width="115.4" height="1" fill="#6090d8"/><rect x="0" y="182.98" width="72.8" height="1" fill="#6090d8"/><rect x="0" y="183.91" width="72.8" height="1" fill="#6090d8"/><rect x="0" y="184.84" width="145.6" height="1" fill="#6090d8"/><rect x="0" y="187.64" width="72.8" height="1" fill="#6090d8"/><rect x="0" y="188.57" width="72.8" height="1" fill="#6090d8"/><rect x="0" y="189.50" width="115.4" height="1" fill="#6090d8"/><rect x="0" y="191.36" width="145.6" height="1" fill="#6090d8"/><rect x="0" y="192.29" width="72.8" height="1" fill="#6090d8"/><rect x="0" y="194.16" width="72.8" height="1" fill="#6090d8"/><rect x="0" y="196.02" width="72.8" height="1" fill="#6090d8"/><rect x="0" y="196.95" width="115.4" height="1" fill="#6090d8"/><rect x="0" y="197.88" width="115.4" height="1" fill="#6090d8"/><rect x="0" y="201.61" width="145.6" height="1" fill="#6090d8"/><rect x="0" y="203.47" width="188.2" height="1" fill="#6090d8"/><rect x="0" y="205.33" width="145.6" height="1" fill="#6090d8"/><rect x="0" y="208.13" width="188.2" height="1" fill="#6090d8"/><rect x="0" y="209.99" width="72.8" height="1" fill="#6090d8"/><rect x="0" y="210.92" width="145.6" height="1" fill="#6090d8"/><rect x="0" y="211.85" width="115.4" height="1" fill="#6090d8"/><rect x="0" y="213.72" width="72.8" height="1" fill="#6090d8"/><rect x="0" y="214.65" width="72.8" height="1" fill="#6090d8"/><rect x="0" y="215.58" width="72.8" height="1" fill="#6090d8"/><rect x="0" y="216.51" width="115.4" height="1" fill="#6090d8"/><rect x="0" y="217.44" width="72.8" height="1" fill="#6090d8"/><rect x="0" y="219.30" width="115.4" height="1" fill="#6090d8"/><rect x="0" y="221.17" width="72.8" height="1" fill="#6090d8"/><rect x="0" y="222.10" width="72.8" height="1" fill="#6090d8"/><rect x="0" y="224.89" width="72.8" height="1" fill="#6090d8"/><rect x="0" y="225.82" width="72.8" height="1" fill="#6090d8"/><rect x="0" y="226.75" width="72.8" height="1" fill="#6090d8"/><rect x="0" y="227.69" width="72.8" height="1" fill="#6090d8"/><rect x="0" y="229.55" width="115.4" height="1" fill="#6090d8"/><rect x="0" y="231.41" width="115.4" height="1" fill="#6090d8"/><rect x="0" y="232.34" width="115.4" height="1" fill="#6090d8"/><rect x="0" y="233.27" width="188.2" height="1" fill="#6090d8"/><rect x="0" y="234.21" width="72.8" height="1" fill="#6090d8"/><rect x="0" y="235.14" width="72.8" height="1" fill="#6090d8"/><rect x="0" y="236.07" width="72.8" height="1" fill="#6090d8"/><rect x="0" y="237.00" width="115.4" height="1" fill="#6090d8"/></svg>
<div class="t" style="left:48.5px;top:235.4px;">0x00</div>
<div class="t" style="left:48.5px;top:250.2px;">0x0F</div>
<div class="t" style="left:48.5px;top:265.1px;">0x1F</div>
<div class="t" style="left:48.5px;top:279.9px;">0x2F</div>
<div class="t" style="left:48.5px;top:294.8px;">0x3F</div>
<div class="t" style="left:48.5px;top:309.6px;">0x4F</div>
<div class="t" style="left:48.5px;top:324.5px;">0x5F</div>
<div class="t" style="left:48.5px;top:339.3px;">0x6F</div>
<div class="t" style="left:48.5px;top:354.1px;">0x7F</div>
<div class="t" style="left:48.5px;top:369.0px;">0x8F</div>
<div class="t" style="left:48.5px;top:383.8px;">0x9F</div>
<div class="t" style="left:48.5px;top:398.7px;">0xAF</div>
<div class="t" style="left:48.5px;top:413.5px;">0xBF</div>
<div class="t" style="left:48.5px;top:428.4px;">0xCF</div>
<div class="t" style="left:48.5px;top:443.2px;">0xDF</div>
<div class="t" style="left:48.5px;top:458.1px;">0xEF</div>
<div class="t" style="left:48.5px;top:472.9px;">0xFF</div>
<div class="t" style="left:78.0px;top:487.1px;">1</div>
<div class="t" style="left:317.0px;top:487.1px;">10</div>
<div class="t" style="left:250.0px;top:508.6px;">Count</div>
<div class="t" style="left:17px;top:352.5px;width:40px;text-align:center;font-size:11.67px;line-height:15px;color:#dcdcdc;transform:rotate(-90deg) scaleY(1.08);transform-origin:50% 50%;">Value</div>
<div class="t" style="left:18.0px;top:537.6px;">Byte types</div>
<svg style="left:75.5px;top:565px;" width="377.5" height="202.5" viewBox="0 0 377.5 202.5"><rect x="0.5" y="0.5" width="376.5" height="201.5" fill="#0a0a0a" stroke="#3a3a3a"/><line x1="45.9" y1="0" x2="45.9" y2="202.5" stroke="#242424"/><line x1="120.0" y1="0" x2="120.0" y2="202.5" stroke="#242424"/><line x1="194.1" y1="0" x2="194.1" y2="202.5" stroke="#242424"/><line x1="267.8" y1="0" x2="267.8" y2="202.5" stroke="#242424"/><line x1="341.9" y1="0" x2="341.9" y2="202.5" stroke="#242424"/><line x1="0" y1="202.5" x2="377.5" y2="202.5" stroke="#242424"/><line x1="0" y1="182.2" x2="377.5" y2="182.2" stroke="#242424"/><line x1="0" y1="162.0" x2="377.5" y2="162.0" stroke="#242424"/><line x1="0" y1="141.8" x2="377.5" y2="141.8" stroke="#242424"/><line x1="0" y1="121.5" x2="377.5" y2="121.5" stroke="#242424"/><line x1="0" y1="101.2" x2="377.5" y2="101.2" stroke="#242424"/><line x1="0" y1="81.0" x2="377.5" y2="81.0" stroke="#242424"/><line x1="0" y1="60.8" x2="377.5" y2="60.8" stroke="#242424"/><line x1="0" y1="40.5" x2="377.5" y2="40.5" stroke="#242424"/><line x1="0" y1="20.2" x2="377.5" y2="20.2" stroke="#242424"/><line x1="0" y1="0.0" x2="377.5" y2="0.0" stroke="#242424"/><line x1="0" y1="119.1" x2="377.5" y2="119.1" stroke="#b07a9a" stroke-width="2.2"/><line x1="0" y1="119.9" x2="377.5" y2="119.9" stroke="#8a78b8" stroke-width="1.2"/><line x1="0" y1="150.7" x2="377.5" y2="150.7" stroke="#c48aa0" stroke-width="1.5"/><line x1="0" y1="157.9" x2="377.5" y2="157.9" stroke="#8a8a8a" stroke-width="1.3"/><line x1="0" y1="170.9" x2="377.5" y2="170.9" stroke="#8a7050" stroke-width="1.5"/><line x1="0" y1="178.2" x2="377.5" y2="178.2" stroke="#6aaed0" stroke-width="2.2"/><line x1="0" y1="181.6" x2="377.5" y2="181.6" stroke="#8f8a50" stroke-width="1.3"/><line x1="0" y1="185.5" x2="377.5" y2="185.5" stroke="#d08050" stroke-width="1.5"/><line x1="0" y1="194.6" x2="377.5" y2="194.6" stroke="#4aa0a0" stroke-width="1.3"/><line x1="0" y1="198.7" x2="377.5" y2="198.7" stroke="#4c72b0" stroke-width="1.3"/><line x1="0" y1="201.3" x2="377.5" y2="201.3" stroke="#937060" stroke-width="1.5"/></svg>
<div class="t" style="left:62.5px;top:761.9px;">0</div>
<div class="t" style="left:55.5px;top:741.6px;">10</div>
<div class="t" style="left:55.5px;top:721.4px;">20</div>
<div class="t" style="left:55.5px;top:701.1px;">30</div>
<div class="t" style="left:55.5px;top:680.9px;">40</div>
<div class="t" style="left:55.5px;top:660.6px;">50</div>
<div class="t" style="left:55.5px;top:640.4px;">60</div>
<div class="t" style="left:55.5px;top:620.1px;">70</div>
<div class="t" style="left:55.5px;top:599.9px;">80</div>
<div class="t" style="left:55.5px;top:579.6px;">90</div>
<div class="t" style="left:48.5px;top:559.4px;">100</div>
<div class="t" style="left:96.9px;top:775.1px;">0x13240</div>
<div class="r" style="left:121.4px;top:767.5px;width:1.0px;height:3.0px;background:#555;"></div>
<div class="t" style="left:171.0px;top:775.1px;">0x132A4</div>
<div class="r" style="left:195.5px;top:767.5px;width:1.0px;height:3.0px;background:#555;"></div>
<div class="t" style="left:245.1px;top:775.1px;">0x13308</div>
<div class="r" style="left:269.6px;top:767.5px;width:1.0px;height:3.0px;background:#555;"></div>
<div class="t" style="left:318.8px;top:775.1px;">0x1336C</div>
<div class="r" style="left:343.3px;top:767.5px;width:1.0px;height:3.0px;background:#555;"></div>
<div class="t" style="left:392.9px;top:775.1px;">0x133D0</div>
<div class="r" style="left:417.4px;top:767.5px;width:1.0px;height:3.0px;background:#555;"></div>
<div class="t" style="left:239.0px;top:795.1px;">Address</div>
<div class="t" style="left:-3px;top:658.0px;width:80px;text-align:center;font-size:11.67px;line-height:15px;color:#dcdcdc;transform:rotate(-90deg) scaleY(1.08);transform-origin:50% 50%;">Percentage</div>
<div class="r" style="left:28.5px;top:819.5px;width:424.5px;height:25.0px;background:#0f0f0f;border:1px solid #3a3a3a;"></div>
<div class="r" style="left:35.0px;top:826.5px;width:11.5px;height:11.5px;background:#4c72b0;"></div>
<div class="t" style="left:49.5px;top:826.1px;">iscntrl</div>
<div class="r" style="left:105.0px;top:826.5px;width:11.5px;height:11.5px;background:#dd8452;"></div>
<div class="t" style="left:119.5px;top:826.1px;">isprint</div>
<div class="r" style="left:175.0px;top:826.5px;width:11.5px;height:11.5px;background:#55a868;"></div>
<div class="t" style="left:189.5px;top:826.1px;">isspace</div>
<div class="r" style="left:245.0px;top:826.5px;width:11.5px;height:11.5px;background:#c44e52;"></div>
<div class="t" style="left:259.5px;top:826.1px;">isblank</div>
<div class="r" style="left:315.0px;top:826.5px;width:11.5px;height:11.5px;background:#8172b3;"></div>
<div class="t" style="left:329.5px;top:826.1px;">isgraph</div>
<div class="r" style="left:385.0px;top:826.5px;width:11.5px;height:11.5px;background:#937860;"></div>
<div class="t" style="left:399.5px;top:826.1px;">ispunct</div>
<div class="t" style="left:18.0px;top:861.1px;">Entropy</div>
<svg style="left:75.5px;top:889.5px;" width="377.5" height="237.0" viewBox="0 0 377.5 237.0"><rect x="0.5" y="0.5" width="376.5" height="236.0" fill="#0a0a0a" stroke="#3a3a3a"/><line x1="45.9" y1="0" x2="45.9" y2="237.0" stroke="#242424"/><line x1="120.0" y1="0" x2="120.0" y2="237.0" stroke="#242424"/><line x1="194.1" y1="0" x2="194.1" y2="237.0" stroke="#242424"/><line x1="267.8" y1="0" x2="267.8" y2="237.0" stroke="#242424"/><line x1="341.9" y1="0" x2="341.9" y2="237.0" stroke="#242424"/><line x1="0" y1="20.3" x2="377.5" y2="20.3" stroke="#242424"/><line x1="0" y1="59.8" x2="377.5" y2="59.8" stroke="#242424"/><line x1="0" y1="99.6" x2="377.5" y2="99.6" stroke="#242424"/><line x1="0" y1="139.5" x2="377.5" y2="139.5" stroke="#242424"/><line x1="0" y1="178.9" x2="377.5" y2="178.9" stroke="#242424"/><line x1="0" y1="218.1" x2="377.5" y2="218.1" stroke="#242424"/><line x1="0" y1="39.7" x2="377.5" y2="39.7" stroke="#4a6a96" stroke-width="1.5"/><line x1="0" y1="218.1" x2="377.5" y2="218.1" stroke="#5a5a5a" stroke-width="1"/></svg>
<div class="t" style="left:63.0px;top:904.2px;">1</div>
<div class="t" style="left:49.0px;top:943.7px;">0.8</div>
<div class="t" style="left:49.0px;top:983.5px;">0.6</div>
<div class="t" style="left:49.0px;top:1023.4px;">0.4</div>
<div class="t" style="left:49.0px;top:1062.8px;">0.2</div>
<div class="t" style="left:63.0px;top:1102.0px;">0</div>
<div class="t" style="left:96.9px;top:1135.1px;">0x13240</div>
<div class="r" style="left:121.4px;top:1122.5px;width:1.0px;height:4.0px;background:#555;"></div>
<div class="t" style="left:171.0px;top:1135.1px;">0x132A4</div>
<div class="r" style="left:195.5px;top:1122.5px;width:1.0px;height:4.0px;background:#555;"></div>
<div class="t" style="left:245.1px;top:1135.1px;">0x13308</div>
<div class="r" style="left:269.6px;top:1122.5px;width:1.0px;height:4.0px;background:#555;"></div>
<div class="t" style="left:318.8px;top:1135.1px;">0x1336C</div>
<div class="r" style="left:343.3px;top:1122.5px;width:1.0px;height:4.0px;background:#555;"></div>
<div class="t" style="left:392.9px;top:1135.1px;">0x133D0</div>
<div class="r" style="left:417.4px;top:1122.5px;width:1.0px;height:4.0px;background:#555;"></div>
<div class="t" style="left:239.0px;top:1155.6px;">Address</div>
<div class="t" style="left:-3px;top:999.5px;width:80px;text-align:center;font-size:11.67px;line-height:15px;color:#dcdcdc;transform:rotate(-90deg) scaleY(1.08);transform-origin:50% 50%;">Entropy</div>
<div class="t" style="left:18.0px;top:1187.6px;">Block size</div>
<div class="t" style="left:173.5px;top:1187.6px;">2 blocks of 256 bytes</div>
<div class="r" style="left:17.5px;top:1203.0px;width:446.5px;height:19.5px;background:#1a1a1a;"></div>
<div class="t" style="left:18.0px;top:1207.6px;">Overall entropy</div>
<div class="r" style="left:173.0px;top:1205.0px;width:200.0px;height:16.0px;background:#1f1f1f;border:1px solid #3a3a3a;"></div>
<div class="r" style="left:173.0px;top:1205.0px;width:183.0px;height:16.0px;background:#cf6650;"></div>
<div class="t" style="left:318.5px;top:1207.6px;">0.91350</div>
<div class="t" style="left:18.0px;top:1227.6px;">Highest block entropy</div>
<div class="t" style="left:173.5px;top:1227.6px;">0.89780 @ 0x013200</div>
<div class="r" style="left:17.5px;top:1243.0px;width:446.5px;height:19.5px;background:#1a1a1a;"></div>
<div class="t" style="left:18.0px;top:1247.6px;">Lowest block entropy</div>
<div class="t" style="left:173.5px;top:1247.6px;">0.00000 @ 0x013200</div>
<div class="t" style="left:18.0px;top:1267.6px;">Plain text percentage</div>
<div class="r" style="left:173.0px;top:1265.0px;width:200.0px;height:16.0px;background:#1f1f1f;border:1px solid #3a3a3a;"></div>
<div class="r" style="left:173.0px;top:1265.0px;width:85.0px;height:16.0px;background:#a8892c;"></div>
<div class="t" style="left:266.5px;top:1267.6px;">43%</div>
<div class="r" style="left:10.0px;top:1303.5px;width:462.0px;height:200.0px;background:#101010;border:1px solid #333333;border-radius:5px;"></div>
<div class="r" style="left:11.0px;top:1304.5px;width:460.0px;height:20.5px;background:#1f1f1f;border-radius:4px;"></div>
<div class="r" style="left:18.0px;top:1307.0px;width:16.0px;height:15.0px;background:#1f3350;"></div>
<svg style="left:18px;top:1307px;" width="16" height="15" viewBox="0 0 16 15"><path d="M3.5 7.5l3 3 6-6.5" stroke="#3d8ef0" stroke-width="2" fill="none"/></svg>
<div class="t" style="left:42.5px;top:1309.1px;">Byte Relationship</div>
<div class="r" style="left:441.0px;top:1304.0px;width:22.0px;height:21.0px;background:#0d0d0d;border:1px solid #3a3a3a;"></div>
<svg style="left:441px;top:1304px;" width="22" height="21" viewBox="0 0 22 21"><polygon points="9.12,6.43 9.80,3.60 12.20,3.60 12.88,6.43 12.55,6.30 15.03,4.77 16.73,6.47 15.20,8.95 15.07,8.62 17.90,9.30 17.90,11.70 15.07,12.38 15.20,12.05 16.73,14.53 15.03,16.23 12.55,14.70 12.88,14.57 12.20,17.40 9.80,17.40 9.12,14.57 9.45,14.70 6.97,16.23 5.27,14.53 6.80,12.05 6.93,12.38 4.10,11.70 4.10,9.30 6.93,8.62 6.80,8.95 5.27,6.47 6.97,4.77 9.45,6.30" stroke="#e0e0e0" stroke-width="1.1" fill="none" stroke-linejoin="round"/><circle cx="11" cy="10.5" r="1.68" stroke="#e0e0e0" stroke-width="1.1" fill="none"/></svg>
<div class="t" style="left:18.0px;top:1335.6px;">Digram</div>
<div class="r" style="left:18.0px;top:1353.0px;width:446.0px;height:80.0px;background:#000000;border:1px solid #3a3a3a;border-radius:6px;"></div>
<div class="r" style="left:29.0px;top:1365.0px;width:1.0px;height:1.0px;background:#6a6a6a;"></div>
<div class="r" style="left:29.0px;top:1371.0px;width:1.0px;height:1.0px;background:#6a6a6a;"></div>
<div class="r" style="left:29.0px;top:1376.0px;width:1.0px;height:1.0px;background:#6a6a6a;"></div>
<div class="r" style="left:29.0px;top:1391.0px;width:1.0px;height:1.0px;background:#6a6a6a;"></div>
</body></html>
